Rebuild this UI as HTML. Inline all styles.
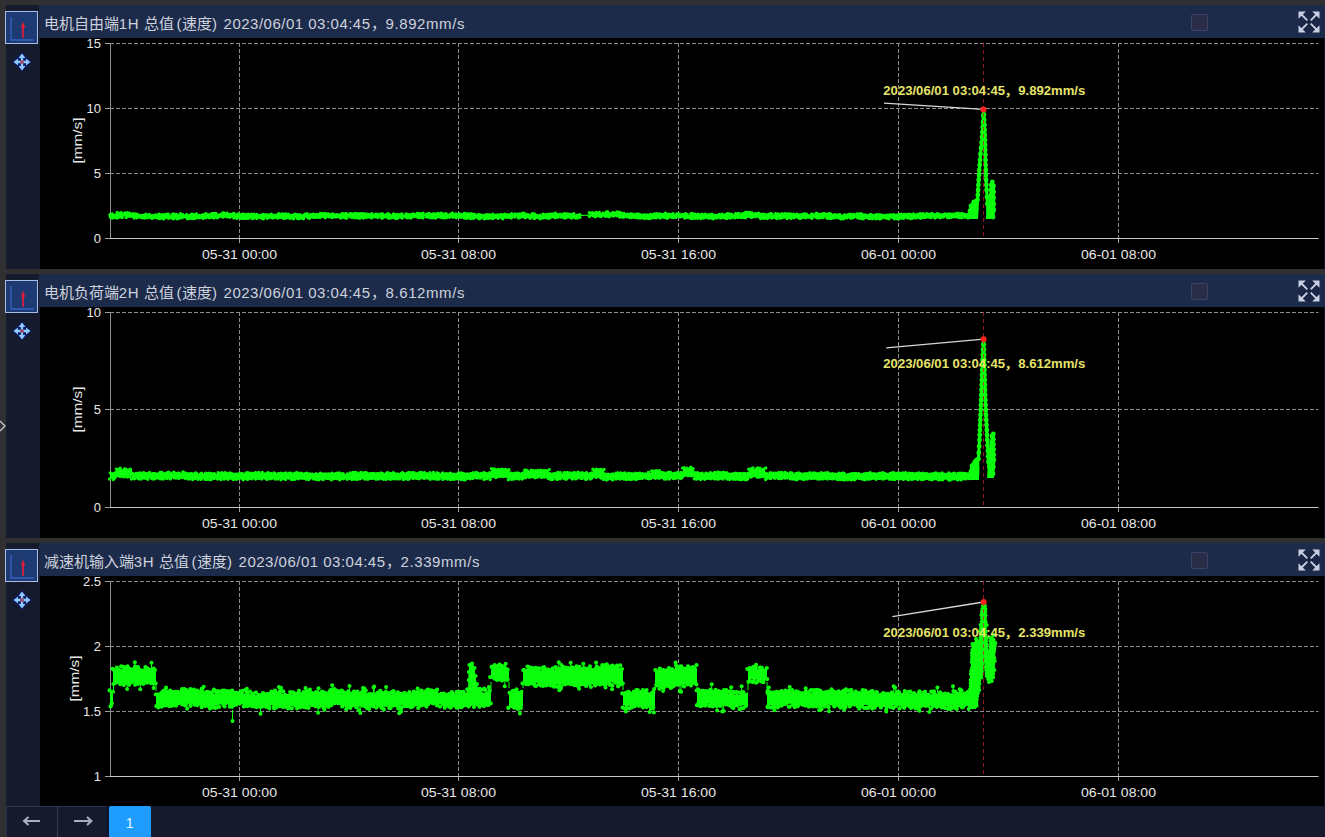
<!DOCTYPE html>
<html lang="zh-CN"><head><meta charset="utf-8">
<style>
*{margin:0;padding:0;box-sizing:border-box}
html,body{width:1325px;height:837px;overflow:hidden;background:#303033;font-family:"Liberation Sans",sans-serif}
.side{position:absolute;left:5.5px;width:34px;height:264px;background:#151a2d}
.ibox{position:absolute;left:5px;width:33px;height:33px;border:1.5px solid #a8bde8;background:#1d3a72}
.ibox svg{position:absolute;left:-1.5px;top:-1.5px}
.move{position:absolute;left:11px;width:22px;height:22px}
.tbar{position:absolute;left:39px;width:1286px;height:33px;background:#1d2b4b}
.l{letter-spacing:0.58px}
.l2{letter-spacing:0.49px}
.ttl{position:absolute;left:4.8px;top:9.5px;font-size:15px;line-height:18px;color:#cdd2dc;white-space:nowrap}
.chk{position:absolute;left:1152px;top:9px;width:17px;height:17px;border:1.5px solid #3a4268;border-radius:2px;background:#2a2c48}
.exp{position:absolute;left:1259px;top:5.5px}
.cbg{position:absolute;left:39.5px;width:1284px;height:231px;background:#000}
.rstrip{position:absolute;left:1323.5px;width:1.5px;height:231px;background:#10152a}
svg.main{position:absolute;left:0;top:0}
.yl{font-size:13px;fill:#e8e8e8}
.xl{font-size:13px;fill:#e8e8e8}
.yn{font-size:13px;fill:#e8e8e8}
.ann{font-size:13px;font-weight:bold;fill:#e6e46a}
.pbar{position:absolute;left:6px;top:806px;width:1319px;height:31px;background:#161a2d}
.pg{position:absolute;top:0;height:30px;color:#c8ccd6;font-size:16px;text-align:center;line-height:28px}
</style></head><body>

<div class="side" style="top:5px"></div>
<div class="ibox" style="top:11px"><svg width="33" height="33" viewBox="0 0 33 33"><path d="M6 6 V29 H29" stroke="#3562c4" stroke-width="1.3" fill="none"/><path d="M18 10.5 L20.2 16.5 L19 17 L18.8 27 H17.2 L17 17 L15.8 16.5 Z" fill="#d8203c"/></svg></div>
<div class="move" style="top:50.5px"><svg width="22" height="22" viewBox="0 0 22 22">
<path d="M11 1 L21 11 L11 21 L1 11 Z" fill="#0a1a5a"/>
<path d="M11 2.5 L14.5 7 H12.2 V9.8 H9.8 V7 H7.5 Z M11 19.5 L14.5 15 H12.2 V12.2 H9.8 V15 H7.5 Z M2.5 11 L7 7.5 V9.8 H9.8 V12.2 H7 V14.5 Z M19.5 11 L15 7.5 V9.8 H12.2 V12.2 H15 V14.5 Z" fill="#8fc8ff"/>
<circle cx="11" cy="11" r="1.6" fill="#c0304a"/></svg></div>
<div class="tbar" style="top:5px"><span class="ttl">电机自由端<span class="l">1H </span>总值<span class="l" style="padding-left:2.5px">(</span>速度<span class="l" style="padding-right:1.3px">) </span><span class="l2">2023/06/01 03:04:45</span>，<span class="l">9.892mm/s</span></span>
<div class="chk"></div>
<svg class="exp" width="22" height="22" viewBox="0 0 22 22"><rect x="0" y="0" width="22" height="22" fill="#1b2647"/><g fill="#c8cfe2"><path d="M0.5 0.5 H7.8 L0.5 7.8 Z M21.5 0.5 H14.2 L21.5 7.8 Z M0.5 21.5 H7.8 L0.5 14.2 Z M21.5 21.5 H14.2 L21.5 14.2 Z"/></g><g stroke="#c8cfe2" stroke-width="1.8"><path d="M3 3 L9.3 9.3 M19 3 L12.7 9.3 M3 19 L9.3 12.7 M19 19 L12.7 12.7"/></g></svg>
</div>
<div class="cbg" style="top:38px"></div>
<div class="rstrip" style="top:38px"></div>

<div class="side" style="top:274px"></div>
<div class="ibox" style="top:280px"><svg width="33" height="33" viewBox="0 0 33 33"><path d="M6 6 V29 H29" stroke="#3562c4" stroke-width="1.3" fill="none"/><path d="M18 10.5 L20.2 16.5 L19 17 L18.8 27 H17.2 L17 17 L15.8 16.5 Z" fill="#d8203c"/></svg></div>
<div class="move" style="top:319.5px"><svg width="22" height="22" viewBox="0 0 22 22">
<path d="M11 1 L21 11 L11 21 L1 11 Z" fill="#0a1a5a"/>
<path d="M11 2.5 L14.5 7 H12.2 V9.8 H9.8 V7 H7.5 Z M11 19.5 L14.5 15 H12.2 V12.2 H9.8 V15 H7.5 Z M2.5 11 L7 7.5 V9.8 H9.8 V12.2 H7 V14.5 Z M19.5 11 L15 7.5 V9.8 H12.2 V12.2 H15 V14.5 Z" fill="#8fc8ff"/>
<circle cx="11" cy="11" r="1.6" fill="#c0304a"/></svg></div>
<div class="tbar" style="top:274px"><span class="ttl">电机负荷端<span class="l">2H </span>总值<span class="l" style="padding-left:2.5px">(</span>速度<span class="l" style="padding-right:1.3px">) </span><span class="l2">2023/06/01 03:04:45</span>，<span class="l">8.612mm/s</span></span>
<div class="chk"></div>
<svg class="exp" width="22" height="22" viewBox="0 0 22 22"><rect x="0" y="0" width="22" height="22" fill="#1b2647"/><g fill="#c8cfe2"><path d="M0.5 0.5 H7.8 L0.5 7.8 Z M21.5 0.5 H14.2 L21.5 7.8 Z M0.5 21.5 H7.8 L0.5 14.2 Z M21.5 21.5 H14.2 L21.5 14.2 Z"/></g><g stroke="#c8cfe2" stroke-width="1.8"><path d="M3 3 L9.3 9.3 M19 3 L12.7 9.3 M3 19 L9.3 12.7 M19 19 L12.7 12.7"/></g></svg>
</div>
<div class="cbg" style="top:307px"></div>
<div class="rstrip" style="top:307px"></div>

<div class="side" style="top:543px"></div>
<div class="ibox" style="top:549px"><svg width="33" height="33" viewBox="0 0 33 33"><path d="M6 6 V29 H29" stroke="#3562c4" stroke-width="1.3" fill="none"/><path d="M18 10.5 L20.2 16.5 L19 17 L18.8 27 H17.2 L17 17 L15.8 16.5 Z" fill="#d8203c"/></svg></div>
<div class="move" style="top:588.5px"><svg width="22" height="22" viewBox="0 0 22 22">
<path d="M11 1 L21 11 L11 21 L1 11 Z" fill="#0a1a5a"/>
<path d="M11 2.5 L14.5 7 H12.2 V9.8 H9.8 V7 H7.5 Z M11 19.5 L14.5 15 H12.2 V12.2 H9.8 V15 H7.5 Z M2.5 11 L7 7.5 V9.8 H9.8 V12.2 H7 V14.5 Z M19.5 11 L15 7.5 V9.8 H12.2 V12.2 H15 V14.5 Z" fill="#8fc8ff"/>
<circle cx="11" cy="11" r="1.6" fill="#c0304a"/></svg></div>
<div class="tbar" style="top:543px"><span class="ttl">减速机输入端<span class="l">3H </span>总值<span class="l" style="padding-left:2.5px">(</span>速度<span class="l" style="padding-right:1.3px">) </span><span class="l2">2023/06/01 03:04:45</span>，<span class="l">2.339mm/s</span></span>
<div class="chk"></div>
<svg class="exp" width="22" height="22" viewBox="0 0 22 22"><rect x="0" y="0" width="22" height="22" fill="#1b2647"/><g fill="#c8cfe2"><path d="M0.5 0.5 H7.8 L0.5 7.8 Z M21.5 0.5 H14.2 L21.5 7.8 Z M0.5 21.5 H7.8 L0.5 14.2 Z M21.5 21.5 H14.2 L21.5 14.2 Z"/></g><g stroke="#c8cfe2" stroke-width="1.8"><path d="M3 3 L9.3 9.3 M19 3 L12.7 9.3 M3 19 L9.3 12.7 M19 19 L12.7 12.7"/></g></svg>
</div>
<div class="cbg" style="top:576px"></div>
<div class="rstrip" style="top:576px"></div>

<svg class="main" width="1325" height="837" viewBox="0 0 1325 837">
<line x1="105" y1="238.5" x2="110" y2="238.5" stroke="#a0a0a0" stroke-width="1"/>
<text x="101" y="243.1" text-anchor="end" class="yl">0</text>
<line x1="110" y1="173.5" x2="1318.5" y2="173.5" stroke="#8c8c8c" stroke-dasharray="4 2" stroke-width="1"/>
<line x1="105" y1="173.5" x2="110" y2="173.5" stroke="#a0a0a0" stroke-width="1"/>
<text x="101" y="178.1" text-anchor="end" class="yl">5</text>
<line x1="110" y1="108.5" x2="1318.5" y2="108.5" stroke="#8c8c8c" stroke-dasharray="4 2" stroke-width="1"/>
<line x1="105" y1="108.5" x2="110" y2="108.5" stroke="#a0a0a0" stroke-width="1"/>
<text x="101" y="113.1" text-anchor="end" class="yl">10</text>
<line x1="110" y1="43.5" x2="1318.5" y2="43.5" stroke="#8c8c8c" stroke-dasharray="4 2" stroke-width="1"/>
<line x1="105" y1="43.5" x2="110" y2="43.5" stroke="#a0a0a0" stroke-width="1"/>
<text x="101" y="48.1" text-anchor="end" class="yl">15</text>
<line x1="239.5" y1="43" x2="239.5" y2="238" stroke="#8c8c8c" stroke-dasharray="4 2" stroke-width="1"/>
<line x1="239.5" y1="238" x2="239.5" y2="243" stroke="#a0a0a0" stroke-width="1"/>
<text x="239.5" y="259" text-anchor="middle" class="xl" textLength="75" lengthAdjust="spacingAndGlyphs">05-31 00:00</text>
<line x1="458.5" y1="43" x2="458.5" y2="238" stroke="#8c8c8c" stroke-dasharray="4 2" stroke-width="1"/>
<line x1="458.5" y1="238" x2="458.5" y2="243" stroke="#a0a0a0" stroke-width="1"/>
<text x="458.5" y="259" text-anchor="middle" class="xl" textLength="75" lengthAdjust="spacingAndGlyphs">05-31 08:00</text>
<line x1="678.5" y1="43" x2="678.5" y2="238" stroke="#8c8c8c" stroke-dasharray="4 2" stroke-width="1"/>
<line x1="678.5" y1="238" x2="678.5" y2="243" stroke="#a0a0a0" stroke-width="1"/>
<text x="678.5" y="259" text-anchor="middle" class="xl" textLength="75" lengthAdjust="spacingAndGlyphs">05-31 16:00</text>
<line x1="898.5" y1="43" x2="898.5" y2="238" stroke="#8c8c8c" stroke-dasharray="4 2" stroke-width="1"/>
<line x1="898.5" y1="238" x2="898.5" y2="243" stroke="#a0a0a0" stroke-width="1"/>
<text x="898.5" y="259" text-anchor="middle" class="xl" textLength="75" lengthAdjust="spacingAndGlyphs">06-01 00:00</text>
<line x1="1118.5" y1="43" x2="1118.5" y2="238" stroke="#8c8c8c" stroke-dasharray="4 2" stroke-width="1"/>
<line x1="1118.5" y1="238" x2="1118.5" y2="243" stroke="#a0a0a0" stroke-width="1"/>
<text x="1118.5" y="259" text-anchor="middle" class="xl" textLength="75" lengthAdjust="spacingAndGlyphs">06-01 08:00</text>
<line x1="110.5" y1="43" x2="110.5" y2="238.5" stroke="#909090" stroke-width="1"/>
<line x1="110" y1="238.5" x2="1318.5" y2="238.5" stroke="#c8c8c8" stroke-width="1"/>
<text x="0" y="0" transform="translate(81.5 140.5) rotate(-90)" text-anchor="middle" class="yn" textLength="46" lengthAdjust="spacingAndGlyphs">[mm/s]</text>
<g fill="#0cff0c"><polygon points="110,214.3 112,214.1 114,214.8 116,214 118,214.6 118,212.5 120,212.5 122,213 124,213.6 126,212.6 128,212.7 130,213.3 132,213.8 134,213.2 135,213 135,214.8 137,214.5 139,214.7 141,214 143,214 145,214.3 147,215 149,214.6 151,214.5 153,214.9 155,214.7 157,214.5 159,215.2 161,215.1 163,214.5 165,214.9 167,214.8 169,215.3 171,215 173,214.4 175,215.3 177,214.1 179,214.5 181,214.9 183,214.1 185,214.6 187,214 189,214.9 191,215.1 193,214.8 195,215.3 197,214.5 199,215.1 201,214.9 203,214.9 205,214.6 207,215 209,215 211,214.2 213,214.3 215,213.3 217,214.1 219,213.9 221,214.4 223,214.2 225,213.5 227,213.7 229,214.2 231,213.4 233,214.1 235,213.7 237,213.7 239,213.6 241,214.6 243,213.8 245,214 247,214.3 249,215 251,214 253,214.6 255,214.8 257,215.3 259,215.3 261,215.3 263,214.5 265,214.7 267,214.5 269,215.2 271,215.3 273,214.1 275,214.1 277,214.1 279,214.1 281,214.5 283,214.6 285,214.2 287,213.9 289,214.5 291,214.5 293,214.8 295,215.4 297,215 299,214.8 301,214.9 303,215 305,214 307,215.1 309,214.8 311,214.8 313,214.5 315,213.8 317,213.8 319,213.3 321,214 323,213.2 325,213.3 327,213.5 329,213.5 331,213.9 333,213.5 335,213.5 337,213.7 339,213.7 341,214.1 343,213.6 345,214.7 347,214.3 349,213.7 351,213.8 353,213.9 355,213.8 357,213.5 359,214.5 361,214.7 363,214 365,214 367,213.5 369,213.6 371,214 373,213.9 375,214.8 377,213.9 379,213.7 381,215 383,214.4 385,213.9 387,214.4 389,213.7 391,214.4 393,215 395,214.9 397,214.7 399,214.1 401,214.2 403,213.9 405,214.7 407,214.2 409,214.5 411,213.8 413,213.5 415,214.3 417,214.4 419,214.2 421,214.1 423,214.2 425,214.1 427,213.4 429,213.8 431,213.7 433,213.2 435,213.3 437,213.6 439,213.6 441,214.2 443,214.6 445,213.9 447,214.6 449,214.7 451,214.6 453,213.8 455,213.6 457,213.6 459,213.6 461,213.6 463,214.3 465,214.7 467,214.7 469,214.3 471,214.7 473,215 475,214.1 477,215 479,215.4 481,215.2 483,215.1 485,214.7 487,214.3 489,215.1 491,214.5 493,215.1 495,215.3 497,214.5 499,214.5 501,215.2 503,214.9 505,214 507,213.9 509,213.8 511,214.8 513,214.5 515,213.5 517,214.4 519,214.6 521,214.1 523,213.7 525,214.1 527,213.6 529,213.5 531,215 533,214.7 535,214.6 537,215.2 539,214.6 541,215.2 543,215.1 545,214.1 547,214.1 549,214 551,213.8 553,214.2 555,213.7 557,213.8 559,213.4 561,214.4 563,213.7 565,213.9 567,214.1 569,214.7 571,214.1 573,214.9 575,214.4 577,214.5 579,214.5 580,213.8 580,218.2 579,218.3 577,217.1 575,217.7 573,217.9 571,217.8 569,217.7 567,217.5 565,217.8 563,216.7 561,217.1 559,216.8 557,216.7 555,217 553,217.8 551,217.9 549,218.3 547,218 545,218.4 543,218.4 541,218.5 539,218.1 537,218 535,217.4 533,218.3 531,218.1 529,217.8 527,218.1 525,217.9 523,216.7 521,217.5 519,217.6 517,216.8 515,218.1 513,217.3 511,217.4 509,218.2 507,218.1 505,218.1 503,218.3 501,218.1 499,218.1 497,217.7 495,217.8 493,217.4 491,217.5 489,218 487,217.6 485,217.8 483,217.5 481,218.2 479,217.8 477,218.2 475,218 473,217.8 471,217.2 469,217.6 467,217.4 465,218.2 463,217.1 461,217.5 459,218.1 457,218.1 455,217.1 453,217.3 451,216.9 449,217.3 447,217.1 445,217 443,217.1 441,217.6 439,217.9 437,217.8 435,216.7 433,216.8 431,216.9 429,217.6 427,216.6 425,216.6 423,216.5 421,216.9 419,217 417,217.3 415,217.5 413,217.8 411,217.2 409,218.2 407,217.9 405,217.7 403,217.6 401,218.3 399,217.8 397,217.7 395,218.2 393,217.2 391,218.4 389,217.7 387,217.3 385,217.8 383,218.1 381,217.1 379,217.4 377,217.1 375,217.5 373,217.2 371,217.6 369,217.3 367,217.9 365,217.2 363,217.2 361,217 359,216.8 357,216.9 355,216.9 353,217.1 351,217.5 349,217 347,217.3 345,218.2 343,217.7 341,217.4 339,217.6 337,218.1 335,217 333,218 331,216.9 329,217.8 327,217.5 325,217.9 323,216.7 321,217.1 319,217.5 317,216.7 315,216.8 313,217.8 311,217.7 309,218.4 307,217.4 305,217.7 303,218.6 301,218.8 299,218.1 297,217.6 295,217.8 293,218.5 291,217.4 289,217.7 287,217.4 285,218.6 283,218.3 281,218.6 279,217.3 277,217.9 275,218.1 273,217.7 271,217.4 269,218 267,218.2 265,217.5 263,218.5 261,218 259,217.8 257,218 255,218.2 253,218 251,217.5 249,218.4 247,218.5 245,217.7 243,217.6 241,218.3 239,217.3 237,218.3 235,218.1 233,217 231,217.7 229,217.7 227,216.8 225,217.8 223,217.6 221,217.4 219,216.5 217,216.8 215,216.7 213,217.4 211,217.1 209,217.2 207,218.4 205,218.7 203,218.2 201,217.9 199,218.8 197,218.7 195,218.5 193,218.8 191,218.1 189,218.1 187,218 185,218.3 183,218 181,218 179,218.1 177,217.9 175,218.6 173,218.4 171,218.2 169,218.1 167,218.5 165,217.9 163,217.9 161,218.3 159,217.7 157,218.6 155,218.3 153,218.2 151,217.9 149,218.2 147,218.4 145,218 143,217.6 141,218.5 139,217.4 137,217.6 135,218 135,217 134,216.4 132,217.3 130,216.6 128,216.3 126,216.3 124,216.5 122,217.3 120,216.2 118,217.5 118,217.7 116,217.1 114,217.8 112,217.1 110,217.5"/><circle cx="110" cy="214.6" r="1.7"/><circle cx="110.3" cy="217" r="1.7"/><circle cx="112.2" cy="213.9" r="1.7"/><circle cx="112.2" cy="218.1" r="1.7"/><circle cx="114.7" cy="215.3" r="1.7"/><circle cx="114.3" cy="217.6" r="1.7"/><circle cx="116.8" cy="215" r="1.7"/><circle cx="116.6" cy="218" r="1.7"/><circle cx="117.4" cy="214.2" r="1.7"/><circle cx="118.3" cy="217.5" r="1.7"/><circle cx="117.2" cy="212.4" r="1.7"/><circle cx="117.6" cy="217.1" r="1.7"/><circle cx="120.8" cy="212.8" r="1.7"/><circle cx="120.6" cy="216.7" r="1.7"/><circle cx="122.1" cy="213.7" r="1.7"/><circle cx="122.2" cy="217.6" r="1.7"/><circle cx="124.9" cy="213" r="1.7"/><circle cx="126.2" cy="217.6" r="1.7"/><circle cx="127.4" cy="212.6" r="1.7"/><circle cx="128.5" cy="216.3" r="1.7"/><circle cx="129.5" cy="213.2" r="1.7"/><circle cx="130.8" cy="216.2" r="1.7"/><circle cx="132.9" cy="213.8" r="1.7"/><circle cx="133.2" cy="216.4" r="1.7"/><circle cx="135" cy="213.9" r="1.7"/><circle cx="134.2" cy="218" r="1.7"/><circle cx="136.8" cy="214.1" r="1.7"/><circle cx="136.9" cy="217.8" r="1.7"/><circle cx="139.1" cy="215.1" r="1.7"/><circle cx="140.5" cy="217.4" r="1.7"/><circle cx="143.2" cy="215.3" r="1.7"/><circle cx="142.5" cy="217.9" r="1.7"/><circle cx="145.7" cy="214.8" r="1.7"/><circle cx="144.7" cy="218" r="1.7"/><circle cx="146" cy="214.1" r="1.7"/><circle cx="147.2" cy="217.8" r="1.7"/><circle cx="149.2" cy="214.4" r="1.7"/><circle cx="149.7" cy="217.6" r="1.7"/><circle cx="152.4" cy="215.4" r="1.7"/><circle cx="152.1" cy="218.4" r="1.7"/><circle cx="155.3" cy="214.9" r="1.7"/><circle cx="154.9" cy="217.5" r="1.7"/><circle cx="157.1" cy="215.2" r="1.7"/><circle cx="157.4" cy="217.9" r="1.7"/><circle cx="159.2" cy="214.2" r="1.7"/><circle cx="158.5" cy="218" r="1.7"/><circle cx="160.8" cy="215.6" r="1.7"/><circle cx="160" cy="218.5" r="1.7"/><circle cx="162.4" cy="214.7" r="1.7"/><circle cx="161.7" cy="217.7" r="1.7"/><circle cx="164.6" cy="214.8" r="1.7"/><circle cx="163.5" cy="218.9" r="1.7"/><circle cx="166.9" cy="214.2" r="1.7"/><circle cx="166.5" cy="217.5" r="1.7"/><circle cx="168.3" cy="214.3" r="1.7"/><circle cx="168.6" cy="218.2" r="1.7"/><circle cx="172.2" cy="214.5" r="1.7"/><circle cx="171.7" cy="218.1" r="1.7"/><circle cx="173.5" cy="213.9" r="1.7"/><circle cx="173.4" cy="218.8" r="1.7"/><circle cx="175.4" cy="214.8" r="1.7"/><circle cx="175.9" cy="217.6" r="1.7"/><circle cx="176.7" cy="214.4" r="1.7"/><circle cx="177.1" cy="218.7" r="1.7"/><circle cx="180.6" cy="213.8" r="1.7"/><circle cx="179.2" cy="218.3" r="1.7"/><circle cx="182.8" cy="214.7" r="1.7"/><circle cx="182.1" cy="217.8" r="1.7"/><circle cx="186.3" cy="215.2" r="1.7"/><circle cx="186.6" cy="217.6" r="1.7"/><circle cx="186.8" cy="214.7" r="1.7"/><circle cx="187.6" cy="218.8" r="1.7"/><circle cx="190.1" cy="215.1" r="1.7"/><circle cx="189.8" cy="218.2" r="1.7"/><circle cx="191.7" cy="214.3" r="1.7"/><circle cx="192" cy="218.4" r="1.7"/><circle cx="192.6" cy="214.4" r="1.7"/><circle cx="193.4" cy="218.5" r="1.7"/><circle cx="194" cy="214.8" r="1.7"/><circle cx="194.8" cy="218" r="1.7"/><circle cx="196.5" cy="214" r="1.7"/><circle cx="196.1" cy="218.1" r="1.7"/><circle cx="199.6" cy="215.4" r="1.7"/><circle cx="199.4" cy="217.8" r="1.7"/><circle cx="201.9" cy="215.1" r="1.7"/><circle cx="200.8" cy="217.4" r="1.7"/><circle cx="203.6" cy="214.6" r="1.7"/><circle cx="203" cy="218.4" r="1.7"/><circle cx="205.9" cy="213.8" r="1.7"/><circle cx="206" cy="217.8" r="1.7"/><circle cx="208.3" cy="214.8" r="1.7"/><circle cx="209.2" cy="217.8" r="1.7"/><circle cx="211.2" cy="213.9" r="1.7"/><circle cx="211" cy="217.2" r="1.7"/><circle cx="212.6" cy="213.8" r="1.7"/><circle cx="212.9" cy="217.5" r="1.7"/><circle cx="213.4" cy="213.8" r="1.7"/><circle cx="214.1" cy="218.1" r="1.7"/><circle cx="215.3" cy="213.4" r="1.7"/><circle cx="216.2" cy="216.7" r="1.7"/><circle cx="216.1" cy="213.6" r="1.7"/><circle cx="217.5" cy="217.8" r="1.7"/><circle cx="220.2" cy="214.4" r="1.7"/><circle cx="219.2" cy="216.6" r="1.7"/><circle cx="222.8" cy="213" r="1.7"/><circle cx="222.7" cy="217" r="1.7"/><circle cx="224.1" cy="213.3" r="1.7"/><circle cx="223.6" cy="216.8" r="1.7"/><circle cx="227.1" cy="213.3" r="1.7"/><circle cx="227.1" cy="216.8" r="1.7"/><circle cx="228.8" cy="214.4" r="1.7"/><circle cx="228.2" cy="216.6" r="1.7"/><circle cx="230.2" cy="214.7" r="1.7"/><circle cx="229.9" cy="217.2" r="1.7"/><circle cx="232.6" cy="214" r="1.7"/><circle cx="233.8" cy="217.9" r="1.7"/><circle cx="234" cy="213.5" r="1.7"/><circle cx="235.4" cy="217.2" r="1.7"/><circle cx="238" cy="214" r="1.7"/><circle cx="237" cy="218.4" r="1.7"/><circle cx="239.4" cy="214.6" r="1.7"/><circle cx="239.5" cy="217.3" r="1.7"/><circle cx="241.5" cy="214.9" r="1.7"/><circle cx="241.3" cy="218.4" r="1.7"/><circle cx="242" cy="214.2" r="1.7"/><circle cx="243.2" cy="218.4" r="1.7"/><circle cx="244.1" cy="214.2" r="1.7"/><circle cx="244.4" cy="218.4" r="1.7"/><circle cx="246.6" cy="214.8" r="1.7"/><circle cx="246.6" cy="218.2" r="1.7"/><circle cx="248.2" cy="214.2" r="1.7"/><circle cx="248.3" cy="218.3" r="1.7"/><circle cx="249.5" cy="214.9" r="1.7"/><circle cx="249.5" cy="217.2" r="1.7"/><circle cx="251.4" cy="214.3" r="1.7"/><circle cx="252.1" cy="218.6" r="1.7"/><circle cx="254" cy="214.1" r="1.7"/><circle cx="253.7" cy="218.1" r="1.7"/><circle cx="256.9" cy="214.4" r="1.7"/><circle cx="256.8" cy="218.4" r="1.7"/><circle cx="259.9" cy="215.4" r="1.7"/><circle cx="259.7" cy="217.6" r="1.7"/><circle cx="261.9" cy="214.9" r="1.7"/><circle cx="262.1" cy="218.6" r="1.7"/><circle cx="263.5" cy="214.4" r="1.7"/><circle cx="263.4" cy="218.8" r="1.7"/><circle cx="266" cy="214.6" r="1.7"/><circle cx="267.1" cy="218.2" r="1.7"/><circle cx="268.5" cy="215" r="1.7"/><circle cx="268.8" cy="217.5" r="1.7"/><circle cx="270.7" cy="215.2" r="1.7"/><circle cx="270.8" cy="217.3" r="1.7"/><circle cx="271.4" cy="214.1" r="1.7"/><circle cx="272.7" cy="218.1" r="1.7"/><circle cx="274.7" cy="215.1" r="1.7"/><circle cx="274.9" cy="217.6" r="1.7"/><circle cx="278.3" cy="213.9" r="1.7"/><circle cx="277.8" cy="218.1" r="1.7"/><circle cx="279.1" cy="213.9" r="1.7"/><circle cx="278.9" cy="217.5" r="1.7"/><circle cx="282" cy="214" r="1.7"/><circle cx="280.9" cy="217.6" r="1.7"/><circle cx="283.7" cy="214.2" r="1.7"/><circle cx="283.8" cy="218.4" r="1.7"/><circle cx="285.8" cy="213.9" r="1.7"/><circle cx="286.3" cy="218" r="1.7"/><circle cx="288.3" cy="214.1" r="1.7"/><circle cx="289.3" cy="217.9" r="1.7"/><circle cx="290.5" cy="215.4" r="1.7"/><circle cx="290.5" cy="218.2" r="1.7"/><circle cx="292.6" cy="215.3" r="1.7"/><circle cx="293.5" cy="217.9" r="1.7"/><circle cx="294.8" cy="214.2" r="1.7"/><circle cx="293.6" cy="218.8" r="1.7"/><circle cx="297" cy="214.6" r="1.7"/><circle cx="297.1" cy="218.1" r="1.7"/><circle cx="297.3" cy="214.9" r="1.7"/><circle cx="298.3" cy="218.8" r="1.7"/><circle cx="299.7" cy="214.6" r="1.7"/><circle cx="299.5" cy="217.6" r="1.7"/><circle cx="301.4" cy="215.4" r="1.7"/><circle cx="300.7" cy="218.2" r="1.7"/><circle cx="304.8" cy="214.2" r="1.7"/><circle cx="303.5" cy="218.8" r="1.7"/><circle cx="307.1" cy="213.8" r="1.7"/><circle cx="307.8" cy="217.7" r="1.7"/><circle cx="310.2" cy="214.8" r="1.7"/><circle cx="309.5" cy="218.2" r="1.7"/><circle cx="311.6" cy="214.7" r="1.7"/><circle cx="312.3" cy="217.1" r="1.7"/><circle cx="313.3" cy="214.1" r="1.7"/><circle cx="313.3" cy="216.9" r="1.7"/><circle cx="315.6" cy="214.6" r="1.7"/><circle cx="314.5" cy="217.5" r="1.7"/><circle cx="317.1" cy="214.4" r="1.7"/><circle cx="317.3" cy="217.4" r="1.7"/><circle cx="320.4" cy="213.5" r="1.7"/><circle cx="320" cy="217.4" r="1.7"/><circle cx="322.5" cy="213.8" r="1.7"/><circle cx="322.1" cy="216.5" r="1.7"/><circle cx="324.6" cy="213.5" r="1.7"/><circle cx="325.1" cy="217.7" r="1.7"/><circle cx="326.2" cy="213.9" r="1.7"/><circle cx="326.1" cy="216.8" r="1.7"/><circle cx="328.2" cy="213.9" r="1.7"/><circle cx="328.9" cy="216.7" r="1.7"/><circle cx="330.6" cy="214.5" r="1.7"/><circle cx="331.7" cy="217.5" r="1.7"/><circle cx="332.7" cy="213.9" r="1.7"/><circle cx="333.4" cy="217" r="1.7"/><circle cx="336.3" cy="214.6" r="1.7"/><circle cx="336" cy="217.1" r="1.7"/><circle cx="338.6" cy="215" r="1.7"/><circle cx="339.2" cy="217.1" r="1.7"/><circle cx="342" cy="213.6" r="1.7"/><circle cx="341" cy="218.1" r="1.7"/><circle cx="343.5" cy="213.9" r="1.7"/><circle cx="343.4" cy="217.1" r="1.7"/><circle cx="345.7" cy="213.8" r="1.7"/><circle cx="344.7" cy="217.6" r="1.7"/><circle cx="346.2" cy="213.7" r="1.7"/><circle cx="346.4" cy="218.3" r="1.7"/><circle cx="350.1" cy="213.6" r="1.7"/><circle cx="349.9" cy="216.9" r="1.7"/><circle cx="351.9" cy="213.9" r="1.7"/><circle cx="352.3" cy="217.6" r="1.7"/><circle cx="354.7" cy="213.4" r="1.7"/><circle cx="354.9" cy="217.7" r="1.7"/><circle cx="356.6" cy="213.6" r="1.7"/><circle cx="356.9" cy="217.5" r="1.7"/><circle cx="358.5" cy="213.9" r="1.7"/><circle cx="357.5" cy="217.8" r="1.7"/><circle cx="360" cy="213.6" r="1.7"/><circle cx="359.7" cy="218.2" r="1.7"/><circle cx="362.1" cy="213.7" r="1.7"/><circle cx="361" cy="216.7" r="1.7"/><circle cx="363.6" cy="213.9" r="1.7"/><circle cx="363.4" cy="218.1" r="1.7"/><circle cx="364.5" cy="214.3" r="1.7"/><circle cx="364.2" cy="216.7" r="1.7"/><circle cx="366.2" cy="213.9" r="1.7"/><circle cx="366.4" cy="217.6" r="1.7"/><circle cx="368.8" cy="214.4" r="1.7"/><circle cx="369.2" cy="217" r="1.7"/><circle cx="371.8" cy="213.7" r="1.7"/><circle cx="371.6" cy="217.9" r="1.7"/><circle cx="375.5" cy="214.1" r="1.7"/><circle cx="374.7" cy="216.9" r="1.7"/><circle cx="377.6" cy="214.1" r="1.7"/><circle cx="377.7" cy="217.6" r="1.7"/><circle cx="380.9" cy="214" r="1.7"/><circle cx="381.1" cy="217" r="1.7"/><circle cx="382.6" cy="213.9" r="1.7"/><circle cx="382" cy="218.2" r="1.7"/><circle cx="384.2" cy="215.1" r="1.7"/><circle cx="383.5" cy="217.3" r="1.7"/><circle cx="386.5" cy="214.6" r="1.7"/><circle cx="387" cy="217.2" r="1.7"/><circle cx="388" cy="213.6" r="1.7"/><circle cx="389" cy="218.2" r="1.7"/><circle cx="390.1" cy="214.9" r="1.7"/><circle cx="391.3" cy="217.7" r="1.7"/><circle cx="393.5" cy="213.9" r="1.7"/><circle cx="392.9" cy="217.4" r="1.7"/><circle cx="394.7" cy="214.8" r="1.7"/><circle cx="395.2" cy="218.3" r="1.7"/><circle cx="397.1" cy="214.5" r="1.7"/><circle cx="397.4" cy="218.2" r="1.7"/><circle cx="399.4" cy="214.6" r="1.7"/><circle cx="400.5" cy="217.3" r="1.7"/><circle cx="401.8" cy="214" r="1.7"/><circle cx="402.2" cy="218.1" r="1.7"/><circle cx="406" cy="214" r="1.7"/><circle cx="406.2" cy="217.4" r="1.7"/><circle cx="408" cy="214.4" r="1.7"/><circle cx="407.6" cy="217.8" r="1.7"/><circle cx="410.3" cy="214.6" r="1.7"/><circle cx="410.7" cy="218" r="1.7"/><circle cx="412.8" cy="214" r="1.7"/><circle cx="412.2" cy="216.9" r="1.7"/><circle cx="414.2" cy="214.5" r="1.7"/><circle cx="414.3" cy="216.5" r="1.7"/><circle cx="417.1" cy="213.5" r="1.7"/><circle cx="415.8" cy="216.4" r="1.7"/><circle cx="418.1" cy="214" r="1.7"/><circle cx="418.1" cy="217.5" r="1.7"/><circle cx="419.4" cy="213.5" r="1.7"/><circle cx="419.7" cy="217.6" r="1.7"/><circle cx="421.4" cy="214.3" r="1.7"/><circle cx="422.8" cy="217.8" r="1.7"/><circle cx="423.1" cy="213.1" r="1.7"/><circle cx="422.9" cy="217.7" r="1.7"/><circle cx="426.6" cy="214.3" r="1.7"/><circle cx="426.6" cy="216.8" r="1.7"/><circle cx="427.2" cy="214.2" r="1.7"/><circle cx="427.4" cy="216.9" r="1.7"/><circle cx="429.2" cy="213.4" r="1.7"/><circle cx="429.6" cy="217.6" r="1.7"/><circle cx="431.6" cy="214.6" r="1.7"/><circle cx="431.9" cy="217.8" r="1.7"/><circle cx="433.5" cy="213.8" r="1.7"/><circle cx="434.2" cy="217.7" r="1.7"/><circle cx="436.6" cy="214" r="1.7"/><circle cx="435.8" cy="217.9" r="1.7"/><circle cx="438.2" cy="213.4" r="1.7"/><circle cx="436.9" cy="216.9" r="1.7"/><circle cx="441.1" cy="213.2" r="1.7"/><circle cx="440.4" cy="217.3" r="1.7"/><circle cx="442.6" cy="214" r="1.7"/><circle cx="442.8" cy="217.9" r="1.7"/><circle cx="445.6" cy="213.6" r="1.7"/><circle cx="444.4" cy="217.7" r="1.7"/><circle cx="446.4" cy="214.2" r="1.7"/><circle cx="446.4" cy="217.8" r="1.7"/><circle cx="450.1" cy="214.2" r="1.7"/><circle cx="449.4" cy="217.2" r="1.7"/><circle cx="452.3" cy="213.3" r="1.7"/><circle cx="452.3" cy="216.6" r="1.7"/><circle cx="452.9" cy="214.7" r="1.7"/><circle cx="453.3" cy="217.2" r="1.7"/><circle cx="455.8" cy="214" r="1.7"/><circle cx="456.2" cy="217.8" r="1.7"/><circle cx="459.1" cy="213.8" r="1.7"/><circle cx="458.6" cy="216.9" r="1.7"/><circle cx="461.9" cy="214.4" r="1.7"/><circle cx="461.1" cy="217.4" r="1.7"/><circle cx="464.4" cy="213.5" r="1.7"/><circle cx="464.3" cy="218.1" r="1.7"/><circle cx="465.6" cy="213.9" r="1.7"/><circle cx="466.4" cy="218.2" r="1.7"/><circle cx="467.1" cy="213.9" r="1.7"/><circle cx="467.4" cy="217.7" r="1.7"/><circle cx="469" cy="213.9" r="1.7"/><circle cx="470" cy="218.1" r="1.7"/><circle cx="471.5" cy="213.8" r="1.7"/><circle cx="470.6" cy="218.6" r="1.7"/><circle cx="473.8" cy="214.5" r="1.7"/><circle cx="473" cy="218.2" r="1.7"/><circle cx="474.5" cy="214.5" r="1.7"/><circle cx="474.2" cy="217.9" r="1.7"/><circle cx="478" cy="214.8" r="1.7"/><circle cx="477.9" cy="218.1" r="1.7"/><circle cx="479.4" cy="214.6" r="1.7"/><circle cx="479.6" cy="218.8" r="1.7"/><circle cx="481.5" cy="215.2" r="1.7"/><circle cx="481.2" cy="217.8" r="1.7"/><circle cx="484.5" cy="215.2" r="1.7"/><circle cx="484.2" cy="218.7" r="1.7"/><circle cx="486.7" cy="214.7" r="1.7"/><circle cx="486.1" cy="218.4" r="1.7"/><circle cx="487.8" cy="215.2" r="1.7"/><circle cx="488.3" cy="218.3" r="1.7"/><circle cx="489.6" cy="214.6" r="1.7"/><circle cx="489.9" cy="218" r="1.7"/><circle cx="492.9" cy="214.2" r="1.7"/><circle cx="492.5" cy="218.5" r="1.7"/><circle cx="494.2" cy="215.4" r="1.7"/><circle cx="493.5" cy="218.1" r="1.7"/><circle cx="496.3" cy="215.3" r="1.7"/><circle cx="495.8" cy="217.4" r="1.7"/><circle cx="498.2" cy="215" r="1.7"/><circle cx="498.2" cy="218.2" r="1.7"/><circle cx="501" cy="214.5" r="1.7"/><circle cx="501.6" cy="217.6" r="1.7"/><circle cx="503.3" cy="215" r="1.7"/><circle cx="502.8" cy="218.7" r="1.7"/><circle cx="504.7" cy="214.1" r="1.7"/><circle cx="505.2" cy="217.1" r="1.7"/><circle cx="507.3" cy="214.7" r="1.7"/><circle cx="507.2" cy="217.4" r="1.7"/><circle cx="509.6" cy="215" r="1.7"/><circle cx="509.2" cy="217.3" r="1.7"/><circle cx="511.7" cy="213.7" r="1.7"/><circle cx="511.3" cy="218" r="1.7"/><circle cx="514.9" cy="214" r="1.7"/><circle cx="514.7" cy="217" r="1.7"/><circle cx="517.4" cy="214.1" r="1.7"/><circle cx="518.2" cy="217.8" r="1.7"/><circle cx="519.5" cy="214" r="1.7"/><circle cx="519.2" cy="217.8" r="1.7"/><circle cx="522.3" cy="213.5" r="1.7"/><circle cx="521.5" cy="216.9" r="1.7"/><circle cx="523.3" cy="213.2" r="1.7"/><circle cx="524.2" cy="217" r="1.7"/><circle cx="525.2" cy="214" r="1.7"/><circle cx="525.5" cy="217.7" r="1.7"/><circle cx="527.8" cy="214.8" r="1.7"/><circle cx="528.6" cy="216.9" r="1.7"/><circle cx="531.5" cy="214.8" r="1.7"/><circle cx="530.2" cy="218.3" r="1.7"/><circle cx="532.5" cy="213.7" r="1.7"/><circle cx="534" cy="218.1" r="1.7"/><circle cx="534.4" cy="214" r="1.7"/><circle cx="534.6" cy="218.4" r="1.7"/><circle cx="536.4" cy="215.3" r="1.7"/><circle cx="537.4" cy="217.5" r="1.7"/><circle cx="540" cy="215.1" r="1.7"/><circle cx="540.1" cy="218.7" r="1.7"/><circle cx="543.1" cy="214.1" r="1.7"/><circle cx="542.9" cy="218.1" r="1.7"/><circle cx="545.1" cy="215.1" r="1.7"/><circle cx="545.3" cy="217.5" r="1.7"/><circle cx="546.3" cy="214.4" r="1.7"/><circle cx="546.2" cy="217.8" r="1.7"/><circle cx="548.5" cy="214.3" r="1.7"/><circle cx="548.5" cy="218.3" r="1.7"/><circle cx="550.4" cy="214.2" r="1.7"/><circle cx="549.9" cy="217.9" r="1.7"/><circle cx="552.4" cy="214" r="1.7"/><circle cx="553.3" cy="216.8" r="1.7"/><circle cx="555.3" cy="213.2" r="1.7"/><circle cx="555.2" cy="217.7" r="1.7"/><circle cx="557.7" cy="214.7" r="1.7"/><circle cx="558" cy="217.3" r="1.7"/><circle cx="560.2" cy="214.2" r="1.7"/><circle cx="561.1" cy="217" r="1.7"/><circle cx="563.5" cy="213.9" r="1.7"/><circle cx="563.8" cy="217.8" r="1.7"/><circle cx="565.3" cy="213.8" r="1.7"/><circle cx="565.5" cy="217.9" r="1.7"/><circle cx="567.8" cy="213.9" r="1.7"/><circle cx="567.3" cy="217.1" r="1.7"/><circle cx="570.2" cy="214.4" r="1.7"/><circle cx="569.9" cy="217.3" r="1.7"/><circle cx="571" cy="214.4" r="1.7"/><circle cx="571.6" cy="218.1" r="1.7"/><circle cx="573.1" cy="214.9" r="1.7"/><circle cx="572.8" cy="216.9" r="1.7"/><circle cx="573.8" cy="213.8" r="1.7"/><circle cx="575.3" cy="217.9" r="1.7"/><circle cx="577.5" cy="215.1" r="1.7"/><circle cx="577.3" cy="218" r="1.7"/><circle cx="579.8" cy="214.6" r="1.7"/><circle cx="579.8" cy="217.4" r="1.7"/>
<polyline points="580,215.5 590,215.2" stroke="#0cff0c" stroke-width="1.2" fill="none"/>
<polygon points="590,212.8 592,213.1 594,212.1 596,212.2 598,211.9 600,212.9 602,213.1 604,212.8 606,212.3 608,213 610,212.9 612,212.5 614,212.1 616,212.1 618,212.3 620,212.1 620,213.7 622,213.6 624,213.3 626,214.1 628,213.7 630,213.7 632,213.7 634,213.8 636,214.9 638,214.2 640,215.4 642,214.1 644,215.2 646,214.1 648,213.8 650,214.7 652,213.9 654,214.4 656,213.6 658,213.3 660,214.3 662,214.3 664,214.4 666,214.3 668,213.4 670,214.1 672,214.2 674,213.9 676,214.6 678,213.6 680,214.6 682,214.3 684,213.4 686,213.5 688,214.5 690,214.9 692,214 694,214.4 696,215.1 698,214.4 700,215.4 702,214.9 704,214.2 706,214.7 708,214.9 710,214.7 712,215 714,214.3 716,215.2 718,214.6 720,214.9 722,214.9 724,214.6 726,214.4 728,214.9 730,215 732,214.7 734,214.3 736,213.8 738,213.5 740,214.7 742,214.4 744,214.6 746,214 746,212.3 748,213.7 750,213 752,212.7 754,213.6 756,213.9 758,213 760,213.7 760,214.5 762,215.2 764,214.7 766,215.4 768,215 770,215 772,215.2 774,214.1 776,213.8 778,213.9 780,213.9 782,213.8 784,213.7 786,214.5 788,214.9 790,214.4 792,215.1 794,215.1 796,213.9 798,214.6 800,214.4 802,214 804,215.1 806,214.1 808,214.4 810,214.4 812,214.8 814,214.3 816,213.9 818,213.9 820,213.5 822,214.6 824,214.7 826,213.7 828,213.6 830,214 832,214.3 834,215.2 836,215.3 838,215.3 840,214.2 842,215.2 844,215.1 846,215 848,215.4 850,214.1 852,214.1 854,215 856,215.2 858,214.8 860,214.2 862,214.7 864,214.9 866,214 868,214.4 870,214.4 872,214.2 874,214.8 876,214.4 878,214.5 880,214.4 882,215.1 884,214.2 886,215.1 888,214.4 890,214.2 892,215.4 894,214.4 896,215.4 898,215.3 900,215.3 902,214.2 904,214.6 906,214.1 908,215.1 910,214.9 912,214.5 914,214.1 916,213.9 918,214.5 920,214 922,214.2 924,213.6 926,213.7 928,213.5 930,214.4 932,214.2 934,213.6 936,214.6 938,213.8 940,214 942,213.6 944,213.8 946,214.6 948,213.8 950,213.6 952,214 954,213.7 956,214.5 958,213.4 960,214.6 962,213.3 964,214.4 966,214.1 968,213.5 970,213.9 970,217 968,217.3 966,217.3 964,216.8 962,216.7 960,217.6 958,217.8 956,216.8 954,217.6 952,217.4 950,217.5 948,217.6 946,216.8 944,217.1 942,217.8 940,217 938,216.9 936,218 934,217.2 932,217 930,217.1 928,217.1 926,218.1 924,216.8 922,217.5 920,217.5 918,217.5 916,217.5 914,218.2 912,218.2 910,217.2 908,218.3 906,217.9 904,218.4 902,217.9 900,218.7 898,218.6 896,218.5 894,217.7 892,218.2 890,218.1 888,218.3 886,217.5 884,218.4 882,218.1 880,217.8 878,218.1 876,218.7 874,217.7 872,217.8 870,218.6 868,218 866,218.6 864,217.3 862,217.9 860,218.4 858,218.4 856,217.7 854,218.4 852,217.4 850,218.4 848,218 846,218.5 844,217.6 842,217.8 840,218.3 838,218.6 836,218.4 834,218.2 832,217.5 830,217.5 828,217.7 826,217.7 824,216.9 822,216.8 820,216.9 818,217.7 816,217.8 814,217 812,217 810,217.7 808,217.3 806,218.4 804,217.8 802,217.5 800,218 798,218.4 796,217.2 794,217.4 792,217.6 790,218.3 788,217.1 786,218.5 784,217.5 782,218.1 780,217.1 778,218.3 776,217.5 774,217.3 772,218.5 770,218.7 768,218.8 766,218 764,217.8 762,217.9 760,218 760,217.1 758,217 756,217.5 754,217.6 752,216.1 750,216 748,216.6 746,216.2 746,217.1 744,217.6 742,217.3 740,217.5 738,217.3 736,217.8 734,217.2 732,217.3 730,217.4 728,218 726,218 724,218.1 722,218.7 720,218.7 718,218.3 716,217.8 714,218.6 712,218.6 710,217.6 708,218.2 706,218.7 704,218.6 702,217.9 700,217.9 698,218.2 696,218.4 694,218.2 692,217.6 690,218.4 688,218 686,217.1 684,217.9 682,217.5 680,216.8 678,217.1 676,217.9 674,217.6 672,217.8 670,217.8 668,217 666,217.5 664,217.9 662,217.8 660,217.8 658,216.7 656,218 654,218 652,217.8 650,217.6 648,217.5 646,217.3 644,217.8 642,218.6 640,218.7 638,218.3 636,218.3 634,217.7 632,218.3 630,217.5 628,217.2 626,217.5 624,217.7 622,217.8 620,217.3 620,216.6 618,216.5 616,216 614,215.8 612,215.3 610,215.9 608,216.6 606,216.1 604,216.5 602,215.5 600,215.4 598,216.2 596,215.5 594,216.8 592,216.5 590,216.2"/><circle cx="589.4" cy="212.7" r="1.7"/><circle cx="589.4" cy="216.5" r="1.7"/><circle cx="592.3" cy="212.8" r="1.7"/><circle cx="593.2" cy="215.7" r="1.7"/><circle cx="596.3" cy="212.4" r="1.7"/><circle cx="595.5" cy="216.7" r="1.7"/><circle cx="597.7" cy="213.3" r="1.7"/><circle cx="598.3" cy="215.8" r="1.7"/><circle cx="599.3" cy="212.4" r="1.7"/><circle cx="600.4" cy="216.5" r="1.7"/><circle cx="603" cy="213.1" r="1.7"/><circle cx="601.8" cy="216.1" r="1.7"/><circle cx="606.2" cy="212.1" r="1.7"/><circle cx="605.4" cy="216.2" r="1.7"/><circle cx="607.5" cy="211.8" r="1.7"/><circle cx="607.4" cy="216" r="1.7"/><circle cx="608.3" cy="213.2" r="1.7"/><circle cx="609.3" cy="216.7" r="1.7"/><circle cx="611.8" cy="213.1" r="1.7"/><circle cx="611.9" cy="215.2" r="1.7"/><circle cx="613.4" cy="212.7" r="1.7"/><circle cx="613.4" cy="216" r="1.7"/><circle cx="616.9" cy="212" r="1.7"/><circle cx="616.7" cy="215.8" r="1.7"/><circle cx="619.3" cy="212.1" r="1.7"/><circle cx="619.9" cy="215.3" r="1.7"/><circle cx="620.7" cy="213.7" r="1.7"/><circle cx="619.6" cy="217" r="1.7"/><circle cx="621.7" cy="213.1" r="1.7"/><circle cx="621.7" cy="216.8" r="1.7"/><circle cx="624" cy="213.4" r="1.7"/><circle cx="623.6" cy="217.3" r="1.7"/><circle cx="627.3" cy="214.1" r="1.7"/><circle cx="627.3" cy="216.9" r="1.7"/><circle cx="629.6" cy="214.3" r="1.7"/><circle cx="629.8" cy="217.5" r="1.7"/><circle cx="631.1" cy="213.9" r="1.7"/><circle cx="631.5" cy="217.6" r="1.7"/><circle cx="633.1" cy="214.3" r="1.7"/><circle cx="634.5" cy="217.5" r="1.7"/><circle cx="636.2" cy="214.3" r="1.7"/><circle cx="637" cy="217.7" r="1.7"/><circle cx="638.3" cy="214" r="1.7"/><circle cx="639.5" cy="218" r="1.7"/><circle cx="640.1" cy="214.6" r="1.7"/><circle cx="640.7" cy="217.5" r="1.7"/><circle cx="642.7" cy="215.1" r="1.7"/><circle cx="641.5" cy="217.9" r="1.7"/><circle cx="644.2" cy="214.9" r="1.7"/><circle cx="644.5" cy="218.6" r="1.7"/><circle cx="646.6" cy="215" r="1.7"/><circle cx="646.6" cy="217.9" r="1.7"/><circle cx="649.2" cy="215.1" r="1.7"/><circle cx="648.3" cy="218.4" r="1.7"/><circle cx="650.6" cy="214.5" r="1.7"/><circle cx="650.2" cy="218.5" r="1.7"/><circle cx="652.4" cy="214.7" r="1.7"/><circle cx="653.1" cy="217.8" r="1.7"/><circle cx="654.4" cy="214" r="1.7"/><circle cx="654.9" cy="217.2" r="1.7"/><circle cx="656.6" cy="213.8" r="1.7"/><circle cx="656.2" cy="217.9" r="1.7"/><circle cx="659.3" cy="213.9" r="1.7"/><circle cx="658.8" cy="217" r="1.7"/><circle cx="661" cy="214.1" r="1.7"/><circle cx="660.3" cy="218" r="1.7"/><circle cx="663.4" cy="214.5" r="1.7"/><circle cx="663.5" cy="216.9" r="1.7"/><circle cx="665.5" cy="213.2" r="1.7"/><circle cx="664.2" cy="217.5" r="1.7"/><circle cx="667.7" cy="214.4" r="1.7"/><circle cx="667.1" cy="218.2" r="1.7"/><circle cx="669.3" cy="214.3" r="1.7"/><circle cx="669.1" cy="217.1" r="1.7"/><circle cx="671.4" cy="214.7" r="1.7"/><circle cx="672" cy="217.4" r="1.7"/><circle cx="673" cy="213.8" r="1.7"/><circle cx="673.3" cy="217.5" r="1.7"/><circle cx="676.8" cy="213.9" r="1.7"/><circle cx="675.9" cy="217.6" r="1.7"/><circle cx="678.9" cy="214" r="1.7"/><circle cx="679.6" cy="216.8" r="1.7"/><circle cx="681.8" cy="214.5" r="1.7"/><circle cx="681" cy="216.7" r="1.7"/><circle cx="684.2" cy="214.6" r="1.7"/><circle cx="684.7" cy="218.1" r="1.7"/><circle cx="685.4" cy="213.8" r="1.7"/><circle cx="686" cy="217.6" r="1.7"/><circle cx="687.1" cy="214.5" r="1.7"/><circle cx="687.8" cy="217.4" r="1.7"/><circle cx="690.9" cy="213.7" r="1.7"/><circle cx="690.5" cy="218.3" r="1.7"/><circle cx="692.8" cy="213.8" r="1.7"/><circle cx="692.2" cy="218.5" r="1.7"/><circle cx="695.1" cy="214.2" r="1.7"/><circle cx="694.9" cy="218.2" r="1.7"/><circle cx="696.9" cy="214.9" r="1.7"/><circle cx="697.5" cy="218.3" r="1.7"/><circle cx="698.1" cy="214.3" r="1.7"/><circle cx="699.1" cy="217.6" r="1.7"/><circle cx="699.7" cy="214.9" r="1.7"/><circle cx="700.7" cy="218.5" r="1.7"/><circle cx="702.2" cy="214.1" r="1.7"/><circle cx="703.4" cy="218" r="1.7"/><circle cx="705.3" cy="214.3" r="1.7"/><circle cx="705.1" cy="217.6" r="1.7"/><circle cx="708.6" cy="214.6" r="1.7"/><circle cx="708.4" cy="218" r="1.7"/><circle cx="710.5" cy="214.9" r="1.7"/><circle cx="710.6" cy="218.1" r="1.7"/><circle cx="711.9" cy="214.1" r="1.7"/><circle cx="712.9" cy="218.8" r="1.7"/><circle cx="714.8" cy="215.3" r="1.7"/><circle cx="713.8" cy="218.3" r="1.7"/><circle cx="717.1" cy="215.5" r="1.7"/><circle cx="716.7" cy="218" r="1.7"/><circle cx="719.3" cy="214.4" r="1.7"/><circle cx="720.3" cy="218.1" r="1.7"/><circle cx="722" cy="214.2" r="1.7"/><circle cx="722.2" cy="217.6" r="1.7"/><circle cx="725.1" cy="214.7" r="1.7"/><circle cx="724.9" cy="218.1" r="1.7"/><circle cx="727.3" cy="213.8" r="1.7"/><circle cx="726.9" cy="218.4" r="1.7"/><circle cx="729" cy="213.9" r="1.7"/><circle cx="729.1" cy="217.4" r="1.7"/><circle cx="731.1" cy="214.1" r="1.7"/><circle cx="730.2" cy="218.1" r="1.7"/><circle cx="731.9" cy="214.8" r="1.7"/><circle cx="731.7" cy="217.6" r="1.7"/><circle cx="735.6" cy="213.6" r="1.7"/><circle cx="734.8" cy="217.9" r="1.7"/><circle cx="737.8" cy="213.6" r="1.7"/><circle cx="737.8" cy="217.5" r="1.7"/><circle cx="738.7" cy="213.5" r="1.7"/><circle cx="739.1" cy="217.1" r="1.7"/><circle cx="741.8" cy="213.9" r="1.7"/><circle cx="741.3" cy="217.6" r="1.7"/><circle cx="744" cy="213.5" r="1.7"/><circle cx="743.4" cy="217.6" r="1.7"/><circle cx="745.6" cy="214" r="1.7"/><circle cx="745.4" cy="217.7" r="1.7"/><circle cx="745.8" cy="212.3" r="1.7"/><circle cx="745.5" cy="217" r="1.7"/><circle cx="748.1" cy="212.4" r="1.7"/><circle cx="748" cy="216.3" r="1.7"/><circle cx="749.8" cy="212.5" r="1.7"/><circle cx="749.8" cy="216.2" r="1.7"/><circle cx="752" cy="212.9" r="1.7"/><circle cx="751.5" cy="217.4" r="1.7"/><circle cx="754.9" cy="214" r="1.7"/><circle cx="753.7" cy="216.5" r="1.7"/><circle cx="756" cy="213.7" r="1.7"/><circle cx="755.4" cy="216.8" r="1.7"/><circle cx="758.5" cy="213.1" r="1.7"/><circle cx="758.7" cy="216.8" r="1.7"/><circle cx="759.5" cy="214.2" r="1.7"/><circle cx="760.7" cy="218.6" r="1.7"/><circle cx="761.8" cy="214.1" r="1.7"/><circle cx="762" cy="217.7" r="1.7"/><circle cx="764.2" cy="214.1" r="1.7"/><circle cx="764.1" cy="218.4" r="1.7"/><circle cx="766.6" cy="214.9" r="1.7"/><circle cx="766.4" cy="217.7" r="1.7"/><circle cx="768.4" cy="214.4" r="1.7"/><circle cx="767.4" cy="218.6" r="1.7"/><circle cx="770.5" cy="213.8" r="1.7"/><circle cx="771.4" cy="218.1" r="1.7"/><circle cx="771.8" cy="213.9" r="1.7"/><circle cx="772.7" cy="217.5" r="1.7"/><circle cx="775.6" cy="213.8" r="1.7"/><circle cx="775.5" cy="217.7" r="1.7"/><circle cx="778.3" cy="214" r="1.7"/><circle cx="777.1" cy="218.5" r="1.7"/><circle cx="780.6" cy="214.7" r="1.7"/><circle cx="780.3" cy="218.3" r="1.7"/><circle cx="782.2" cy="213.6" r="1.7"/><circle cx="782.6" cy="217.6" r="1.7"/><circle cx="785.2" cy="213.8" r="1.7"/><circle cx="784.9" cy="217" r="1.7"/><circle cx="787.6" cy="214" r="1.7"/><circle cx="787.1" cy="218.5" r="1.7"/><circle cx="789.6" cy="214" r="1.7"/><circle cx="788.8" cy="217.6" r="1.7"/><circle cx="791.1" cy="214.1" r="1.7"/><circle cx="791" cy="218.2" r="1.7"/><circle cx="793.6" cy="214.1" r="1.7"/><circle cx="794.1" cy="217.8" r="1.7"/><circle cx="796.8" cy="214.2" r="1.7"/><circle cx="797.6" cy="217.3" r="1.7"/><circle cx="799.1" cy="215" r="1.7"/><circle cx="799.4" cy="218.3" r="1.7"/><circle cx="801.2" cy="214.7" r="1.7"/><circle cx="800.9" cy="218.3" r="1.7"/><circle cx="803.1" cy="214.1" r="1.7"/><circle cx="803.5" cy="217.4" r="1.7"/><circle cx="804.8" cy="213.9" r="1.7"/><circle cx="805.5" cy="217.7" r="1.7"/><circle cx="806.4" cy="214.3" r="1.7"/><circle cx="806.5" cy="217.2" r="1.7"/><circle cx="807.3" cy="215.1" r="1.7"/><circle cx="808.5" cy="217" r="1.7"/><circle cx="811.5" cy="214.3" r="1.7"/><circle cx="810.1" cy="217.6" r="1.7"/><circle cx="812.3" cy="214.2" r="1.7"/><circle cx="812" cy="218.2" r="1.7"/><circle cx="815.5" cy="214.7" r="1.7"/><circle cx="815.5" cy="217" r="1.7"/><circle cx="816.4" cy="213.2" r="1.7"/><circle cx="817.4" cy="217.9" r="1.7"/><circle cx="818.3" cy="214.2" r="1.7"/><circle cx="819.4" cy="218" r="1.7"/><circle cx="820.9" cy="214.5" r="1.7"/><circle cx="820.9" cy="217.1" r="1.7"/><circle cx="822.6" cy="213.7" r="1.7"/><circle cx="821.9" cy="217.5" r="1.7"/><circle cx="824.6" cy="213.6" r="1.7"/><circle cx="823.3" cy="217.5" r="1.7"/><circle cx="827" cy="214.5" r="1.7"/><circle cx="827.2" cy="218.3" r="1.7"/><circle cx="828.7" cy="213.8" r="1.7"/><circle cx="828.4" cy="217.8" r="1.7"/><circle cx="830.5" cy="213.9" r="1.7"/><circle cx="830.1" cy="218.5" r="1.7"/><circle cx="830.9" cy="214.4" r="1.7"/><circle cx="831.1" cy="218.3" r="1.7"/><circle cx="833.5" cy="215.1" r="1.7"/><circle cx="833.4" cy="217.9" r="1.7"/><circle cx="835" cy="214.7" r="1.7"/><circle cx="834.6" cy="217.8" r="1.7"/><circle cx="837.1" cy="215.3" r="1.7"/><circle cx="837.5" cy="217.6" r="1.7"/><circle cx="838.6" cy="214.9" r="1.7"/><circle cx="838.5" cy="217.7" r="1.7"/><circle cx="839.9" cy="214.8" r="1.7"/><circle cx="840.9" cy="218.9" r="1.7"/><circle cx="843.8" cy="215.5" r="1.7"/><circle cx="843.2" cy="218.7" r="1.7"/><circle cx="844.7" cy="215" r="1.7"/><circle cx="844.1" cy="218.3" r="1.7"/><circle cx="847.4" cy="215" r="1.7"/><circle cx="847.1" cy="217.9" r="1.7"/><circle cx="849.6" cy="214.2" r="1.7"/><circle cx="850.6" cy="218" r="1.7"/><circle cx="852" cy="214.4" r="1.7"/><circle cx="851.9" cy="217.9" r="1.7"/><circle cx="854.1" cy="214.4" r="1.7"/><circle cx="853.4" cy="217.5" r="1.7"/><circle cx="857" cy="213.9" r="1.7"/><circle cx="857.5" cy="217.6" r="1.7"/><circle cx="858.5" cy="214.1" r="1.7"/><circle cx="858.4" cy="218" r="1.7"/><circle cx="860.3" cy="213.9" r="1.7"/><circle cx="860.2" cy="218.1" r="1.7"/><circle cx="861.5" cy="213.9" r="1.7"/><circle cx="861.5" cy="218.5" r="1.7"/><circle cx="864.2" cy="215" r="1.7"/><circle cx="863.3" cy="218.7" r="1.7"/><circle cx="865.8" cy="215.1" r="1.7"/><circle cx="866.3" cy="217.5" r="1.7"/><circle cx="869.6" cy="215.1" r="1.7"/><circle cx="868.9" cy="218.5" r="1.7"/><circle cx="870.5" cy="214.5" r="1.7"/><circle cx="870.1" cy="218.3" r="1.7"/><circle cx="872.3" cy="215.1" r="1.7"/><circle cx="872.5" cy="218.8" r="1.7"/><circle cx="875.6" cy="214.9" r="1.7"/><circle cx="875.7" cy="218.8" r="1.7"/><circle cx="877" cy="214.6" r="1.7"/><circle cx="877.1" cy="218.5" r="1.7"/><circle cx="878.8" cy="214.7" r="1.7"/><circle cx="879.8" cy="219" r="1.7"/><circle cx="881.3" cy="215" r="1.7"/><circle cx="881.4" cy="218.3" r="1.7"/><circle cx="884.1" cy="215.5" r="1.7"/><circle cx="885" cy="217.9" r="1.7"/><circle cx="886.3" cy="215.4" r="1.7"/><circle cx="886.5" cy="217.6" r="1.7"/><circle cx="887.1" cy="215.3" r="1.7"/><circle cx="887.2" cy="218.3" r="1.7"/><circle cx="889.9" cy="214.6" r="1.7"/><circle cx="889" cy="218.8" r="1.7"/><circle cx="892.1" cy="215.3" r="1.7"/><circle cx="892.6" cy="217.4" r="1.7"/><circle cx="893.2" cy="214.8" r="1.7"/><circle cx="894.4" cy="218.7" r="1.7"/><circle cx="894.6" cy="215.3" r="1.7"/><circle cx="895.4" cy="218" r="1.7"/><circle cx="896.8" cy="215.3" r="1.7"/><circle cx="897.1" cy="218.8" r="1.7"/><circle cx="899" cy="214.5" r="1.7"/><circle cx="899.2" cy="218.8" r="1.7"/><circle cx="901.3" cy="214.2" r="1.7"/><circle cx="901.8" cy="218.1" r="1.7"/><circle cx="904.2" cy="214.5" r="1.7"/><circle cx="903.6" cy="218.2" r="1.7"/><circle cx="905.5" cy="214.5" r="1.7"/><circle cx="907.1" cy="217.3" r="1.7"/><circle cx="908.2" cy="214.2" r="1.7"/><circle cx="907.5" cy="217.9" r="1.7"/><circle cx="909.8" cy="214.5" r="1.7"/><circle cx="910.4" cy="218.6" r="1.7"/><circle cx="911.1" cy="214.8" r="1.7"/><circle cx="911.6" cy="218.2" r="1.7"/><circle cx="913.7" cy="214" r="1.7"/><circle cx="913.1" cy="218.1" r="1.7"/><circle cx="917" cy="214.4" r="1.7"/><circle cx="916" cy="217.9" r="1.7"/><circle cx="919" cy="214.3" r="1.7"/><circle cx="918.7" cy="217.5" r="1.7"/><circle cx="920.3" cy="213.8" r="1.7"/><circle cx="920.7" cy="218.2" r="1.7"/><circle cx="922.9" cy="213.7" r="1.7"/><circle cx="922.7" cy="217.2" r="1.7"/><circle cx="923.9" cy="214.7" r="1.7"/><circle cx="924.6" cy="217.4" r="1.7"/><circle cx="926.7" cy="213.6" r="1.7"/><circle cx="926.3" cy="217.2" r="1.7"/><circle cx="929.3" cy="214.2" r="1.7"/><circle cx="929.6" cy="217.2" r="1.7"/><circle cx="932" cy="213.4" r="1.7"/><circle cx="931.3" cy="217.6" r="1.7"/><circle cx="934.7" cy="214.6" r="1.7"/><circle cx="934.8" cy="218.1" r="1.7"/><circle cx="936.3" cy="214.8" r="1.7"/><circle cx="936" cy="217.1" r="1.7"/><circle cx="937.2" cy="213.8" r="1.7"/><circle cx="938" cy="217.1" r="1.7"/><circle cx="939.2" cy="214.3" r="1.7"/><circle cx="940.3" cy="217.8" r="1.7"/><circle cx="941.8" cy="214.9" r="1.7"/><circle cx="941.5" cy="216.9" r="1.7"/><circle cx="944.7" cy="213.9" r="1.7"/><circle cx="943.5" cy="217" r="1.7"/><circle cx="947" cy="214.3" r="1.7"/><circle cx="947.1" cy="217" r="1.7"/><circle cx="948.7" cy="214.3" r="1.7"/><circle cx="948.1" cy="217.7" r="1.7"/><circle cx="949.5" cy="213.9" r="1.7"/><circle cx="949.5" cy="217.6" r="1.7"/><circle cx="952.1" cy="214.1" r="1.7"/><circle cx="951.7" cy="217.3" r="1.7"/><circle cx="954.1" cy="214.1" r="1.7"/><circle cx="954.2" cy="216.6" r="1.7"/><circle cx="956.2" cy="213.7" r="1.7"/><circle cx="955.2" cy="216.8" r="1.7"/><circle cx="957.9" cy="213.3" r="1.7"/><circle cx="957.9" cy="217.2" r="1.7"/><circle cx="959.8" cy="214" r="1.7"/><circle cx="959.9" cy="217.5" r="1.7"/><circle cx="962" cy="213.5" r="1.7"/><circle cx="961.9" cy="217.7" r="1.7"/><circle cx="964" cy="214.3" r="1.7"/><circle cx="965" cy="217.2" r="1.7"/><circle cx="966.1" cy="214.6" r="1.7"/><circle cx="965.5" cy="216.5" r="1.7"/><circle cx="968.5" cy="214.3" r="1.7"/><circle cx="968" cy="218.1" r="1.7"/><circle cx="970.4" cy="213.2" r="1.7"/><circle cx="969.2" cy="216.7" r="1.7"/>
<polyline points="969,216 971,206 974,202 977.5,200 979,175 980,160 981,148 982.1,137 983,122 983.6,109.4 984.5,125 985.1,145 985.9,175 986.6,190 987.4,204 989.6,215 990.5,205 991.3,185 992.3,182 993.5,186 993.8,210 993,217 990,217" stroke="#0cff0c" stroke-width="3" fill="none" stroke-linejoin="round"/>
<circle cx="969" cy="216" r="2.4"/>
<circle cx="970" cy="211" r="2.4"/>
<circle cx="971" cy="206" r="2.4"/>
<circle cx="974" cy="202" r="2.4"/>
<circle cx="977.5" cy="200" r="2.4"/>
<circle cx="977.8" cy="195" r="2.4"/>
<circle cx="978.1" cy="190" r="2.4"/>
<circle cx="978.4" cy="185" r="2.4"/>
<circle cx="978.7" cy="180" r="2.4"/>
<circle cx="979" cy="175" r="2.4"/>
<circle cx="979.3" cy="170" r="2.4"/>
<circle cx="979.7" cy="165" r="2.4"/>
<circle cx="980" cy="160" r="2.4"/>
<circle cx="980.5" cy="154" r="2.4"/>
<circle cx="981" cy="148" r="2.4"/>
<circle cx="981.5" cy="142.5" r="2.4"/>
<circle cx="982.1" cy="137" r="2.4"/>
<circle cx="982.4" cy="132" r="2.4"/>
<circle cx="982.7" cy="127" r="2.4"/>
<circle cx="983" cy="122" r="2.4"/>
<circle cx="983.3" cy="115.7" r="2.4"/>
<circle cx="983.6" cy="109.4" r="2.4"/>
<circle cx="983.9" cy="114.6" r="2.4"/>
<circle cx="984.2" cy="119.8" r="2.4"/>
<circle cx="984.5" cy="125" r="2.4"/>
<circle cx="984.6" cy="130" r="2.4"/>
<circle cx="984.8" cy="135" r="2.4"/>
<circle cx="985" cy="140" r="2.4"/>
<circle cx="985.1" cy="145" r="2.4"/>
<circle cx="985.2" cy="150" r="2.4"/>
<circle cx="985.4" cy="155" r="2.4"/>
<circle cx="985.5" cy="160" r="2.4"/>
<circle cx="985.6" cy="165" r="2.4"/>
<circle cx="985.8" cy="170" r="2.4"/>
<circle cx="985.9" cy="175" r="2.4"/>
<circle cx="986.1" cy="180" r="2.4"/>
<circle cx="986.4" cy="185" r="2.4"/>
<circle cx="986.6" cy="190" r="2.4"/>
<circle cx="987" cy="197" r="2.4"/>
<circle cx="987.4" cy="204" r="2.4"/>
<circle cx="988.5" cy="209.5" r="2.4"/>
<circle cx="989.6" cy="215" r="2.4"/>
<circle cx="990" cy="210" r="2.4"/>
<circle cx="990.5" cy="205" r="2.4"/>
<circle cx="990.7" cy="200" r="2.4"/>
<circle cx="990.9" cy="195" r="2.4"/>
<circle cx="991.1" cy="190" r="2.4"/>
<circle cx="991.3" cy="185" r="2.4"/>
<circle cx="992.3" cy="182" r="2.4"/>
<circle cx="993.5" cy="186" r="2.4"/>
<circle cx="993.6" cy="192" r="2.4"/>
<circle cx="993.6" cy="198" r="2.4"/>
<circle cx="993.7" cy="204" r="2.4"/>
<circle cx="993.8" cy="210" r="2.4"/>
<circle cx="993" cy="217" r="2.4"/>
<polygon points="968,219 970,206 972,201 977,198 979,203 978,219"/>
<polygon points="986,219 986.5,205 990,205 994,208 994,219"/></g>
<line x1="983.5" y1="43" x2="983.5" y2="238" stroke="#c02030" stroke-opacity="0.75" stroke-dasharray="4 3" stroke-width="1"/>
<line x1="884" y1="103.2" x2="983.5" y2="109.4" stroke="#d8d8d8" stroke-width="1.3"/>
<circle cx="983.5" cy="109.4" r="3" fill="#ff2020"/>
<line x1="105" y1="507.5" x2="110" y2="507.5" stroke="#a0a0a0" stroke-width="1"/>
<text x="101" y="512.1" text-anchor="end" class="yl">0</text>
<line x1="110" y1="409.5" x2="1318.5" y2="409.5" stroke="#8c8c8c" stroke-dasharray="4 2" stroke-width="1"/>
<line x1="105" y1="409.5" x2="110" y2="409.5" stroke="#a0a0a0" stroke-width="1"/>
<text x="101" y="414.1" text-anchor="end" class="yl">5</text>
<line x1="110" y1="312.5" x2="1318.5" y2="312.5" stroke="#8c8c8c" stroke-dasharray="4 2" stroke-width="1"/>
<line x1="105" y1="312.5" x2="110" y2="312.5" stroke="#a0a0a0" stroke-width="1"/>
<text x="101" y="317.1" text-anchor="end" class="yl">10</text>
<line x1="239.5" y1="312" x2="239.5" y2="507" stroke="#8c8c8c" stroke-dasharray="4 2" stroke-width="1"/>
<line x1="239.5" y1="507" x2="239.5" y2="512" stroke="#a0a0a0" stroke-width="1"/>
<text x="239.5" y="528" text-anchor="middle" class="xl" textLength="75" lengthAdjust="spacingAndGlyphs">05-31 00:00</text>
<line x1="458.5" y1="312" x2="458.5" y2="507" stroke="#8c8c8c" stroke-dasharray="4 2" stroke-width="1"/>
<line x1="458.5" y1="507" x2="458.5" y2="512" stroke="#a0a0a0" stroke-width="1"/>
<text x="458.5" y="528" text-anchor="middle" class="xl" textLength="75" lengthAdjust="spacingAndGlyphs">05-31 08:00</text>
<line x1="678.5" y1="312" x2="678.5" y2="507" stroke="#8c8c8c" stroke-dasharray="4 2" stroke-width="1"/>
<line x1="678.5" y1="507" x2="678.5" y2="512" stroke="#a0a0a0" stroke-width="1"/>
<text x="678.5" y="528" text-anchor="middle" class="xl" textLength="75" lengthAdjust="spacingAndGlyphs">05-31 16:00</text>
<line x1="898.5" y1="312" x2="898.5" y2="507" stroke="#8c8c8c" stroke-dasharray="4 2" stroke-width="1"/>
<line x1="898.5" y1="507" x2="898.5" y2="512" stroke="#a0a0a0" stroke-width="1"/>
<text x="898.5" y="528" text-anchor="middle" class="xl" textLength="75" lengthAdjust="spacingAndGlyphs">06-01 00:00</text>
<line x1="1118.5" y1="312" x2="1118.5" y2="507" stroke="#8c8c8c" stroke-dasharray="4 2" stroke-width="1"/>
<line x1="1118.5" y1="507" x2="1118.5" y2="512" stroke="#a0a0a0" stroke-width="1"/>
<text x="1118.5" y="528" text-anchor="middle" class="xl" textLength="75" lengthAdjust="spacingAndGlyphs">06-01 08:00</text>
<line x1="110.5" y1="312" x2="110.5" y2="507.5" stroke="#909090" stroke-width="1"/>
<line x1="110" y1="507.5" x2="1318.5" y2="507.5" stroke="#c8c8c8" stroke-width="1"/>
<text x="0" y="0" transform="translate(81.5 409.5) rotate(-90)" text-anchor="middle" class="yn" textLength="46" lengthAdjust="spacingAndGlyphs">[mm/s]</text>
<g fill="#0cff0c"><polygon points="110,473.4 112,473.5 114,472.9 116,474 116,469.5 118,468.4 120,468.2 122,469.3 124,468.5 126,469.5 128,468.7 130,468.9 132,468.4 132,473.9 134,472.8 136,473.4 138,473.2 140,473.9 142,473.9 144,473.4 146,472.8 148,472.8 150,472.8 152,473 154,472.7 156,472.6 158,473.4 160,473.2 162,472.7 164,473.7 166,472.5 168,473 170,472.4 172,473.3 174,473.3 176,472.4 178,473.1 180,473.2 182,472.4 184,472.5 186,472.9 188,473.5 190,472.6 192,473.5 194,473.5 196,473.3 198,473.6 200,474 202,473.1 204,474 206,473.2 208,473.8 210,473.9 212,472.9 214,473.8 216,474 218,473 220,472.6 222,472.7 224,474 226,472.7 228,474 230,472.9 232,473.8 234,473 236,473.1 238,473.9 240,473 242,473.4 244,474.1 246,473.8 248,474 250,474.1 252,472.7 254,472.9 256,473.6 258,473.4 260,472.5 262,473.2 264,472.8 266,473.2 268,472.8 270,472.7 272,474.1 274,473.3 276,474.1 278,473.1 280,473.6 282,473.1 284,473.5 286,473 288,473.7 290,472.8 292,473.6 294,473.2 296,472.5 298,472.8 300,473 302,473.6 304,472.9 306,472.8 308,473.9 310,473.9 312,473.8 314,473.2 316,473.1 318,473.3 320,473.1 322,473 324,473.7 326,473.5 328,473.7 330,473.4 332,472.9 334,473.9 336,473.8 338,473.6 340,473.6 342,473.8 344,474.2 346,474 348,473.7 350,473.2 352,473.1 354,473.2 356,473.9 358,473 360,473 362,473.1 364,472.7 366,473.9 368,472.6 370,473.4 372,473.9 374,473 376,473.5 378,473.2 380,473 382,472.9 384,472.8 386,473.9 388,473.8 390,474 392,472.8 394,473.8 396,473.3 398,473.7 400,473.6 402,473.2 404,474.1 406,472.7 408,473.7 410,473.7 412,473.2 414,473.2 416,473.7 418,472.6 420,473.1 422,473.3 424,472.8 426,473.3 428,472.9 430,473.2 432,473.4 434,473.5 436,473.1 438,473.5 440,473.4 442,473 444,473.6 446,473.1 448,474 450,473.5 452,473.9 454,473.6 456,473.6 458,473.3 460,473.2 462,474.2 464,473.6 466,473.6 468,473.5 470,473.8 472,472.9 474,472.7 476,473.5 478,473 480,473.2 482,473.5 484,473.6 486,473.7 488,472.6 490,473.2 491,473.9 491,469.7 493,469.4 495,468.8 497,468.7 499,469.6 501,468.7 503,469.8 505,469.1 507,468.9 509,469.4 509,473 511,473.4 513,473.8 515,473.2 517,473.6 519,473 521,473.5 523,473.9 524,473.4 524,470 526,470.6 528,470.3 530,470.9 532,469.8 534,470.4 536,470.9 538,470.5 540,470.5 542,469.8 544,469.8 546,470 548,470.7 549,470.6 549,473.9 551,473.1 553,472.7 555,473.3 557,472.6 559,473.2 561,473.5 563,473.2 565,473 567,472.4 569,473 571,472.4 573,473.1 575,472.3 577,472.9 579,472.6 581,472.6 583,473.1 585,472.5 587,472.6 589,473.8 591,473.1 593,473.9 593,470.2 595,469.7 597,470.2 599,470 601,470.1 603,469.5 604,470.2 604,473.1 606,473.8 608,473.3 610,473.8 612,474.1 614,474 616,473.1 618,473.3 620,473.8 622,474.3 624,473 626,473.7 628,473.8 630,473.9 632,473.2 634,473.8 636,473.2 638,473.8 640,472.5 642,473.8 644,473.1 646,473 648,472.5 650,472.7 651,473.3 651,470.9 653,471 655,470.1 657,471 659,471.1 659,472.7 661,473.3 663,473.2 665,473.4 667,472.6 669,473.5 671,472.9 673,473.5 675,472.4 677,473.6 679,473.3 681,472.6 683,473.4 683,468.1 685,467.6 687,467.2 689,468.1 691,468.4 693,467.8 694,468.2 694,473.2 696,473.6 698,473.4 700,473.2 702,473 704,473.2 706,473.9 708,473.5 710,473 712,472.6 714,472.8 716,473.4 718,473 720,473.3 722,473.5 724,472.6 726,473.5 728,472.7 730,473.9 732,473.1 734,473.4 736,474.4 738,473.6 740,473.5 742,474.4 744,474 746,474.3 748,473.5 749,473.7 749,468.7 751,468.8 753,469 755,469.2 757,468.6 759,468.4 761,469.3 763,468 765,469 765,472.8 767,473.9 769,473.8 771,472.6 773,473.2 775,473.1 777,472.3 779,472.8 781,473.3 783,473.2 785,472.7 787,473.5 789,472.9 791,473.3 793,473.2 795,474.1 797,473.7 799,473.9 801,473.7 803,473.3 805,474.1 807,473.7 809,473.6 811,473 813,472.8 815,473.3 817,473.6 819,473.5 821,472.9 823,472.7 825,473.3 827,473.9 829,473 831,473.9 833,473.2 835,473.4 837,473.2 839,473.5 841,473.7 843,474.5 845,474.5 847,473.4 849,473.5 851,474.4 853,473.4 855,473.5 857,473.7 859,473.2 861,473.5 863,473.6 865,473.6 867,474.3 869,473.3 871,473.1 873,474 875,473.3 877,473.8 879,473.5 881,473.7 883,473.1 885,472.9 887,473.7 889,473.3 891,473.5 893,473.7 895,473.8 897,473.1 899,473.3 901,474.1 903,473.5 905,473.2 907,473.7 909,473.2 911,473.9 913,472.9 915,474 917,473.6 919,473.3 921,474.2 923,473.2 925,473.2 927,473 929,473.7 931,474 933,473.9 935,473.5 937,474.1 939,473.1 941,473.4 943,473.9 945,474.4 947,473.9 949,474 951,474.2 953,473.7 955,474.5 957,474.2 959,473.6 961,473.7 963,474.2 965,473.5 967,473.1 969,473.9 971,473.3 971,478.3 969,478.8 967,479.1 965,479.5 963,478.9 961,479.1 959,479.2 957,478.9 955,479.1 953,479.3 951,479.6 949,479.5 947,479.2 945,478.7 943,479.1 941,478.6 939,479.8 937,478.9 935,479.8 933,479.6 931,479.8 929,479.6 927,478.7 925,479.2 923,479.1 921,478.9 919,479.2 917,479.3 915,479.2 913,478.4 911,478.9 909,479 907,478.3 905,479.4 903,478.3 901,479 899,479.4 897,479.4 895,478.5 893,479.3 891,478.5 889,479 887,478.6 885,478.6 883,479 881,478.4 879,478.3 877,479.3 875,478.2 873,479.4 871,479.1 869,479 867,478.5 865,478.9 863,478.8 861,479.5 859,478.6 857,479 855,479.8 853,478.7 851,479.6 849,479.1 847,479.7 845,480 843,479.6 841,478.8 839,478.9 837,478.9 835,478.9 833,479.6 831,479.2 829,478.3 827,478.5 825,478.9 823,479 821,478.9 819,478.1 817,479.2 815,478.9 813,479.2 811,479.1 809,479.4 807,479.4 805,478.9 803,479.3 801,479.2 799,478.5 797,479.4 795,479.3 793,479.3 791,478.4 789,478.8 787,478.5 785,478.6 783,478.7 781,478.9 779,478.4 777,478.3 775,477.9 773,478.3 771,478.1 769,479.3 767,479 765,478.9 765,476.3 763,475.9 761,477 759,476.9 757,477.2 755,477 753,476.7 751,476.9 749,477.1 749,479.3 748,479.4 746,479.1 744,479.9 742,479.3 740,479.5 738,478.7 736,479.5 734,479.7 732,479.7 730,478.8 728,478.8 726,479.2 724,478.7 722,478 720,478.3 718,478.2 716,479 714,478.6 712,479.3 710,478.3 708,478.1 706,478.9 704,478.4 702,479.4 700,478.5 698,479.6 696,478.9 694,479.5 694,476.5 693,475.5 691,475.3 689,475.8 687,475.1 685,476.1 683,476.1 683,479.1 681,478.7 679,478.8 677,478.8 675,478.3 673,478.7 671,478.6 669,478.9 667,478.3 665,478 663,478.3 661,477.9 659,477.9 659,477.6 657,478 655,478 653,478 651,478.3 651,479.1 650,478.1 648,478.4 646,478.9 644,478.1 642,479.1 640,479.2 638,478.9 636,478.4 634,479 632,479.2 630,479.5 628,479.4 626,479.1 624,479.1 622,479.6 620,479.9 618,479.8 616,478.9 614,478.8 612,478.7 610,478.7 608,478.9 606,478.7 604,479.4 604,477.9 603,477.1 601,477.4 599,477.2 597,476.7 595,476.9 593,476.6 593,478.2 591,479.3 589,478.7 587,479.1 585,478.1 583,477.8 581,477.9 579,478.2 577,477.9 575,478.2 573,478.4 571,478.5 569,478 567,478.5 565,478 563,478.6 561,478.6 559,478.1 557,479.2 555,478.1 553,478.3 551,478.8 549,479.5 549,476.7 548,477.5 546,476.9 544,477.3 542,477.2 540,476.8 538,477.6 536,478 534,477.2 532,478 530,477.5 528,476.6 526,477.9 524,476.9 524,478.7 523,479.1 521,479.6 519,479.7 517,479.6 515,478.5 513,479.5 511,478.5 509,479.4 509,476.7 507,477.5 505,477.3 503,476.4 501,477.3 499,476.6 497,477.4 495,476.3 493,476.8 491,476.3 491,478.6 490,479.1 488,478.6 486,479.3 484,479 482,478 480,478 478,478.1 476,479.2 474,478.2 472,479.2 470,478.4 468,478.7 466,479.3 464,479.3 462,479.1 460,479.6 458,479.2 456,479.7 454,478.7 452,479.2 450,478.4 448,479.5 446,478.3 444,479.1 442,478.8 440,478.2 438,479.4 436,478.7 434,479.4 432,478.6 430,478.8 428,479 426,478.8 424,478.2 422,478.9 420,478.1 418,478.2 416,478.6 414,478.4 412,478.7 410,478.5 408,478.2 406,479 404,479.5 402,478.6 400,479.4 398,478.8 396,479.1 394,479 392,478.9 390,478.8 388,479 386,478.3 384,478.4 382,478.5 380,479.3 378,479.3 376,479.3 374,478.5 372,478.2 370,478.7 368,478.8 366,478.8 364,479.2 362,478.4 360,478.4 358,478.4 356,478.4 354,479.5 352,478.1 350,478.9 348,478.7 346,478.5 344,479.6 342,479.5 340,479.8 338,479.2 336,479 334,479.4 332,478.5 330,479.1 328,479.4 326,479.4 324,478.5 322,479.3 320,479.5 318,478.6 316,478.5 314,479.5 312,478.3 310,478.5 308,478.2 306,479 304,479 302,478.6 300,478.8 298,477.9 296,478.5 294,479 292,479 290,479.3 288,478.9 286,479 284,479 282,479.7 280,479.1 278,479 276,479.6 274,479 272,478.9 270,479 268,478.2 266,479.1 264,479.3 262,478.7 260,478.7 258,478.5 256,479.1 254,478.1 252,478.6 250,479.1 248,478.8 246,479.3 244,479.7 242,478.7 240,479.7 238,479.2 236,478.9 234,478.8 232,479.4 230,479.1 228,478.8 226,478.6 224,479.1 222,478.6 220,478.7 218,478.1 216,478.6 214,479 212,479.3 210,478.8 208,478.5 206,479.4 204,479.2 202,478.4 200,479.5 198,478.6 196,478.7 194,478.5 192,479 190,478.1 188,477.9 186,478.5 184,477.9 182,477.5 180,478 178,478 176,478.1 174,477.9 172,478.3 170,478.2 168,478.7 166,478 164,478.8 162,478.9 160,478.5 158,478.5 156,478.8 154,479.3 152,478.5 150,478.1 148,478.6 146,478.8 144,479.2 142,478.6 140,478.2 138,478.4 136,478.3 134,478.3 132,479.4 132,476 130,476.4 128,475.6 126,476.6 124,475.8 122,476.9 120,476.1 118,476.3 116,476.8 116,479.2 114,478.4 112,478.4 110,478.7"/><circle cx="110.3" cy="472.9" r="1.7"/><circle cx="109.6" cy="479" r="1.7"/><circle cx="113.3" cy="473.8" r="1.7"/><circle cx="113.3" cy="479.5" r="1.7"/><circle cx="115.5" cy="472.7" r="1.7"/><circle cx="114.7" cy="478.1" r="1.7"/><circle cx="116.4" cy="469.1" r="1.7"/><circle cx="115.6" cy="476.2" r="1.7"/><circle cx="117.8" cy="469.7" r="1.7"/><circle cx="117.3" cy="475.7" r="1.7"/><circle cx="119" cy="469.5" r="1.7"/><circle cx="119.7" cy="476.3" r="1.7"/><circle cx="120.1" cy="468.3" r="1.7"/><circle cx="121.2" cy="476.3" r="1.7"/><circle cx="124.5" cy="469.3" r="1.7"/><circle cx="123.8" cy="476.9" r="1.7"/><circle cx="124.7" cy="468.9" r="1.7"/><circle cx="125.4" cy="475.9" r="1.7"/><circle cx="126.3" cy="469.4" r="1.7"/><circle cx="127.4" cy="477" r="1.7"/><circle cx="130.1" cy="469.1" r="1.7"/><circle cx="130" cy="476.7" r="1.7"/><circle cx="131.4" cy="472.6" r="1.7"/><circle cx="131.5" cy="479.1" r="1.7"/><circle cx="133.2" cy="473.9" r="1.7"/><circle cx="134.4" cy="478.8" r="1.7"/><circle cx="136" cy="473.4" r="1.7"/><circle cx="134.7" cy="478.6" r="1.7"/><circle cx="138.4" cy="473.3" r="1.7"/><circle cx="138" cy="478.3" r="1.7"/><circle cx="140.2" cy="473.1" r="1.7"/><circle cx="138.9" cy="478.9" r="1.7"/><circle cx="140.6" cy="473.2" r="1.7"/><circle cx="141.2" cy="479" r="1.7"/><circle cx="143.6" cy="472.6" r="1.7"/><circle cx="144" cy="478" r="1.7"/><circle cx="145.6" cy="473.5" r="1.7"/><circle cx="146.1" cy="478.3" r="1.7"/><circle cx="148.6" cy="473.1" r="1.7"/><circle cx="147.7" cy="479.3" r="1.7"/><circle cx="149.9" cy="472.7" r="1.7"/><circle cx="151.4" cy="478.2" r="1.7"/><circle cx="153.1" cy="473.6" r="1.7"/><circle cx="152.9" cy="479" r="1.7"/><circle cx="153.4" cy="473.8" r="1.7"/><circle cx="154.5" cy="477.8" r="1.7"/><circle cx="155" cy="473.7" r="1.7"/><circle cx="155" cy="478.8" r="1.7"/><circle cx="158.6" cy="473.7" r="1.7"/><circle cx="158" cy="478" r="1.7"/><circle cx="160.2" cy="472.4" r="1.7"/><circle cx="160.5" cy="478.9" r="1.7"/><circle cx="161.9" cy="472.5" r="1.7"/><circle cx="161.4" cy="477.9" r="1.7"/><circle cx="164.7" cy="473.6" r="1.7"/><circle cx="163.3" cy="479" r="1.7"/><circle cx="166.9" cy="472.9" r="1.7"/><circle cx="166.6" cy="478.6" r="1.7"/><circle cx="168.5" cy="472.2" r="1.7"/><circle cx="169.2" cy="478" r="1.7"/><circle cx="170.4" cy="473.2" r="1.7"/><circle cx="170.4" cy="478.9" r="1.7"/><circle cx="173.8" cy="472.2" r="1.7"/><circle cx="174.1" cy="477.8" r="1.7"/><circle cx="175.4" cy="473.5" r="1.7"/><circle cx="176.1" cy="478" r="1.7"/><circle cx="177.8" cy="473.3" r="1.7"/><circle cx="178" cy="477.6" r="1.7"/><circle cx="179.1" cy="473.1" r="1.7"/><circle cx="178.9" cy="478.4" r="1.7"/><circle cx="182.9" cy="471.9" r="1.7"/><circle cx="181.8" cy="477.6" r="1.7"/><circle cx="185.2" cy="472.9" r="1.7"/><circle cx="184.9" cy="478.2" r="1.7"/><circle cx="187.6" cy="473.6" r="1.7"/><circle cx="187.8" cy="478.9" r="1.7"/><circle cx="190.9" cy="473.5" r="1.7"/><circle cx="189.6" cy="478.9" r="1.7"/><circle cx="193" cy="473.9" r="1.7"/><circle cx="192.6" cy="479.5" r="1.7"/><circle cx="195.6" cy="473" r="1.7"/><circle cx="194.9" cy="478.6" r="1.7"/><circle cx="196.5" cy="473.4" r="1.7"/><circle cx="197.9" cy="479.2" r="1.7"/><circle cx="200.5" cy="474" r="1.7"/><circle cx="200.9" cy="479.4" r="1.7"/><circle cx="201.5" cy="473.3" r="1.7"/><circle cx="201.1" cy="478.6" r="1.7"/><circle cx="205.5" cy="473.2" r="1.7"/><circle cx="205.2" cy="479.4" r="1.7"/><circle cx="208.1" cy="473.5" r="1.7"/><circle cx="207" cy="479.4" r="1.7"/><circle cx="209.7" cy="473.2" r="1.7"/><circle cx="209.6" cy="479.6" r="1.7"/><circle cx="211.2" cy="473.6" r="1.7"/><circle cx="211.2" cy="479.6" r="1.7"/><circle cx="213.8" cy="473.6" r="1.7"/><circle cx="213.9" cy="478.2" r="1.7"/><circle cx="214.5" cy="474" r="1.7"/><circle cx="214.1" cy="478.4" r="1.7"/><circle cx="218.2" cy="472.8" r="1.7"/><circle cx="217.4" cy="479.1" r="1.7"/><circle cx="220.4" cy="473.7" r="1.7"/><circle cx="219.6" cy="478.4" r="1.7"/><circle cx="221.7" cy="472.8" r="1.7"/><circle cx="221" cy="479.5" r="1.7"/><circle cx="224" cy="473.5" r="1.7"/><circle cx="224" cy="479.1" r="1.7"/><circle cx="225" cy="472.6" r="1.7"/><circle cx="224.9" cy="478.6" r="1.7"/><circle cx="226.6" cy="473.4" r="1.7"/><circle cx="228" cy="479.2" r="1.7"/><circle cx="229.5" cy="472.9" r="1.7"/><circle cx="228.4" cy="478.6" r="1.7"/><circle cx="231.4" cy="473.4" r="1.7"/><circle cx="231.4" cy="478.3" r="1.7"/><circle cx="233.8" cy="474.1" r="1.7"/><circle cx="233.3" cy="479.6" r="1.7"/><circle cx="236.3" cy="474.1" r="1.7"/><circle cx="236" cy="478.7" r="1.7"/><circle cx="236.6" cy="474.2" r="1.7"/><circle cx="236.5" cy="479.3" r="1.7"/><circle cx="239.7" cy="473.1" r="1.7"/><circle cx="238.9" cy="478.5" r="1.7"/><circle cx="242.3" cy="473.8" r="1.7"/><circle cx="242.6" cy="478.6" r="1.7"/><circle cx="243.2" cy="474.1" r="1.7"/><circle cx="243.3" cy="479.8" r="1.7"/><circle cx="246.2" cy="472.9" r="1.7"/><circle cx="246.3" cy="478.6" r="1.7"/><circle cx="247.9" cy="472.8" r="1.7"/><circle cx="247.5" cy="479.4" r="1.7"/><circle cx="249.5" cy="473.8" r="1.7"/><circle cx="249.2" cy="478.4" r="1.7"/><circle cx="251.2" cy="473.1" r="1.7"/><circle cx="251.6" cy="478.8" r="1.7"/><circle cx="253.5" cy="473.5" r="1.7"/><circle cx="254.8" cy="478.3" r="1.7"/><circle cx="255.5" cy="472.6" r="1.7"/><circle cx="255.5" cy="479" r="1.7"/><circle cx="256.5" cy="473.1" r="1.7"/><circle cx="256.6" cy="478.2" r="1.7"/><circle cx="258.6" cy="472.5" r="1.7"/><circle cx="259" cy="478.6" r="1.7"/><circle cx="262.2" cy="472.5" r="1.7"/><circle cx="261.7" cy="479.1" r="1.7"/><circle cx="265.1" cy="473.9" r="1.7"/><circle cx="265" cy="478.1" r="1.7"/><circle cx="267.5" cy="472.9" r="1.7"/><circle cx="266.9" cy="479.4" r="1.7"/><circle cx="268.5" cy="473" r="1.7"/><circle cx="269.8" cy="478.8" r="1.7"/><circle cx="271.1" cy="473.4" r="1.7"/><circle cx="271.5" cy="478.5" r="1.7"/><circle cx="274" cy="472.9" r="1.7"/><circle cx="275" cy="479" r="1.7"/><circle cx="275.1" cy="473.8" r="1.7"/><circle cx="275.9" cy="478.3" r="1.7"/><circle cx="278.4" cy="473.7" r="1.7"/><circle cx="277.6" cy="479.1" r="1.7"/><circle cx="280.6" cy="473.1" r="1.7"/><circle cx="280.9" cy="479.8" r="1.7"/><circle cx="283.6" cy="473.4" r="1.7"/><circle cx="283.7" cy="478.6" r="1.7"/><circle cx="284.9" cy="474.2" r="1.7"/><circle cx="284.1" cy="478.6" r="1.7"/><circle cx="286" cy="472.9" r="1.7"/><circle cx="285.6" cy="479.4" r="1.7"/><circle cx="289.2" cy="473.2" r="1.7"/><circle cx="288.8" cy="478.1" r="1.7"/><circle cx="291" cy="473.2" r="1.7"/><circle cx="291.5" cy="479.5" r="1.7"/><circle cx="294.4" cy="473.4" r="1.7"/><circle cx="293.2" cy="479.2" r="1.7"/><circle cx="296.1" cy="473" r="1.7"/><circle cx="294.9" cy="479.3" r="1.7"/><circle cx="297.1" cy="472.8" r="1.7"/><circle cx="297.5" cy="477.8" r="1.7"/><circle cx="298.6" cy="473.6" r="1.7"/><circle cx="298.4" cy="478.7" r="1.7"/><circle cx="300.9" cy="473.1" r="1.7"/><circle cx="301.3" cy="478" r="1.7"/><circle cx="302.1" cy="473.8" r="1.7"/><circle cx="302.1" cy="478" r="1.7"/><circle cx="305.1" cy="473.7" r="1.7"/><circle cx="304.2" cy="478.2" r="1.7"/><circle cx="306.7" cy="473.1" r="1.7"/><circle cx="306.4" cy="479.3" r="1.7"/><circle cx="309.6" cy="474" r="1.7"/><circle cx="308.7" cy="479.5" r="1.7"/><circle cx="310.4" cy="474.1" r="1.7"/><circle cx="310.4" cy="478.1" r="1.7"/><circle cx="312.6" cy="474.2" r="1.7"/><circle cx="313.5" cy="478.9" r="1.7"/><circle cx="315.7" cy="474.1" r="1.7"/><circle cx="315.4" cy="479.1" r="1.7"/><circle cx="316.3" cy="473.9" r="1.7"/><circle cx="316.8" cy="479.6" r="1.7"/><circle cx="320.3" cy="473.2" r="1.7"/><circle cx="318.9" cy="479.8" r="1.7"/><circle cx="321.4" cy="474" r="1.7"/><circle cx="321.5" cy="478.7" r="1.7"/><circle cx="323.9" cy="473.9" r="1.7"/><circle cx="323.2" cy="479.5" r="1.7"/><circle cx="326.3" cy="473.9" r="1.7"/><circle cx="326.8" cy="478.4" r="1.7"/><circle cx="328.7" cy="474" r="1.7"/><circle cx="328.7" cy="478.6" r="1.7"/><circle cx="331.9" cy="473.2" r="1.7"/><circle cx="331.3" cy="479.8" r="1.7"/><circle cx="333" cy="474.3" r="1.7"/><circle cx="333.8" cy="478.7" r="1.7"/><circle cx="335.5" cy="473.8" r="1.7"/><circle cx="336.2" cy="478.5" r="1.7"/><circle cx="337" cy="473.2" r="1.7"/><circle cx="336.7" cy="478.5" r="1.7"/><circle cx="339.4" cy="472.9" r="1.7"/><circle cx="339.6" cy="479.8" r="1.7"/><circle cx="341.6" cy="473.9" r="1.7"/><circle cx="341.7" cy="478.5" r="1.7"/><circle cx="343.2" cy="473.8" r="1.7"/><circle cx="343.5" cy="478.8" r="1.7"/><circle cx="347.4" cy="474" r="1.7"/><circle cx="347.2" cy="479.2" r="1.7"/><circle cx="350.3" cy="472.9" r="1.7"/><circle cx="350" cy="478.6" r="1.7"/><circle cx="351.9" cy="473.5" r="1.7"/><circle cx="351.9" cy="479.4" r="1.7"/><circle cx="353.2" cy="472.5" r="1.7"/><circle cx="353.8" cy="479.1" r="1.7"/><circle cx="354.8" cy="472.5" r="1.7"/><circle cx="355" cy="479.1" r="1.7"/><circle cx="356.4" cy="472.8" r="1.7"/><circle cx="357.2" cy="479.5" r="1.7"/><circle cx="357.6" cy="473.9" r="1.7"/><circle cx="358.9" cy="478.1" r="1.7"/><circle cx="360.1" cy="472.9" r="1.7"/><circle cx="360" cy="478.7" r="1.7"/><circle cx="361.2" cy="472.5" r="1.7"/><circle cx="361.3" cy="478" r="1.7"/><circle cx="364.6" cy="472.8" r="1.7"/><circle cx="364.8" cy="479.1" r="1.7"/><circle cx="366.2" cy="472.7" r="1.7"/><circle cx="366.9" cy="478.8" r="1.7"/><circle cx="367.1" cy="473.6" r="1.7"/><circle cx="367.4" cy="479.1" r="1.7"/><circle cx="369.8" cy="473.7" r="1.7"/><circle cx="368.7" cy="478.9" r="1.7"/><circle cx="371.3" cy="473.8" r="1.7"/><circle cx="371.5" cy="478.4" r="1.7"/><circle cx="372.8" cy="473.4" r="1.7"/><circle cx="371.9" cy="478.3" r="1.7"/><circle cx="374.2" cy="473.5" r="1.7"/><circle cx="374.4" cy="478.4" r="1.7"/><circle cx="377" cy="473.7" r="1.7"/><circle cx="376.1" cy="479.2" r="1.7"/><circle cx="378.3" cy="473.6" r="1.7"/><circle cx="378.9" cy="479" r="1.7"/><circle cx="381" cy="473" r="1.7"/><circle cx="381.8" cy="478.5" r="1.7"/><circle cx="382.7" cy="473.8" r="1.7"/><circle cx="383.6" cy="479.2" r="1.7"/><circle cx="386.6" cy="473.1" r="1.7"/><circle cx="385.8" cy="479.2" r="1.7"/><circle cx="387.7" cy="472.7" r="1.7"/><circle cx="386.8" cy="478.9" r="1.7"/><circle cx="389.8" cy="474" r="1.7"/><circle cx="389.1" cy="478.4" r="1.7"/><circle cx="390.7" cy="473.5" r="1.7"/><circle cx="390.4" cy="479.3" r="1.7"/><circle cx="393.3" cy="472.8" r="1.7"/><circle cx="392.2" cy="478.8" r="1.7"/><circle cx="394.7" cy="473.8" r="1.7"/><circle cx="394.6" cy="478.7" r="1.7"/><circle cx="397.6" cy="473.9" r="1.7"/><circle cx="397" cy="478.9" r="1.7"/><circle cx="400.9" cy="473.7" r="1.7"/><circle cx="399.6" cy="478.9" r="1.7"/><circle cx="402.3" cy="472.8" r="1.7"/><circle cx="403.4" cy="479.6" r="1.7"/><circle cx="404.1" cy="473.6" r="1.7"/><circle cx="403.9" cy="478.3" r="1.7"/><circle cx="407.3" cy="473.3" r="1.7"/><circle cx="406.2" cy="478.7" r="1.7"/><circle cx="409" cy="472.6" r="1.7"/><circle cx="408" cy="479.2" r="1.7"/><circle cx="409.2" cy="472.5" r="1.7"/><circle cx="409.3" cy="478.8" r="1.7"/><circle cx="412.1" cy="472.6" r="1.7"/><circle cx="413.1" cy="478.5" r="1.7"/><circle cx="414" cy="472.6" r="1.7"/><circle cx="415.3" cy="477.9" r="1.7"/><circle cx="416.7" cy="473.6" r="1.7"/><circle cx="417" cy="478.4" r="1.7"/><circle cx="419.5" cy="472.6" r="1.7"/><circle cx="419.3" cy="478.8" r="1.7"/><circle cx="421.4" cy="472.5" r="1.7"/><circle cx="422.7" cy="477.8" r="1.7"/><circle cx="424.4" cy="472.6" r="1.7"/><circle cx="424.3" cy="478.4" r="1.7"/><circle cx="427.2" cy="473.6" r="1.7"/><circle cx="427.5" cy="478.1" r="1.7"/><circle cx="430.1" cy="472.7" r="1.7"/><circle cx="430.3" cy="479.2" r="1.7"/><circle cx="433.4" cy="472.5" r="1.7"/><circle cx="433.7" cy="478.9" r="1.7"/><circle cx="436.9" cy="473" r="1.7"/><circle cx="436.7" cy="479.3" r="1.7"/><circle cx="437.7" cy="473.2" r="1.7"/><circle cx="437.7" cy="478.7" r="1.7"/><circle cx="439" cy="474" r="1.7"/><circle cx="439.3" cy="479.1" r="1.7"/><circle cx="442.7" cy="473" r="1.7"/><circle cx="443" cy="479.4" r="1.7"/><circle cx="445.8" cy="473.8" r="1.7"/><circle cx="445.9" cy="478.5" r="1.7"/><circle cx="447.7" cy="474" r="1.7"/><circle cx="447.3" cy="479" r="1.7"/><circle cx="450.3" cy="473.3" r="1.7"/><circle cx="450.3" cy="479.6" r="1.7"/><circle cx="452.1" cy="474.3" r="1.7"/><circle cx="453" cy="479.4" r="1.7"/><circle cx="454.4" cy="474.2" r="1.7"/><circle cx="455.2" cy="479" r="1.7"/><circle cx="457.5" cy="474.1" r="1.7"/><circle cx="457.6" cy="478.7" r="1.7"/><circle cx="458.5" cy="473" r="1.7"/><circle cx="458.7" cy="478.4" r="1.7"/><circle cx="461.2" cy="473" r="1.7"/><circle cx="461" cy="479.5" r="1.7"/><circle cx="463.3" cy="473.5" r="1.7"/><circle cx="463.8" cy="479.8" r="1.7"/><circle cx="465.4" cy="474.2" r="1.7"/><circle cx="465.2" cy="479.7" r="1.7"/><circle cx="467.5" cy="474" r="1.7"/><circle cx="467.9" cy="478.3" r="1.7"/><circle cx="470.7" cy="473.4" r="1.7"/><circle cx="470.1" cy="478.7" r="1.7"/><circle cx="473.3" cy="472.7" r="1.7"/><circle cx="472.8" cy="478.5" r="1.7"/><circle cx="476.4" cy="472.5" r="1.7"/><circle cx="476.7" cy="477.8" r="1.7"/><circle cx="478.3" cy="473.4" r="1.7"/><circle cx="478.3" cy="477.9" r="1.7"/><circle cx="481.2" cy="473.5" r="1.7"/><circle cx="480.4" cy="478.1" r="1.7"/><circle cx="483.8" cy="472.6" r="1.7"/><circle cx="483.9" cy="479.4" r="1.7"/><circle cx="485.2" cy="473.5" r="1.7"/><circle cx="486" cy="478.2" r="1.7"/><circle cx="486.9" cy="473.6" r="1.7"/><circle cx="486.7" cy="478.8" r="1.7"/><circle cx="489.7" cy="472.7" r="1.7"/><circle cx="490.1" cy="479.6" r="1.7"/><circle cx="491.5" cy="468.6" r="1.7"/><circle cx="491.7" cy="476.7" r="1.7"/><circle cx="494.2" cy="469" r="1.7"/><circle cx="494.3" cy="476.2" r="1.7"/><circle cx="495" cy="469.9" r="1.7"/><circle cx="495.7" cy="477.5" r="1.7"/><circle cx="497.9" cy="469.4" r="1.7"/><circle cx="496.7" cy="477" r="1.7"/><circle cx="499.8" cy="469.5" r="1.7"/><circle cx="499.6" cy="476.5" r="1.7"/><circle cx="502.1" cy="469.3" r="1.7"/><circle cx="501.4" cy="476.1" r="1.7"/><circle cx="504.3" cy="469.7" r="1.7"/><circle cx="503.5" cy="476.5" r="1.7"/><circle cx="505.7" cy="469.5" r="1.7"/><circle cx="506.8" cy="476.4" r="1.7"/><circle cx="508.9" cy="469.7" r="1.7"/><circle cx="508.9" cy="477.1" r="1.7"/><circle cx="509.5" cy="474.3" r="1.7"/><circle cx="508.3" cy="479.8" r="1.7"/><circle cx="510.4" cy="472.9" r="1.7"/><circle cx="511.6" cy="479.4" r="1.7"/><circle cx="512.6" cy="473.8" r="1.7"/><circle cx="513.5" cy="478.8" r="1.7"/><circle cx="514.9" cy="473.1" r="1.7"/><circle cx="514.8" cy="478.9" r="1.7"/><circle cx="517.4" cy="473" r="1.7"/><circle cx="517.3" cy="478.4" r="1.7"/><circle cx="519.1" cy="473.5" r="1.7"/><circle cx="518.9" cy="479" r="1.7"/><circle cx="522.3" cy="473.5" r="1.7"/><circle cx="522.2" cy="479" r="1.7"/><circle cx="523.3" cy="473" r="1.7"/><circle cx="522.6" cy="478.4" r="1.7"/><circle cx="524.7" cy="470.1" r="1.7"/><circle cx="523.8" cy="477.1" r="1.7"/><circle cx="526.2" cy="470.1" r="1.7"/><circle cx="525.4" cy="477.8" r="1.7"/><circle cx="527.5" cy="470.9" r="1.7"/><circle cx="528.6" cy="477.1" r="1.7"/><circle cx="531.4" cy="470.2" r="1.7"/><circle cx="530.6" cy="477" r="1.7"/><circle cx="533.3" cy="470.7" r="1.7"/><circle cx="533.7" cy="476.8" r="1.7"/><circle cx="535.5" cy="470.8" r="1.7"/><circle cx="535.1" cy="477.7" r="1.7"/><circle cx="537.6" cy="470.5" r="1.7"/><circle cx="536.7" cy="476.9" r="1.7"/><circle cx="539" cy="470.9" r="1.7"/><circle cx="537.6" cy="477.1" r="1.7"/><circle cx="540.6" cy="470.2" r="1.7"/><circle cx="541.2" cy="477.2" r="1.7"/><circle cx="543.5" cy="470.6" r="1.7"/><circle cx="542.8" cy="477.1" r="1.7"/><circle cx="545" cy="470.8" r="1.7"/><circle cx="544.4" cy="477.1" r="1.7"/><circle cx="546.6" cy="470.9" r="1.7"/><circle cx="546.9" cy="476.9" r="1.7"/><circle cx="549.2" cy="469.6" r="1.7"/><circle cx="549" cy="476.4" r="1.7"/><circle cx="548.3" cy="473.9" r="1.7"/><circle cx="548.4" cy="478.5" r="1.7"/><circle cx="550" cy="473.8" r="1.7"/><circle cx="550.8" cy="479.5" r="1.7"/><circle cx="553.5" cy="473.9" r="1.7"/><circle cx="552.8" cy="479.4" r="1.7"/><circle cx="555" cy="473.6" r="1.7"/><circle cx="556.1" cy="478.5" r="1.7"/><circle cx="557.6" cy="473.5" r="1.7"/><circle cx="557.1" cy="479.4" r="1.7"/><circle cx="557.7" cy="472.5" r="1.7"/><circle cx="557.6" cy="478.9" r="1.7"/><circle cx="560.2" cy="472.6" r="1.7"/><circle cx="560.3" cy="478.8" r="1.7"/><circle cx="564" cy="472.9" r="1.7"/><circle cx="564.1" cy="478.5" r="1.7"/><circle cx="564.9" cy="472.6" r="1.7"/><circle cx="566.1" cy="479.3" r="1.7"/><circle cx="567.3" cy="472.5" r="1.7"/><circle cx="567.3" cy="478.3" r="1.7"/><circle cx="569.8" cy="473" r="1.7"/><circle cx="570.8" cy="477.7" r="1.7"/><circle cx="573" cy="473" r="1.7"/><circle cx="572.5" cy="479" r="1.7"/><circle cx="574.7" cy="472.7" r="1.7"/><circle cx="575.7" cy="478.9" r="1.7"/><circle cx="578" cy="472.2" r="1.7"/><circle cx="577.4" cy="478.1" r="1.7"/><circle cx="579.6" cy="473.3" r="1.7"/><circle cx="580.9" cy="478.3" r="1.7"/><circle cx="582.2" cy="472.7" r="1.7"/><circle cx="582" cy="478.4" r="1.7"/><circle cx="584.2" cy="473.7" r="1.7"/><circle cx="585.1" cy="479.1" r="1.7"/><circle cx="586.5" cy="472.8" r="1.7"/><circle cx="586.4" cy="479.2" r="1.7"/><circle cx="589.9" cy="473.7" r="1.7"/><circle cx="590.3" cy="479" r="1.7"/><circle cx="591.8" cy="472.9" r="1.7"/><circle cx="591.5" cy="478.3" r="1.7"/><circle cx="593" cy="469.3" r="1.7"/><circle cx="593.7" cy="476.5" r="1.7"/><circle cx="596.4" cy="469.2" r="1.7"/><circle cx="596.4" cy="477.4" r="1.7"/><circle cx="599" cy="469.7" r="1.7"/><circle cx="599.6" cy="476.7" r="1.7"/><circle cx="600.9" cy="469.5" r="1.7"/><circle cx="600.9" cy="478" r="1.7"/><circle cx="604" cy="469.5" r="1.7"/><circle cx="604" cy="477.6" r="1.7"/><circle cx="604" cy="474" r="1.7"/><circle cx="603.5" cy="479.4" r="1.7"/><circle cx="605.6" cy="474.3" r="1.7"/><circle cx="606.5" cy="480" r="1.7"/><circle cx="608" cy="474.2" r="1.7"/><circle cx="608.3" cy="479.1" r="1.7"/><circle cx="610.6" cy="474.4" r="1.7"/><circle cx="610.7" cy="478.6" r="1.7"/><circle cx="612.8" cy="474" r="1.7"/><circle cx="612.6" cy="479.9" r="1.7"/><circle cx="616" cy="473.1" r="1.7"/><circle cx="615.8" cy="479" r="1.7"/><circle cx="617.9" cy="472.9" r="1.7"/><circle cx="617.4" cy="478.5" r="1.7"/><circle cx="620.8" cy="472.9" r="1.7"/><circle cx="620.2" cy="479.1" r="1.7"/><circle cx="623.2" cy="473.4" r="1.7"/><circle cx="623.5" cy="478.6" r="1.7"/><circle cx="624.9" cy="473" r="1.7"/><circle cx="623.9" cy="479.1" r="1.7"/><circle cx="625.7" cy="474.3" r="1.7"/><circle cx="626.2" cy="479.5" r="1.7"/><circle cx="628.7" cy="473.1" r="1.7"/><circle cx="628.7" cy="479.2" r="1.7"/><circle cx="631.5" cy="473.6" r="1.7"/><circle cx="631.1" cy="479.5" r="1.7"/><circle cx="632.5" cy="474" r="1.7"/><circle cx="633.6" cy="479.1" r="1.7"/><circle cx="635.4" cy="473.2" r="1.7"/><circle cx="636.3" cy="479.5" r="1.7"/><circle cx="638.2" cy="473.5" r="1.7"/><circle cx="638.8" cy="478.6" r="1.7"/><circle cx="639.8" cy="473.2" r="1.7"/><circle cx="640.3" cy="478.4" r="1.7"/><circle cx="642.4" cy="473.6" r="1.7"/><circle cx="642.5" cy="478.2" r="1.7"/><circle cx="645" cy="473.9" r="1.7"/><circle cx="646" cy="478.1" r="1.7"/><circle cx="648.3" cy="472.9" r="1.7"/><circle cx="647.6" cy="478.3" r="1.7"/><circle cx="648.4" cy="472.5" r="1.7"/><circle cx="648.6" cy="478.8" r="1.7"/><circle cx="651.7" cy="471" r="1.7"/><circle cx="650.8" cy="478.4" r="1.7"/><circle cx="653.5" cy="471.2" r="1.7"/><circle cx="653.7" cy="477.4" r="1.7"/><circle cx="655.5" cy="471.3" r="1.7"/><circle cx="655.4" cy="478.3" r="1.7"/><circle cx="656.5" cy="470.6" r="1.7"/><circle cx="656.8" cy="477.5" r="1.7"/><circle cx="659.3" cy="470.8" r="1.7"/><circle cx="659.1" cy="478.2" r="1.7"/><circle cx="659.3" cy="473.2" r="1.7"/><circle cx="658.2" cy="477.6" r="1.7"/><circle cx="661.8" cy="472.5" r="1.7"/><circle cx="661.2" cy="477.5" r="1.7"/><circle cx="663.8" cy="473" r="1.7"/><circle cx="663.6" cy="477.5" r="1.7"/><circle cx="664.3" cy="473.4" r="1.7"/><circle cx="664.2" cy="479" r="1.7"/><circle cx="667.2" cy="472.9" r="1.7"/><circle cx="666.3" cy="479.1" r="1.7"/><circle cx="668.9" cy="472.2" r="1.7"/><circle cx="669.2" cy="479.1" r="1.7"/><circle cx="670.5" cy="472.5" r="1.7"/><circle cx="669.6" cy="478.2" r="1.7"/><circle cx="673.3" cy="473.7" r="1.7"/><circle cx="673.4" cy="478.6" r="1.7"/><circle cx="674.6" cy="473.3" r="1.7"/><circle cx="675.2" cy="478.2" r="1.7"/><circle cx="677.6" cy="472.4" r="1.7"/><circle cx="677.4" cy="477.9" r="1.7"/><circle cx="680.8" cy="472.4" r="1.7"/><circle cx="680.4" cy="478.6" r="1.7"/><circle cx="682.5" cy="473" r="1.7"/><circle cx="681.9" cy="477.8" r="1.7"/><circle cx="682.6" cy="468.1" r="1.7"/><circle cx="682.6" cy="476.2" r="1.7"/><circle cx="684.1" cy="467.7" r="1.7"/><circle cx="684.6" cy="475.4" r="1.7"/><circle cx="687" cy="468.1" r="1.7"/><circle cx="687.9" cy="475.7" r="1.7"/><circle cx="690.3" cy="468.1" r="1.7"/><circle cx="689.1" cy="475.2" r="1.7"/><circle cx="690.8" cy="467.3" r="1.7"/><circle cx="691.3" cy="475.8" r="1.7"/><circle cx="693" cy="468.7" r="1.7"/><circle cx="692.5" cy="475.5" r="1.7"/><circle cx="693.7" cy="474" r="1.7"/><circle cx="694.3" cy="478.7" r="1.7"/><circle cx="694.9" cy="472.8" r="1.7"/><circle cx="696.2" cy="479.1" r="1.7"/><circle cx="697.4" cy="472.7" r="1.7"/><circle cx="697.2" cy="478.7" r="1.7"/><circle cx="699.1" cy="473.8" r="1.7"/><circle cx="698.7" cy="478.4" r="1.7"/><circle cx="701.1" cy="473.7" r="1.7"/><circle cx="700.6" cy="479.6" r="1.7"/><circle cx="702.1" cy="473.3" r="1.7"/><circle cx="702.1" cy="478.3" r="1.7"/><circle cx="705.9" cy="473.1" r="1.7"/><circle cx="704.7" cy="479.2" r="1.7"/><circle cx="706.6" cy="473.7" r="1.7"/><circle cx="706.7" cy="478.3" r="1.7"/><circle cx="708.3" cy="474.1" r="1.7"/><circle cx="708.9" cy="478.2" r="1.7"/><circle cx="710.4" cy="472.8" r="1.7"/><circle cx="710.7" cy="478.7" r="1.7"/><circle cx="712.8" cy="473.9" r="1.7"/><circle cx="713.7" cy="478.6" r="1.7"/><circle cx="714.7" cy="472.5" r="1.7"/><circle cx="715" cy="478.9" r="1.7"/><circle cx="717.8" cy="472.3" r="1.7"/><circle cx="717.4" cy="479.1" r="1.7"/><circle cx="718.3" cy="472.3" r="1.7"/><circle cx="718.7" cy="478.9" r="1.7"/><circle cx="720.8" cy="472.8" r="1.7"/><circle cx="720.9" cy="478.2" r="1.7"/><circle cx="723.5" cy="472.3" r="1.7"/><circle cx="722.9" cy="479" r="1.7"/><circle cx="726.6" cy="472.7" r="1.7"/><circle cx="727" cy="479.1" r="1.7"/><circle cx="727.7" cy="473.6" r="1.7"/><circle cx="727.1" cy="478.1" r="1.7"/><circle cx="730.5" cy="474.2" r="1.7"/><circle cx="729.6" cy="479.6" r="1.7"/><circle cx="733.2" cy="473.7" r="1.7"/><circle cx="733.3" cy="479.3" r="1.7"/><circle cx="735.7" cy="473.3" r="1.7"/><circle cx="735.6" cy="479.2" r="1.7"/><circle cx="737.3" cy="473.8" r="1.7"/><circle cx="737.6" cy="478.9" r="1.7"/><circle cx="739.3" cy="473.8" r="1.7"/><circle cx="739.2" cy="479.6" r="1.7"/><circle cx="741" cy="473.5" r="1.7"/><circle cx="741.4" cy="479.7" r="1.7"/><circle cx="743.7" cy="473.4" r="1.7"/><circle cx="744.3" cy="479.3" r="1.7"/><circle cx="745.3" cy="473.6" r="1.7"/><circle cx="745.9" cy="479.8" r="1.7"/><circle cx="748.1" cy="473.2" r="1.7"/><circle cx="747.7" cy="479" r="1.7"/><circle cx="748.8" cy="469.3" r="1.7"/><circle cx="749.4" cy="476.4" r="1.7"/><circle cx="751.2" cy="469" r="1.7"/><circle cx="751" cy="477" r="1.7"/><circle cx="752.9" cy="468" r="1.7"/><circle cx="753" cy="476" r="1.7"/><circle cx="756.3" cy="468.9" r="1.7"/><circle cx="757" cy="477.1" r="1.7"/><circle cx="757.7" cy="468" r="1.7"/><circle cx="758.5" cy="477" r="1.7"/><circle cx="760" cy="468.2" r="1.7"/><circle cx="760.2" cy="476.9" r="1.7"/><circle cx="763.6" cy="469.2" r="1.7"/><circle cx="763" cy="476.5" r="1.7"/><circle cx="765.7" cy="468" r="1.7"/><circle cx="764.4" cy="476.2" r="1.7"/><circle cx="765.6" cy="473.1" r="1.7"/><circle cx="765.6" cy="479.5" r="1.7"/><circle cx="766.6" cy="473.7" r="1.7"/><circle cx="766.9" cy="478.2" r="1.7"/><circle cx="769.9" cy="473" r="1.7"/><circle cx="770.1" cy="478.3" r="1.7"/><circle cx="771.2" cy="472.9" r="1.7"/><circle cx="770.6" cy="478.4" r="1.7"/><circle cx="773.7" cy="473.3" r="1.7"/><circle cx="774.2" cy="478" r="1.7"/><circle cx="775.6" cy="473.2" r="1.7"/><circle cx="775" cy="478" r="1.7"/><circle cx="778.8" cy="472.5" r="1.7"/><circle cx="778.3" cy="478.6" r="1.7"/><circle cx="779.3" cy="472.7" r="1.7"/><circle cx="780.3" cy="478.6" r="1.7"/><circle cx="781.7" cy="472.5" r="1.7"/><circle cx="782" cy="478.3" r="1.7"/><circle cx="784.9" cy="472.4" r="1.7"/><circle cx="785" cy="478.1" r="1.7"/><circle cx="786.7" cy="473.2" r="1.7"/><circle cx="786.9" cy="477.9" r="1.7"/><circle cx="790.3" cy="472.8" r="1.7"/><circle cx="790.2" cy="478.7" r="1.7"/><circle cx="792.1" cy="473.1" r="1.7"/><circle cx="792.4" cy="479" r="1.7"/><circle cx="796.1" cy="473.5" r="1.7"/><circle cx="795.4" cy="479.4" r="1.7"/><circle cx="796.7" cy="473.9" r="1.7"/><circle cx="796.9" cy="479.7" r="1.7"/><circle cx="798.5" cy="473" r="1.7"/><circle cx="797.7" cy="478.3" r="1.7"/><circle cx="799.8" cy="473.4" r="1.7"/><circle cx="800" cy="478.6" r="1.7"/><circle cx="802.6" cy="474.2" r="1.7"/><circle cx="802" cy="479" r="1.7"/><circle cx="804.5" cy="474" r="1.7"/><circle cx="804.3" cy="479.5" r="1.7"/><circle cx="806.4" cy="473.6" r="1.7"/><circle cx="806.8" cy="478.5" r="1.7"/><circle cx="808.9" cy="473.1" r="1.7"/><circle cx="807.5" cy="479.1" r="1.7"/><circle cx="810.1" cy="473" r="1.7"/><circle cx="811" cy="478.5" r="1.7"/><circle cx="813.2" cy="473" r="1.7"/><circle cx="812.3" cy="478.2" r="1.7"/><circle cx="815.2" cy="473.1" r="1.7"/><circle cx="814.8" cy="478.3" r="1.7"/><circle cx="817.6" cy="473.7" r="1.7"/><circle cx="817.5" cy="479" r="1.7"/><circle cx="818.6" cy="473.9" r="1.7"/><circle cx="819.3" cy="478.9" r="1.7"/><circle cx="821.2" cy="472.7" r="1.7"/><circle cx="820.7" cy="478.9" r="1.7"/><circle cx="823.4" cy="473.4" r="1.7"/><circle cx="823.2" cy="478.9" r="1.7"/><circle cx="825.4" cy="473" r="1.7"/><circle cx="825.5" cy="478.2" r="1.7"/><circle cx="827.8" cy="472.8" r="1.7"/><circle cx="827.3" cy="479.1" r="1.7"/><circle cx="830" cy="473.9" r="1.7"/><circle cx="830" cy="478.5" r="1.7"/><circle cx="832.5" cy="473.7" r="1.7"/><circle cx="832.4" cy="478.9" r="1.7"/><circle cx="834.8" cy="474.2" r="1.7"/><circle cx="834.3" cy="478.5" r="1.7"/><circle cx="835.7" cy="474.5" r="1.7"/><circle cx="837.2" cy="479.6" r="1.7"/><circle cx="838.8" cy="473.3" r="1.7"/><circle cx="838.8" cy="479.3" r="1.7"/><circle cx="840.2" cy="473.7" r="1.7"/><circle cx="840.1" cy="479.6" r="1.7"/><circle cx="842.4" cy="473.3" r="1.7"/><circle cx="842.5" cy="479.1" r="1.7"/><circle cx="843" cy="473.1" r="1.7"/><circle cx="842.5" cy="479.5" r="1.7"/><circle cx="844.2" cy="473.5" r="1.7"/><circle cx="844.4" cy="480" r="1.7"/><circle cx="848.3" cy="474.6" r="1.7"/><circle cx="847.6" cy="479.8" r="1.7"/><circle cx="850.2" cy="474.3" r="1.7"/><circle cx="849.9" cy="478.9" r="1.7"/><circle cx="851.6" cy="473.9" r="1.7"/><circle cx="851.1" cy="479.9" r="1.7"/><circle cx="852.9" cy="473.7" r="1.7"/><circle cx="853" cy="479.2" r="1.7"/><circle cx="854.9" cy="473.4" r="1.7"/><circle cx="854.6" cy="479.8" r="1.7"/><circle cx="856.3" cy="473.6" r="1.7"/><circle cx="855.5" cy="478.8" r="1.7"/><circle cx="858.7" cy="473.8" r="1.7"/><circle cx="859" cy="478.5" r="1.7"/><circle cx="862" cy="474.4" r="1.7"/><circle cx="861.4" cy="478.8" r="1.7"/><circle cx="863.9" cy="474" r="1.7"/><circle cx="863.4" cy="479.3" r="1.7"/><circle cx="865.8" cy="473.7" r="1.7"/><circle cx="865.1" cy="479.7" r="1.7"/><circle cx="867.1" cy="473.4" r="1.7"/><circle cx="867.3" cy="478.5" r="1.7"/><circle cx="868.8" cy="473.6" r="1.7"/><circle cx="868.4" cy="479.2" r="1.7"/><circle cx="870.2" cy="472.7" r="1.7"/><circle cx="870.8" cy="478.7" r="1.7"/><circle cx="873.2" cy="473.6" r="1.7"/><circle cx="873.3" cy="478.3" r="1.7"/><circle cx="875.4" cy="474" r="1.7"/><circle cx="876.2" cy="479.2" r="1.7"/><circle cx="878.4" cy="473.6" r="1.7"/><circle cx="879.2" cy="478.3" r="1.7"/><circle cx="879.9" cy="473.3" r="1.7"/><circle cx="879.5" cy="478.4" r="1.7"/><circle cx="882.7" cy="472.8" r="1.7"/><circle cx="882.4" cy="479" r="1.7"/><circle cx="884.5" cy="473.4" r="1.7"/><circle cx="884.4" cy="478.8" r="1.7"/><circle cx="886.5" cy="474.1" r="1.7"/><circle cx="886.8" cy="478.1" r="1.7"/><circle cx="890.1" cy="473.5" r="1.7"/><circle cx="889.5" cy="479.3" r="1.7"/><circle cx="892.2" cy="473" r="1.7"/><circle cx="892" cy="479.2" r="1.7"/><circle cx="893.8" cy="472.7" r="1.7"/><circle cx="894" cy="479.2" r="1.7"/><circle cx="895.5" cy="473.8" r="1.7"/><circle cx="894.8" cy="479.5" r="1.7"/><circle cx="897.5" cy="473.1" r="1.7"/><circle cx="897.6" cy="478.6" r="1.7"/><circle cx="899.7" cy="473.1" r="1.7"/><circle cx="899.4" cy="478.9" r="1.7"/><circle cx="902.2" cy="473.8" r="1.7"/><circle cx="901.1" cy="478.5" r="1.7"/><circle cx="902.8" cy="472.9" r="1.7"/><circle cx="903.4" cy="479.4" r="1.7"/><circle cx="905.6" cy="472.7" r="1.7"/><circle cx="906.5" cy="478.8" r="1.7"/><circle cx="908.9" cy="473.2" r="1.7"/><circle cx="908.4" cy="479.7" r="1.7"/><circle cx="911.2" cy="473.4" r="1.7"/><circle cx="911.7" cy="479.5" r="1.7"/><circle cx="912.9" cy="473.4" r="1.7"/><circle cx="914.1" cy="478.9" r="1.7"/><circle cx="916" cy="473.5" r="1.7"/><circle cx="916.1" cy="478.6" r="1.7"/><circle cx="918.8" cy="472.9" r="1.7"/><circle cx="918" cy="479.6" r="1.7"/><circle cx="920.5" cy="473.7" r="1.7"/><circle cx="921.5" cy="479.6" r="1.7"/><circle cx="922.8" cy="473.2" r="1.7"/><circle cx="923.8" cy="479.4" r="1.7"/><circle cx="925.3" cy="473.8" r="1.7"/><circle cx="925.4" cy="478.3" r="1.7"/><circle cx="926.9" cy="473.7" r="1.7"/><circle cx="926.9" cy="478.5" r="1.7"/><circle cx="929.4" cy="474.1" r="1.7"/><circle cx="929.4" cy="479.2" r="1.7"/><circle cx="931.8" cy="474" r="1.7"/><circle cx="931.8" cy="479.8" r="1.7"/><circle cx="934.2" cy="473.4" r="1.7"/><circle cx="933.3" cy="479" r="1.7"/><circle cx="935.9" cy="473" r="1.7"/><circle cx="936" cy="478.8" r="1.7"/><circle cx="938.8" cy="473.6" r="1.7"/><circle cx="938.6" cy="479.9" r="1.7"/><circle cx="941.2" cy="474.2" r="1.7"/><circle cx="940.7" cy="479.6" r="1.7"/><circle cx="942.1" cy="472.9" r="1.7"/><circle cx="942.6" cy="479.8" r="1.7"/><circle cx="944.3" cy="474.1" r="1.7"/><circle cx="944" cy="478.6" r="1.7"/><circle cx="946.5" cy="474.4" r="1.7"/><circle cx="947.3" cy="478.8" r="1.7"/><circle cx="948.8" cy="473" r="1.7"/><circle cx="948.9" cy="479.9" r="1.7"/><circle cx="950.9" cy="474.1" r="1.7"/><circle cx="950.1" cy="480" r="1.7"/><circle cx="952" cy="474.1" r="1.7"/><circle cx="951.5" cy="479.1" r="1.7"/><circle cx="953.8" cy="473.1" r="1.7"/><circle cx="953.3" cy="478.9" r="1.7"/><circle cx="954.7" cy="473.4" r="1.7"/><circle cx="955.3" cy="478.8" r="1.7"/><circle cx="958" cy="473.5" r="1.7"/><circle cx="957.7" cy="479.9" r="1.7"/><circle cx="959.9" cy="473.2" r="1.7"/><circle cx="960.2" cy="479.2" r="1.7"/><circle cx="962.4" cy="473.2" r="1.7"/><circle cx="961.2" cy="479.7" r="1.7"/><circle cx="964.6" cy="473.4" r="1.7"/><circle cx="964.2" cy="478.7" r="1.7"/><circle cx="966" cy="473.7" r="1.7"/><circle cx="966" cy="478.7" r="1.7"/><circle cx="968.1" cy="473.9" r="1.7"/><circle cx="968.7" cy="478.5" r="1.7"/><circle cx="970.3" cy="473.3" r="1.7"/><circle cx="970.6" cy="478.6" r="1.7"/>
<polyline points="970,477 972,466 975,462 978.5,459 979.5,440 980.5,415 981.5,390 982.5,360 983.6,339.2 984.3,360 985,390 986,415 987.3,440 988.5,462 990,472 991,455 992,436 993.3,434 993.8,460 993,474 990,475" stroke="#0cff0c" stroke-width="3" fill="none" stroke-linejoin="round"/>
<circle cx="970" cy="477" r="2.4"/>
<circle cx="971" cy="471.5" r="2.4"/>
<circle cx="972" cy="466" r="2.4"/>
<circle cx="975" cy="462" r="2.4"/>
<circle cx="978.5" cy="459" r="2.4"/>
<circle cx="978.8" cy="452.7" r="2.4"/>
<circle cx="979.2" cy="446.3" r="2.4"/>
<circle cx="979.5" cy="440" r="2.4"/>
<circle cx="979.7" cy="435" r="2.4"/>
<circle cx="979.9" cy="430" r="2.4"/>
<circle cx="980.1" cy="425" r="2.4"/>
<circle cx="980.3" cy="420" r="2.4"/>
<circle cx="980.5" cy="415" r="2.4"/>
<circle cx="980.7" cy="410" r="2.4"/>
<circle cx="980.9" cy="405" r="2.4"/>
<circle cx="981.1" cy="400" r="2.4"/>
<circle cx="981.3" cy="395" r="2.4"/>
<circle cx="981.5" cy="390" r="2.4"/>
<circle cx="981.7" cy="385" r="2.4"/>
<circle cx="981.8" cy="380" r="2.4"/>
<circle cx="982" cy="375" r="2.4"/>
<circle cx="982.2" cy="370" r="2.4"/>
<circle cx="982.3" cy="365" r="2.4"/>
<circle cx="982.5" cy="360" r="2.4"/>
<circle cx="982.8" cy="354.8" r="2.4"/>
<circle cx="983" cy="349.6" r="2.4"/>
<circle cx="983.3" cy="344.4" r="2.4"/>
<circle cx="983.6" cy="339.2" r="2.4"/>
<circle cx="983.8" cy="344.4" r="2.4"/>
<circle cx="984" cy="349.6" r="2.4"/>
<circle cx="984.1" cy="354.8" r="2.4"/>
<circle cx="984.3" cy="360" r="2.4"/>
<circle cx="984.4" cy="365" r="2.4"/>
<circle cx="984.5" cy="370" r="2.4"/>
<circle cx="984.6" cy="375" r="2.4"/>
<circle cx="984.8" cy="380" r="2.4"/>
<circle cx="984.9" cy="385" r="2.4"/>
<circle cx="985" cy="390" r="2.4"/>
<circle cx="985.2" cy="395" r="2.4"/>
<circle cx="985.4" cy="400" r="2.4"/>
<circle cx="985.6" cy="405" r="2.4"/>
<circle cx="985.8" cy="410" r="2.4"/>
<circle cx="986" cy="415" r="2.4"/>
<circle cx="986.3" cy="420" r="2.4"/>
<circle cx="986.5" cy="425" r="2.4"/>
<circle cx="986.8" cy="430" r="2.4"/>
<circle cx="987" cy="435" r="2.4"/>
<circle cx="987.3" cy="440" r="2.4"/>
<circle cx="987.6" cy="445.5" r="2.4"/>
<circle cx="987.9" cy="451" r="2.4"/>
<circle cx="988.2" cy="456.5" r="2.4"/>
<circle cx="988.5" cy="462" r="2.4"/>
<circle cx="989.2" cy="467" r="2.4"/>
<circle cx="990" cy="472" r="2.4"/>
<circle cx="990.3" cy="466.3" r="2.4"/>
<circle cx="990.7" cy="460.7" r="2.4"/>
<circle cx="991" cy="455" r="2.4"/>
<circle cx="991.3" cy="448.7" r="2.4"/>
<circle cx="991.7" cy="442.3" r="2.4"/>
<circle cx="992" cy="436" r="2.4"/>
<circle cx="993.3" cy="434" r="2.4"/>
<circle cx="993.4" cy="439.2" r="2.4"/>
<circle cx="993.5" cy="444.4" r="2.4"/>
<circle cx="993.6" cy="449.6" r="2.4"/>
<circle cx="993.7" cy="454.8" r="2.4"/>
<circle cx="993.8" cy="460" r="2.4"/>
<circle cx="993.4" cy="467" r="2.4"/>
<circle cx="993" cy="474" r="2.4"/>
<polygon points="969,480 971,464 975,458 979,457 979.5,470 979,480"/>
<polygon points="987,478 988,465 990,462 993,464 994,478"/></g>
<line x1="983.5" y1="312" x2="983.5" y2="507" stroke="#c02030" stroke-opacity="0.75" stroke-dasharray="4 3" stroke-width="1"/>
<line x1="886.3" y1="347.9" x2="983.6" y2="339.2" stroke="#d8d8d8" stroke-width="1.3"/>
<circle cx="983.6" cy="339.2" r="3" fill="#ff2020"/>
<line x1="105" y1="776.5" x2="110" y2="776.5" stroke="#a0a0a0" stroke-width="1"/>
<text x="101" y="781.1" text-anchor="end" class="yl">1</text>
<line x1="110" y1="711.5" x2="1318.5" y2="711.5" stroke="#8c8c8c" stroke-dasharray="4 2" stroke-width="1"/>
<line x1="105" y1="711.5" x2="110" y2="711.5" stroke="#a0a0a0" stroke-width="1"/>
<text x="101" y="716.1" text-anchor="end" class="yl">1.5</text>
<line x1="110" y1="646.5" x2="1318.5" y2="646.5" stroke="#8c8c8c" stroke-dasharray="4 2" stroke-width="1"/>
<line x1="105" y1="646.5" x2="110" y2="646.5" stroke="#a0a0a0" stroke-width="1"/>
<text x="101" y="651.1" text-anchor="end" class="yl">2</text>
<line x1="110" y1="581.5" x2="1318.5" y2="581.5" stroke="#8c8c8c" stroke-dasharray="4 2" stroke-width="1"/>
<line x1="105" y1="581.5" x2="110" y2="581.5" stroke="#a0a0a0" stroke-width="1"/>
<text x="101" y="586.1" text-anchor="end" class="yl">2.5</text>
<line x1="239.5" y1="581" x2="239.5" y2="776" stroke="#8c8c8c" stroke-dasharray="4 2" stroke-width="1"/>
<line x1="239.5" y1="776" x2="239.5" y2="781" stroke="#a0a0a0" stroke-width="1"/>
<text x="239.5" y="797" text-anchor="middle" class="xl" textLength="75" lengthAdjust="spacingAndGlyphs">05-31 00:00</text>
<line x1="458.5" y1="581" x2="458.5" y2="776" stroke="#8c8c8c" stroke-dasharray="4 2" stroke-width="1"/>
<line x1="458.5" y1="776" x2="458.5" y2="781" stroke="#a0a0a0" stroke-width="1"/>
<text x="458.5" y="797" text-anchor="middle" class="xl" textLength="75" lengthAdjust="spacingAndGlyphs">05-31 08:00</text>
<line x1="678.5" y1="581" x2="678.5" y2="776" stroke="#8c8c8c" stroke-dasharray="4 2" stroke-width="1"/>
<line x1="678.5" y1="776" x2="678.5" y2="781" stroke="#a0a0a0" stroke-width="1"/>
<text x="678.5" y="797" text-anchor="middle" class="xl" textLength="75" lengthAdjust="spacingAndGlyphs">05-31 16:00</text>
<line x1="898.5" y1="581" x2="898.5" y2="776" stroke="#8c8c8c" stroke-dasharray="4 2" stroke-width="1"/>
<line x1="898.5" y1="776" x2="898.5" y2="781" stroke="#a0a0a0" stroke-width="1"/>
<text x="898.5" y="797" text-anchor="middle" class="xl" textLength="75" lengthAdjust="spacingAndGlyphs">06-01 00:00</text>
<line x1="1118.5" y1="581" x2="1118.5" y2="776" stroke="#8c8c8c" stroke-dasharray="4 2" stroke-width="1"/>
<line x1="1118.5" y1="776" x2="1118.5" y2="781" stroke="#a0a0a0" stroke-width="1"/>
<text x="1118.5" y="797" text-anchor="middle" class="xl" textLength="75" lengthAdjust="spacingAndGlyphs">06-01 08:00</text>
<line x1="110.5" y1="581" x2="110.5" y2="776.5" stroke="#909090" stroke-width="1"/>
<line x1="110" y1="776.5" x2="1318.5" y2="776.5" stroke="#c8c8c8" stroke-width="1"/>
<text x="0" y="0" transform="translate(79 678.5) rotate(-90)" text-anchor="middle" class="yn" textLength="46" lengthAdjust="spacingAndGlyphs">[mm/s]</text>
<g fill="#0cff0c"><polygon points="110,692.4 112,690.4 113,692.7 113,667.9 115,669.6 117,668.9 119,667.5 121,669.9 123,668.6 125,669.1 127,668.2 129,666.7 131,669.3 133,667.2 135,667.6 137,668.9 139,667.7 141,668.7 143,669.5 145,667.6 147,669.4 149,667.6 151,668.8 153,669.4 155,669.5 156,667.5 156,694.2 158,692.2 160,693.9 162,692.8 164,692 166,691.9 168,692.9 170,692.7 172,692.4 174,691.6 176,689.9 178,689.8 180,691.1 182,690 184,690.3 186,689.5 188,689.7 190,691.5 192,689.9 194,692 196,690.7 198,692.8 200,691.6 202,692 204,692.9 206,692 208,693.5 210,693.2 212,691.8 214,694.2 216,692.3 218,690.7 220,693.4 222,690.9 224,690.8 226,690.1 228,690.3 230,692.3 232,691.9 234,691.6 236,690.7 238,690.9 240,693 242,691.3 244,693.5 246,693.6 248,691.7 250,694.5 252,692.3 254,694.8 256,695.3 258,694.8 260,694.1 262,694.7 264,692.2 266,693.1 268,691.9 270,692.2 272,691.4 274,693.1 276,692.8 278,693.7 280,693.5 282,693.6 284,694.9 286,694.7 288,693.9 290,693.1 292,694.9 294,692.9 296,691.8 298,692.3 300,693.3 302,693.9 304,692.9 306,693 308,693.9 310,693.5 312,692.5 314,692.7 316,693.7 318,692.4 320,691.8 322,693.3 324,693.7 326,691.6 328,692.7 330,693.1 332,690.3 334,690.2 336,691.2 338,690.8 340,693 342,693.4 344,691.9 346,693.4 348,693.1 350,691.9 352,694.5 354,692 356,691.8 358,693.1 360,691.9 362,693.5 364,693.4 366,695.2 368,693.5 370,694.9 372,694.5 374,693.7 376,692.4 378,692.4 380,692.8 382,692.3 384,693 386,692.6 388,692.1 390,693.2 392,694.6 394,692.2 396,692.7 398,691.8 400,692.1 402,691.9 404,693.1 406,694.4 408,693.9 410,694.7 412,694.2 414,693.4 416,693.4 418,691.5 420,692.4 422,691.7 424,692.4 426,690.2 428,691.4 430,690.6 432,690.9 434,690.7 436,690 438,692.5 440,693.1 442,693 444,691.8 446,693.6 448,694.6 450,695 452,694.2 454,691.8 456,694.3 458,693.5 460,692.2 462,694.2 464,693.9 466,694 468,691.9 470,692.7 472,691.9 474,691.5 476,692.8 478,692.2 480,691.2 482,691.9 484,693 486,691.7 488,692.6 490,691.3 491,692.6 491,667.4 493,666.4 495,667 497,665.6 499,667.7 501,665 503,668.1 505,668.6 507,667.7 509,669.6 509,691.1 511,691.5 513,692 515,692.9 517,692.9 519,691.7 521,690.5 523,689.5 523,667.7 525,669.9 527,668.6 529,668.4 531,668.1 533,667.6 535,667.9 537,668.6 539,668.6 541,670.4 543,669.1 545,667.9 547,667.4 549,667.8 551,668.5 553,669.9 555,670.3 557,668.3 559,670 561,668.9 563,669.1 565,669 567,667.3 569,667.2 571,669 573,668.9 575,667.9 577,669.5 579,669.2 581,667.6 583,667 585,668.6 587,669.1 589,667.7 591,667.2 593,668.6 595,666.9 597,668.9 599,668.1 601,666.6 603,666.8 605,665.8 607,665.5 609,665.4 611,667.5 613,666.5 615,667.6 617,666.6 619,668.3 621,667.8 623,668.1 623,693.6 625,692.1 627,693.1 629,693.1 631,693.3 633,691.4 635,691.5 637,691.4 639,690.5 641,691.3 643,692.7 645,692.5 647,691.5 649,693.6 651,691.9 653,694.2 655,692.4 655,669.8 657,671.3 659,668.5 661,671.1 663,669.4 665,668.4 667,671.2 669,669.2 671,668.9 673,668.6 675,669.2 677,668 679,667.7 681,667.4 683,668 685,667.1 687,666.5 689,667.1 691,667.9 693,667.8 695,666.6 697,668.5 697,689.6 699,691.3 701,689.2 703,690 705,689.5 707,689.6 709,690.8 711,689.8 713,691.8 715,689.6 717,691.3 719,692.1 721,689.8 723,690.3 725,692.5 727,692 729,694 731,692.5 733,693.1 735,695.1 737,693.2 739,695 741,694.5 743,691.9 745,692.7 747,693.6 748,690.8 748,670.1 750,669.8 752,669.7 754,667 756,669 758,669.2 760,669 762,667.2 764,670.2 766,668.7 767,669.3 767,693.7 769,693 771,692.6 773,691 775,691.7 777,693.2 779,690 781,691.1 783,689.9 785,692.9 787,690.1 789,692.9 791,692.7 793,692.5 795,690.4 797,692.6 799,692 801,692 803,690.9 805,692 807,692.8 809,690.6 811,692.9 813,691.4 815,690.8 817,690.8 819,691.4 821,692 823,691.8 825,692.8 827,691.5 829,691.5 831,693 833,690.6 835,690 837,691.1 839,691.2 841,690.8 843,691.8 845,690.7 847,693.6 849,692.3 851,693.5 853,692.9 855,693 857,693.1 859,691.7 861,693 863,691.4 865,692.5 867,692.7 869,693.5 871,691.7 873,692.5 875,694.2 877,694.3 879,695 881,692.2 883,692.5 885,692 887,693.8 889,693.8 891,693.3 893,693.6 895,692.7 897,692.9 899,694.1 901,693.3 903,693.5 905,693.5 907,693.3 909,694.3 911,693.8 913,692.4 915,693.3 917,693.2 919,693.2 921,693.6 923,692.9 925,693 927,693.1 929,692.9 931,694.8 933,692.1 935,691.9 937,694.3 939,693.3 941,693.6 943,694.1 945,693.3 947,692.8 949,691.9 951,694.5 953,694.5 955,692.2 957,692.6 959,692.1 961,691.2 963,693.7 965,693.3 967,691 969,690.7 971,691.8 973,691.9 973,703.8 971,703.9 969,704.5 967,705.5 965,706.7 963,705 961,705.3 959,704.8 957,706 955,707.1 953,705 951,706.9 949,707.6 947,706.6 945,706.2 943,706.3 941,707.3 939,707 937,707.7 935,706.5 933,708.1 931,705.7 929,706.1 927,706.4 925,707.4 923,706.9 921,708.4 919,706.1 917,708.3 915,706.8 913,708.3 911,707.9 909,706.6 907,706.8 905,706.4 903,707.3 901,706 899,705.7 897,705.2 895,705 893,705.2 891,705.3 889,707.8 887,706.4 885,706 883,705.8 881,707.8 879,706.2 877,707.1 875,705.9 873,706.5 871,707.6 869,706.4 867,705.3 865,704.8 863,706 861,704.6 859,704.3 857,705.3 855,706.2 853,706.2 851,705.5 849,704.6 847,706.1 845,705.2 843,707.1 841,706.9 839,704.8 837,705.9 835,704 833,706 831,704.8 829,704.4 827,705.2 825,704.5 823,704.2 821,703.8 819,705.8 817,706.5 815,704.3 813,704.9 811,705.5 809,704 807,705.7 805,706.8 803,706.7 801,705.4 799,706 797,706.4 795,704 793,706 791,703.7 789,703.8 787,704.7 785,705.5 783,706.3 781,705.2 779,703.8 777,706.4 775,706.6 773,706.6 771,705 769,705.6 767,705.9 767,679.8 766,680 764,681.6 762,682.3 760,679.5 758,679 756,679.6 754,681.7 752,678.8 750,679.6 748,681.6 748,705.3 747,706.3 745,707.2 743,705.1 741,706.7 739,705.5 737,707.3 735,706.5 733,707.9 731,706.5 729,707 727,705.2 725,706.5 723,703.3 721,705.3 719,704.2 717,705 715,703.8 713,705.1 711,705.2 709,703 707,705.7 705,702.9 703,704.5 701,705 699,705 697,705.2 697,685.7 695,683.9 693,684.5 691,683.1 689,684.6 687,684.1 685,683.8 683,685.8 681,685.3 679,684.9 677,686.9 675,685.1 673,688.1 671,688.2 669,685.6 667,687.3 665,688.2 663,685.8 661,686.5 659,687 657,687.3 655,688 655,706.1 653,706.3 651,706.1 649,704.8 647,707.5 645,707.1 643,704.7 641,705.5 639,705.9 637,706.2 635,704.9 633,707.2 631,707.3 629,705.5 627,706.5 625,705.8 623,705.3 623,685.3 621,684.3 619,684.7 617,684.8 615,684.2 613,682.7 611,681.7 609,683 607,682.2 605,684.2 603,682.1 601,683.9 599,685.1 597,684.7 595,685.8 593,684.1 591,684.4 589,685.8 587,684.5 585,684.9 583,683.1 581,685.7 579,682.8 577,685.8 575,683.9 573,685.9 571,685.4 569,684.7 567,685.5 565,684.2 563,685.5 561,684.2 559,685.5 557,684 555,684.1 553,685.3 551,685.4 549,685.6 547,684.2 545,682.7 543,685.4 541,683.3 539,683.6 537,682.6 535,684.2 533,683.7 531,684 529,684.9 527,682.4 525,683.7 523,683.4 523,706 521,706 519,706.5 517,708.5 515,707 513,707.6 511,707.3 509,705.7 509,680.6 507,682.6 505,679.3 503,680.8 501,680.5 499,678.1 497,678.6 495,678.7 493,679.7 491,678.1 491,702.9 490,705.6 488,704.2 486,705.8 484,705.9 482,706.1 480,704.7 478,704.7 476,704.3 474,705.2 472,704.7 470,706 468,707 466,706.6 464,706.3 462,704.6 460,705.5 458,707.3 456,707.2 454,705.9 452,706.3 450,708 448,706.2 446,705.2 444,706.9 442,705.6 440,703.9 438,703.9 436,703.5 434,705.2 432,704.1 430,703.9 428,705.7 426,706 424,704.6 422,705.4 420,706.2 418,707.2 416,705.4 414,705.6 412,705.2 410,707 408,705.5 406,705.6 404,706 402,705.2 400,707 398,706.4 396,707.2 394,706.8 392,706.9 390,705 388,705.2 386,704.1 384,705.4 382,705.3 380,707 378,706.5 376,705.4 374,705.1 372,707.2 370,705.5 368,707.6 366,705.4 364,705.6 362,707.8 360,705.9 358,705 356,705 354,707 352,705.9 350,706.8 348,705 346,704.1 344,704.5 342,705.6 340,705.4 338,703.1 336,704.8 334,704.9 332,703.7 330,706 328,706.3 326,704.3 324,705.9 322,705.1 320,705.3 318,706.2 316,707 314,706.4 312,706.3 310,705 308,706.9 306,706.5 304,704.9 302,707 300,706.7 298,706.3 296,706.9 294,707.2 292,705.2 290,707.7 288,707.9 286,705.1 284,705.6 282,707.3 280,707.5 278,704.9 276,706.6 274,706.5 272,704.3 270,705.5 268,706.7 266,704.8 264,706.6 262,707.3 260,706.4 258,706 256,706.2 254,706.6 252,705.5 250,707.8 248,706.1 246,705.1 244,706.1 242,703.6 240,705.9 238,704.5 236,703.8 234,703 232,706 230,705.5 228,704.8 226,703.6 224,705.6 222,704.2 220,704.6 218,705.3 216,704.9 214,707.5 212,707.3 210,708.1 208,707 206,706 204,706.6 202,705.9 200,705.9 198,703.8 196,703.8 194,703 192,704.7 190,704.2 188,702.3 186,704.7 184,702.4 182,705.1 180,703.3 178,702.4 176,705.4 174,704.7 172,704.4 170,705 168,704.9 166,705.7 164,707.1 162,706.6 160,706.1 158,705.8 156,704.4 156,685 155,685.3 153,684.6 151,684.7 149,683.1 147,685 145,683.8 143,685.4 141,684.7 139,685.2 137,685 135,682.4 133,683.3 131,683.3 129,682.7 127,683.5 125,683.9 123,683.8 121,682.9 119,683.2 117,683.2 115,685.1 113,682.7 113,706.6 112,706.7 110,706.4"/><circle cx="109.6" cy="690.4" r="2.1"/><circle cx="110.5" cy="706.4" r="2.1"/><circle cx="112.9" cy="691.8" r="2.1"/><circle cx="111.7" cy="703.2" r="2.1"/><circle cx="112.6" cy="668.8" r="2.1"/><circle cx="113.5" cy="684" r="2.1"/><circle cx="114.5" cy="670.7" r="2.1"/><circle cx="115.3" cy="682.9" r="2.1"/><circle cx="116.9" cy="667.5" r="2.1"/><circle cx="116.7" cy="681.9" r="2.1"/><circle cx="118.2" cy="670.1" r="2.1"/><circle cx="118.1" cy="681.7" r="2.1"/><circle cx="120.4" cy="670.5" r="2.1"/><circle cx="120.2" cy="684.1" r="2.1"/><circle cx="121.2" cy="666.4" r="2.1"/><circle cx="122.4" cy="681.2" r="2.1"/><circle cx="123.5" cy="666.8" r="2.1"/><circle cx="123.7" cy="685" r="2.1"/><circle cx="124.8" cy="668.6" r="2.1"/><circle cx="125.6" cy="683.1" r="2.1"/><circle cx="127.4" cy="666.3" r="2.1"/><circle cx="126.3" cy="681.9" r="2.1"/><circle cx="128.8" cy="668.3" r="2.1"/><circle cx="129.2" cy="684.8" r="2.1"/><circle cx="130.1" cy="669.6" r="2.1"/><circle cx="130" cy="682.3" r="2.1"/><circle cx="132.4" cy="669.4" r="2.1"/><circle cx="131.6" cy="682.3" r="2.1"/><circle cx="135.1" cy="666.6" r="2.1"/><circle cx="135.1" cy="684.7" r="2.1"/><circle cx="136.1" cy="669.2" r="2.1"/><circle cx="136.4" cy="681.9" r="2.1"/><circle cx="138" cy="667" r="2.1"/><circle cx="137.9" cy="683.8" r="2.1"/><circle cx="140" cy="670.1" r="2.1"/><circle cx="139.5" cy="683" r="2.1"/><circle cx="143.5" cy="670.7" r="2.1"/><circle cx="143.3" cy="684" r="2.1"/><circle cx="145.5" cy="667.2" r="2.1"/><circle cx="145" cy="682.1" r="2.1"/><circle cx="147.7" cy="668.5" r="2.1"/><circle cx="148" cy="682.1" r="2.1"/><circle cx="150.8" cy="670.2" r="2.1"/><circle cx="150.9" cy="683.1" r="2.1"/><circle cx="152.1" cy="669.8" r="2.1"/><circle cx="151.5" cy="683.2" r="2.1"/><circle cx="153.7" cy="668.7" r="2.1"/><circle cx="153.7" cy="683.2" r="2.1"/><circle cx="154.9" cy="670" r="2.1"/><circle cx="155.5" cy="683.3" r="2.1"/><circle cx="155.8" cy="694.5" r="2.1"/><circle cx="156.4" cy="706.2" r="2.1"/><circle cx="157.4" cy="694.6" r="2.1"/><circle cx="158.3" cy="705.1" r="2.1"/><circle cx="158.6" cy="695" r="2.1"/><circle cx="158.4" cy="707.3" r="2.1"/><circle cx="161.2" cy="693.1" r="2.1"/><circle cx="161" cy="706.2" r="2.1"/><circle cx="163.2" cy="691.1" r="2.1"/><circle cx="161.9" cy="706.6" r="2.1"/><circle cx="165.2" cy="693.4" r="2.1"/><circle cx="165.4" cy="703.6" r="2.1"/><circle cx="165.5" cy="693.6" r="2.1"/><circle cx="165.4" cy="705.5" r="2.1"/><circle cx="167.8" cy="692" r="2.1"/><circle cx="169" cy="706" r="2.1"/><circle cx="170.2" cy="690.6" r="2.1"/><circle cx="171" cy="705.8" r="2.1"/><circle cx="172.2" cy="692.2" r="2.1"/><circle cx="172.5" cy="705.5" r="2.1"/><circle cx="174.9" cy="691.8" r="2.1"/><circle cx="174.2" cy="704.3" r="2.1"/><circle cx="176.8" cy="693" r="2.1"/><circle cx="176" cy="705.7" r="2.1"/><circle cx="179.1" cy="692.5" r="2.1"/><circle cx="178.6" cy="703.2" r="2.1"/><circle cx="182" cy="690.3" r="2.1"/><circle cx="182.3" cy="704.5" r="2.1"/><circle cx="182.1" cy="689" r="2.1"/><circle cx="182.8" cy="703.1" r="2.1"/><circle cx="184.3" cy="689" r="2.1"/><circle cx="185" cy="705.3" r="2.1"/><circle cx="186.4" cy="690" r="2.1"/><circle cx="186.6" cy="703.1" r="2.1"/><circle cx="189.9" cy="691.8" r="2.1"/><circle cx="189.7" cy="701.9" r="2.1"/><circle cx="190.4" cy="689.1" r="2.1"/><circle cx="190.5" cy="705.9" r="2.1"/><circle cx="193.9" cy="689.6" r="2.1"/><circle cx="192.7" cy="701.7" r="2.1"/><circle cx="194.1" cy="691.1" r="2.1"/><circle cx="194.5" cy="704.7" r="2.1"/><circle cx="197" cy="690.5" r="2.1"/><circle cx="197.3" cy="705.2" r="2.1"/><circle cx="199.2" cy="691.9" r="2.1"/><circle cx="198.9" cy="703" r="2.1"/><circle cx="201.3" cy="691.2" r="2.1"/><circle cx="201.7" cy="707.2" r="2.1"/><circle cx="204.2" cy="693.1" r="2.1"/><circle cx="203.2" cy="705.2" r="2.1"/><circle cx="206.9" cy="691.9" r="2.1"/><circle cx="205.3" cy="706" r="2.1"/><circle cx="208" cy="692" r="2.1"/><circle cx="208.4" cy="706" r="2.1"/><circle cx="210.2" cy="692.7" r="2.1"/><circle cx="210" cy="708.6" r="2.1"/><circle cx="213.2" cy="691.4" r="2.1"/><circle cx="212.7" cy="707.3" r="2.1"/><circle cx="216.1" cy="691" r="2.1"/><circle cx="215.2" cy="708" r="2.1"/><circle cx="218.2" cy="691.3" r="2.1"/><circle cx="216.7" cy="707.3" r="2.1"/><circle cx="219.2" cy="691.5" r="2.1"/><circle cx="219.2" cy="707" r="2.1"/><circle cx="222.4" cy="690.7" r="2.1"/><circle cx="222.3" cy="702.6" r="2.1"/><circle cx="224.4" cy="690.6" r="2.1"/><circle cx="223.5" cy="705" r="2.1"/><circle cx="225.6" cy="692.3" r="2.1"/><circle cx="224.6" cy="706.5" r="2.1"/><circle cx="226.9" cy="691" r="2.1"/><circle cx="226" cy="702.8" r="2.1"/><circle cx="229.9" cy="691.4" r="2.1"/><circle cx="229.9" cy="706.7" r="2.1"/><circle cx="232.1" cy="690.6" r="2.1"/><circle cx="232.1" cy="706.7" r="2.1"/><circle cx="234.7" cy="693.1" r="2.1"/><circle cx="234.3" cy="704.8" r="2.1"/><circle cx="236.5" cy="693.1" r="2.1"/><circle cx="236.2" cy="704.7" r="2.1"/><circle cx="238.5" cy="693.4" r="2.1"/><circle cx="239" cy="703.2" r="2.1"/><circle cx="241.1" cy="691.3" r="2.1"/><circle cx="240.2" cy="702.8" r="2.1"/><circle cx="242.7" cy="690.8" r="2.1"/><circle cx="243.8" cy="706.4" r="2.1"/><circle cx="245.4" cy="690.2" r="2.1"/><circle cx="246.3" cy="705.8" r="2.1"/><circle cx="246.9" cy="692.5" r="2.1"/><circle cx="247.3" cy="706.2" r="2.1"/><circle cx="250" cy="691.7" r="2.1"/><circle cx="250.8" cy="704.8" r="2.1"/><circle cx="251.9" cy="696" r="2.1"/><circle cx="251.8" cy="706.1" r="2.1"/><circle cx="253.5" cy="693.7" r="2.1"/><circle cx="254.3" cy="706.4" r="2.1"/><circle cx="256" cy="692.5" r="2.1"/><circle cx="256.7" cy="707.1" r="2.1"/><circle cx="258.5" cy="695.2" r="2.1"/><circle cx="259.4" cy="706.5" r="2.1"/><circle cx="260.7" cy="695" r="2.1"/><circle cx="260.5" cy="706.8" r="2.1"/><circle cx="263" cy="693.2" r="2.1"/><circle cx="262.3" cy="706.4" r="2.1"/><circle cx="265.6" cy="695.4" r="2.1"/><circle cx="265" cy="705.4" r="2.1"/><circle cx="266.7" cy="694" r="2.1"/><circle cx="266.1" cy="706.8" r="2.1"/><circle cx="269.1" cy="694.5" r="2.1"/><circle cx="269.2" cy="706.2" r="2.1"/><circle cx="271.4" cy="691.7" r="2.1"/><circle cx="272.6" cy="703.5" r="2.1"/><circle cx="273.5" cy="693.5" r="2.1"/><circle cx="273.8" cy="707.3" r="2.1"/><circle cx="275" cy="690.7" r="2.1"/><circle cx="275.1" cy="705.3" r="2.1"/><circle cx="277.1" cy="693.3" r="2.1"/><circle cx="276.6" cy="707.3" r="2.1"/><circle cx="279.7" cy="692.3" r="2.1"/><circle cx="279.1" cy="706.1" r="2.1"/><circle cx="281" cy="690.9" r="2.1"/><circle cx="280.1" cy="705.3" r="2.1"/><circle cx="283.2" cy="691.4" r="2.1"/><circle cx="282.8" cy="706.9" r="2.1"/><circle cx="285" cy="694.9" r="2.1"/><circle cx="285.5" cy="706.7" r="2.1"/><circle cx="287.4" cy="695.9" r="2.1"/><circle cx="288.2" cy="708.5" r="2.1"/><circle cx="290.2" cy="692.1" r="2.1"/><circle cx="289.2" cy="708.1" r="2.1"/><circle cx="292.4" cy="692.7" r="2.1"/><circle cx="291.8" cy="708.3" r="2.1"/><circle cx="293.5" cy="692.6" r="2.1"/><circle cx="294" cy="704.4" r="2.1"/><circle cx="297.6" cy="694.3" r="2.1"/><circle cx="296.2" cy="705.6" r="2.1"/><circle cx="298.7" cy="694.1" r="2.1"/><circle cx="298.8" cy="707.1" r="2.1"/><circle cx="299" cy="690.8" r="2.1"/><circle cx="300.3" cy="707.1" r="2.1"/><circle cx="301.4" cy="694.1" r="2.1"/><circle cx="301.2" cy="704.7" r="2.1"/><circle cx="303.8" cy="692.1" r="2.1"/><circle cx="303.4" cy="706.8" r="2.1"/><circle cx="305.9" cy="693.6" r="2.1"/><circle cx="305.8" cy="707.5" r="2.1"/><circle cx="306.9" cy="691.2" r="2.1"/><circle cx="306.2" cy="704.8" r="2.1"/><circle cx="308.5" cy="692.3" r="2.1"/><circle cx="308.6" cy="707.8" r="2.1"/><circle cx="311.6" cy="692.8" r="2.1"/><circle cx="311.7" cy="704.9" r="2.1"/><circle cx="313.5" cy="693.7" r="2.1"/><circle cx="313.7" cy="704.9" r="2.1"/><circle cx="316" cy="693.2" r="2.1"/><circle cx="315.5" cy="706.2" r="2.1"/><circle cx="316.3" cy="692.1" r="2.1"/><circle cx="316.4" cy="704" r="2.1"/><circle cx="319.7" cy="693.5" r="2.1"/><circle cx="318.9" cy="707" r="2.1"/><circle cx="322" cy="691.7" r="2.1"/><circle cx="321.9" cy="705.5" r="2.1"/><circle cx="322.9" cy="694.4" r="2.1"/><circle cx="323.7" cy="707.7" r="2.1"/><circle cx="324.6" cy="692.6" r="2.1"/><circle cx="324.2" cy="704.7" r="2.1"/><circle cx="327" cy="694.1" r="2.1"/><circle cx="327.1" cy="705.9" r="2.1"/><circle cx="329.6" cy="691.3" r="2.1"/><circle cx="328.4" cy="707" r="2.1"/><circle cx="331" cy="689.9" r="2.1"/><circle cx="331.2" cy="705.3" r="2.1"/><circle cx="332.3" cy="691.4" r="2.1"/><circle cx="332.2" cy="703.3" r="2.1"/><circle cx="334.4" cy="689.1" r="2.1"/><circle cx="334.5" cy="703.1" r="2.1"/><circle cx="336.4" cy="690.6" r="2.1"/><circle cx="336.3" cy="702.1" r="2.1"/><circle cx="339.5" cy="691.4" r="2.1"/><circle cx="338.3" cy="703.2" r="2.1"/><circle cx="341.7" cy="690.5" r="2.1"/><circle cx="342.3" cy="706.5" r="2.1"/><circle cx="343.1" cy="692.2" r="2.1"/><circle cx="342.5" cy="704.2" r="2.1"/><circle cx="345.6" cy="692.9" r="2.1"/><circle cx="345.5" cy="704.8" r="2.1"/><circle cx="345.9" cy="694" r="2.1"/><circle cx="347.2" cy="707.3" r="2.1"/><circle cx="348.4" cy="691.3" r="2.1"/><circle cx="347.7" cy="704.4" r="2.1"/><circle cx="351" cy="694.4" r="2.1"/><circle cx="350.3" cy="707.9" r="2.1"/><circle cx="352.3" cy="693.7" r="2.1"/><circle cx="351.7" cy="705.5" r="2.1"/><circle cx="354" cy="691.6" r="2.1"/><circle cx="352.9" cy="705" r="2.1"/><circle cx="356" cy="693.2" r="2.1"/><circle cx="356.3" cy="707.2" r="2.1"/><circle cx="357.3" cy="691.7" r="2.1"/><circle cx="356.9" cy="704.6" r="2.1"/><circle cx="358.4" cy="695" r="2.1"/><circle cx="358.8" cy="704.5" r="2.1"/><circle cx="360.3" cy="693.5" r="2.1"/><circle cx="359.4" cy="704.6" r="2.1"/><circle cx="362.4" cy="691.7" r="2.1"/><circle cx="362.7" cy="705.4" r="2.1"/><circle cx="364.4" cy="693" r="2.1"/><circle cx="365.1" cy="706.3" r="2.1"/><circle cx="366.3" cy="695.3" r="2.1"/><circle cx="367" cy="708" r="2.1"/><circle cx="368.7" cy="694.4" r="2.1"/><circle cx="369.1" cy="708.9" r="2.1"/><circle cx="370.3" cy="694" r="2.1"/><circle cx="370.6" cy="705.5" r="2.1"/><circle cx="372.8" cy="694.4" r="2.1"/><circle cx="373.2" cy="706.2" r="2.1"/><circle cx="375.9" cy="695.4" r="2.1"/><circle cx="376.3" cy="707.6" r="2.1"/><circle cx="377.4" cy="693.1" r="2.1"/><circle cx="377.9" cy="705.8" r="2.1"/><circle cx="378.2" cy="692.7" r="2.1"/><circle cx="379" cy="705" r="2.1"/><circle cx="380.3" cy="690.9" r="2.1"/><circle cx="379.8" cy="705.5" r="2.1"/><circle cx="382" cy="692.8" r="2.1"/><circle cx="381.9" cy="704" r="2.1"/><circle cx="383.4" cy="694.7" r="2.1"/><circle cx="382.9" cy="704.9" r="2.1"/><circle cx="385.4" cy="692.6" r="2.1"/><circle cx="385.5" cy="703.4" r="2.1"/><circle cx="385.9" cy="692.1" r="2.1"/><circle cx="386.2" cy="705.1" r="2.1"/><circle cx="389" cy="693.1" r="2.1"/><circle cx="389.9" cy="706.4" r="2.1"/><circle cx="391.8" cy="692.2" r="2.1"/><circle cx="390.6" cy="707.9" r="2.1"/><circle cx="393.5" cy="691.2" r="2.1"/><circle cx="393.7" cy="705.5" r="2.1"/><circle cx="395.2" cy="695.1" r="2.1"/><circle cx="395.4" cy="705.2" r="2.1"/><circle cx="397.8" cy="692.3" r="2.1"/><circle cx="398.2" cy="708.5" r="2.1"/><circle cx="399.1" cy="694.7" r="2.1"/><circle cx="398.9" cy="706" r="2.1"/><circle cx="402.4" cy="694.6" r="2.1"/><circle cx="401.4" cy="708.1" r="2.1"/><circle cx="404.3" cy="693.2" r="2.1"/><circle cx="404.4" cy="706.2" r="2.1"/><circle cx="404.9" cy="693.3" r="2.1"/><circle cx="404.7" cy="704.8" r="2.1"/><circle cx="408.1" cy="694.8" r="2.1"/><circle cx="407.5" cy="706.2" r="2.1"/><circle cx="409.4" cy="692.2" r="2.1"/><circle cx="410.7" cy="707.2" r="2.1"/><circle cx="412.2" cy="694.7" r="2.1"/><circle cx="412.7" cy="706.6" r="2.1"/><circle cx="413.9" cy="691.7" r="2.1"/><circle cx="412.9" cy="704.5" r="2.1"/><circle cx="415.4" cy="692.9" r="2.1"/><circle cx="415.2" cy="704.5" r="2.1"/><circle cx="417.7" cy="692.2" r="2.1"/><circle cx="418.2" cy="708" r="2.1"/><circle cx="421.1" cy="690.8" r="2.1"/><circle cx="420.1" cy="705.5" r="2.1"/><circle cx="422.3" cy="694.2" r="2.1"/><circle cx="421.4" cy="705.5" r="2.1"/><circle cx="425.3" cy="691.7" r="2.1"/><circle cx="424" cy="704.7" r="2.1"/><circle cx="427.2" cy="690.1" r="2.1"/><circle cx="426.4" cy="706.6" r="2.1"/><circle cx="428.1" cy="689.5" r="2.1"/><circle cx="428.3" cy="703.9" r="2.1"/><circle cx="430.2" cy="692.6" r="2.1"/><circle cx="430.2" cy="702" r="2.1"/><circle cx="431.3" cy="690.4" r="2.1"/><circle cx="432.7" cy="703.3" r="2.1"/><circle cx="433.5" cy="691.1" r="2.1"/><circle cx="434.4" cy="702.3" r="2.1"/><circle cx="436.3" cy="690.6" r="2.1"/><circle cx="436.9" cy="705.2" r="2.1"/><circle cx="437.2" cy="689.7" r="2.1"/><circle cx="437.4" cy="705.3" r="2.1"/><circle cx="441.3" cy="693.9" r="2.1"/><circle cx="440" cy="706.6" r="2.1"/><circle cx="442.9" cy="695" r="2.1"/><circle cx="443.1" cy="704.2" r="2.1"/><circle cx="443.9" cy="693.6" r="2.1"/><circle cx="444.7" cy="707.7" r="2.1"/><circle cx="445" cy="695.4" r="2.1"/><circle cx="445.4" cy="705.3" r="2.1"/><circle cx="447.7" cy="694.7" r="2.1"/><circle cx="449" cy="706.7" r="2.1"/><circle cx="449.7" cy="693.9" r="2.1"/><circle cx="450.7" cy="707.6" r="2.1"/><circle cx="451.9" cy="692.1" r="2.1"/><circle cx="452.8" cy="704.5" r="2.1"/><circle cx="453.5" cy="694.5" r="2.1"/><circle cx="454" cy="705.6" r="2.1"/><circle cx="456.8" cy="691.9" r="2.1"/><circle cx="456.7" cy="707.7" r="2.1"/><circle cx="458.3" cy="693.3" r="2.1"/><circle cx="459.2" cy="706.6" r="2.1"/><circle cx="460.1" cy="692.1" r="2.1"/><circle cx="459.9" cy="706.9" r="2.1"/><circle cx="461.2" cy="692.1" r="2.1"/><circle cx="461.3" cy="707.3" r="2.1"/><circle cx="463.3" cy="691.9" r="2.1"/><circle cx="462.7" cy="705.9" r="2.1"/><circle cx="464.7" cy="694" r="2.1"/><circle cx="465.2" cy="705.2" r="2.1"/><circle cx="467.3" cy="694.5" r="2.1"/><circle cx="467.5" cy="704.6" r="2.1"/><circle cx="468.3" cy="690.6" r="2.1"/><circle cx="468.6" cy="706.4" r="2.1"/><circle cx="469.7" cy="693.3" r="2.1"/><circle cx="469.3" cy="704.9" r="2.1"/><circle cx="472.6" cy="692.7" r="2.1"/><circle cx="471.6" cy="704" r="2.1"/><circle cx="473.1" cy="692.7" r="2.1"/><circle cx="474" cy="707" r="2.1"/><circle cx="476.6" cy="691.8" r="2.1"/><circle cx="476" cy="704" r="2.1"/><circle cx="478.6" cy="691.8" r="2.1"/><circle cx="477.1" cy="704.2" r="2.1"/><circle cx="479.6" cy="691.8" r="2.1"/><circle cx="479.4" cy="706.7" r="2.1"/><circle cx="481.2" cy="689.7" r="2.1"/><circle cx="482.2" cy="705.2" r="2.1"/><circle cx="484.1" cy="689.6" r="2.1"/><circle cx="484" cy="706.1" r="2.1"/><circle cx="485.5" cy="689.8" r="2.1"/><circle cx="486.9" cy="704.7" r="2.1"/><circle cx="488" cy="693.2" r="2.1"/><circle cx="488.3" cy="705" r="2.1"/><circle cx="489.6" cy="690.9" r="2.1"/><circle cx="490.7" cy="703.4" r="2.1"/><circle cx="491.6" cy="666.9" r="2.1"/><circle cx="490.2" cy="677.1" r="2.1"/><circle cx="493.8" cy="666.4" r="2.1"/><circle cx="493.7" cy="677.2" r="2.1"/><circle cx="494.7" cy="665.1" r="2.1"/><circle cx="494.7" cy="678.7" r="2.1"/><circle cx="496.7" cy="666.5" r="2.1"/><circle cx="497.1" cy="680" r="2.1"/><circle cx="498.4" cy="666.1" r="2.1"/><circle cx="498.5" cy="678.9" r="2.1"/><circle cx="499.5" cy="664.7" r="2.1"/><circle cx="499.9" cy="679.3" r="2.1"/><circle cx="501.8" cy="665.9" r="2.1"/><circle cx="502" cy="680.6" r="2.1"/><circle cx="503.4" cy="666.9" r="2.1"/><circle cx="504.1" cy="679" r="2.1"/><circle cx="505.1" cy="668.3" r="2.1"/><circle cx="504.5" cy="679.6" r="2.1"/><circle cx="507.6" cy="669.5" r="2.1"/><circle cx="507.6" cy="679.5" r="2.1"/><circle cx="509.6" cy="692.8" r="2.1"/><circle cx="508.3" cy="707.9" r="2.1"/><circle cx="511.2" cy="692.5" r="2.1"/><circle cx="511.2" cy="705.9" r="2.1"/><circle cx="512.9" cy="690.9" r="2.1"/><circle cx="514.1" cy="707.6" r="2.1"/><circle cx="515.9" cy="691.6" r="2.1"/><circle cx="515.3" cy="707.4" r="2.1"/><circle cx="516.5" cy="689.5" r="2.1"/><circle cx="517.6" cy="708.8" r="2.1"/><circle cx="518.5" cy="692.8" r="2.1"/><circle cx="518.7" cy="708.1" r="2.1"/><circle cx="521.4" cy="692" r="2.1"/><circle cx="520.9" cy="707.9" r="2.1"/><circle cx="523.4" cy="670.2" r="2.1"/><circle cx="522.6" cy="683.3" r="2.1"/><circle cx="524.1" cy="670.2" r="2.1"/><circle cx="525.1" cy="683.5" r="2.1"/><circle cx="527.5" cy="666.5" r="2.1"/><circle cx="526.6" cy="684.2" r="2.1"/><circle cx="528.9" cy="667.2" r="2.1"/><circle cx="528.5" cy="684.2" r="2.1"/><circle cx="531.4" cy="670.1" r="2.1"/><circle cx="531.4" cy="682.5" r="2.1"/><circle cx="532" cy="667.8" r="2.1"/><circle cx="532" cy="683.6" r="2.1"/><circle cx="535.8" cy="667.9" r="2.1"/><circle cx="535" cy="685.7" r="2.1"/><circle cx="537.2" cy="670.2" r="2.1"/><circle cx="536" cy="685.9" r="2.1"/><circle cx="538.7" cy="668.4" r="2.1"/><circle cx="539.1" cy="684.2" r="2.1"/><circle cx="542.1" cy="668.1" r="2.1"/><circle cx="540.7" cy="685.5" r="2.1"/><circle cx="544" cy="667" r="2.1"/><circle cx="543.1" cy="686" r="2.1"/><circle cx="545.5" cy="670.9" r="2.1"/><circle cx="545" cy="684.9" r="2.1"/><circle cx="546.9" cy="669.9" r="2.1"/><circle cx="546.3" cy="685.5" r="2.1"/><circle cx="550.1" cy="670.2" r="2.1"/><circle cx="550.3" cy="685.4" r="2.1"/><circle cx="552.2" cy="670.3" r="2.1"/><circle cx="551.9" cy="685.3" r="2.1"/><circle cx="552.9" cy="668.3" r="2.1"/><circle cx="553.7" cy="685.9" r="2.1"/><circle cx="555.6" cy="667.1" r="2.1"/><circle cx="554.1" cy="684" r="2.1"/><circle cx="556.8" cy="668.5" r="2.1"/><circle cx="556" cy="686.3" r="2.1"/><circle cx="558.4" cy="668.9" r="2.1"/><circle cx="558.1" cy="686.9" r="2.1"/><circle cx="559.9" cy="669" r="2.1"/><circle cx="559.3" cy="683.3" r="2.1"/><circle cx="562.3" cy="668.8" r="2.1"/><circle cx="561.1" cy="686.8" r="2.1"/><circle cx="563.9" cy="667" r="2.1"/><circle cx="563.5" cy="683.2" r="2.1"/><circle cx="564.7" cy="670" r="2.1"/><circle cx="564.8" cy="684.4" r="2.1"/><circle cx="566.8" cy="667.8" r="2.1"/><circle cx="567.4" cy="683.3" r="2.1"/><circle cx="568.2" cy="668" r="2.1"/><circle cx="568.5" cy="682.5" r="2.1"/><circle cx="570.2" cy="670.4" r="2.1"/><circle cx="570.1" cy="684.1" r="2.1"/><circle cx="572.2" cy="667.4" r="2.1"/><circle cx="572.4" cy="684" r="2.1"/><circle cx="574.1" cy="668.1" r="2.1"/><circle cx="574.5" cy="685.2" r="2.1"/><circle cx="576.6" cy="666.4" r="2.1"/><circle cx="576.1" cy="682.7" r="2.1"/><circle cx="577.7" cy="668.9" r="2.1"/><circle cx="577.9" cy="686.1" r="2.1"/><circle cx="579.4" cy="666.8" r="2.1"/><circle cx="579.2" cy="685.2" r="2.1"/><circle cx="581.5" cy="669.7" r="2.1"/><circle cx="582.2" cy="684.2" r="2.1"/><circle cx="584.3" cy="668.2" r="2.1"/><circle cx="583.4" cy="684.1" r="2.1"/><circle cx="586.6" cy="669.2" r="2.1"/><circle cx="586.1" cy="686" r="2.1"/><circle cx="589.2" cy="668.1" r="2.1"/><circle cx="589.4" cy="683.9" r="2.1"/><circle cx="590.3" cy="669.5" r="2.1"/><circle cx="590.9" cy="687" r="2.1"/><circle cx="594.2" cy="670.5" r="2.1"/><circle cx="594.2" cy="682.9" r="2.1"/><circle cx="595.8" cy="670" r="2.1"/><circle cx="595.2" cy="685.4" r="2.1"/><circle cx="596.8" cy="666.5" r="2.1"/><circle cx="597" cy="683.6" r="2.1"/><circle cx="598.9" cy="668.2" r="2.1"/><circle cx="598.9" cy="683.5" r="2.1"/><circle cx="600.1" cy="668.9" r="2.1"/><circle cx="600" cy="684.6" r="2.1"/><circle cx="602.3" cy="665.2" r="2.1"/><circle cx="602.5" cy="683.7" r="2.1"/><circle cx="604.6" cy="665.3" r="2.1"/><circle cx="604.7" cy="684.6" r="2.1"/><circle cx="606.8" cy="664.4" r="2.1"/><circle cx="606" cy="684.1" r="2.1"/><circle cx="608" cy="666.3" r="2.1"/><circle cx="609.3" cy="682.6" r="2.1"/><circle cx="610.6" cy="666.5" r="2.1"/><circle cx="610" cy="684.9" r="2.1"/><circle cx="612.6" cy="665.7" r="2.1"/><circle cx="612.3" cy="685.4" r="2.1"/><circle cx="615.2" cy="667.4" r="2.1"/><circle cx="615.5" cy="682.4" r="2.1"/><circle cx="617" cy="665.6" r="2.1"/><circle cx="616.7" cy="681.8" r="2.1"/><circle cx="617.3" cy="667.9" r="2.1"/><circle cx="618.1" cy="686.3" r="2.1"/><circle cx="620.2" cy="665.3" r="2.1"/><circle cx="620.9" cy="684.3" r="2.1"/><circle cx="622" cy="669" r="2.1"/><circle cx="622.7" cy="683.3" r="2.1"/><circle cx="622.3" cy="693.4" r="2.1"/><circle cx="622.6" cy="707.5" r="2.1"/><circle cx="624.8" cy="693.6" r="2.1"/><circle cx="624.8" cy="708.6" r="2.1"/><circle cx="626.4" cy="692.6" r="2.1"/><circle cx="626.8" cy="708" r="2.1"/><circle cx="628.7" cy="691.8" r="2.1"/><circle cx="629.2" cy="708.4" r="2.1"/><circle cx="631" cy="693.9" r="2.1"/><circle cx="631.6" cy="707.5" r="2.1"/><circle cx="633.7" cy="691.8" r="2.1"/><circle cx="634.2" cy="706.4" r="2.1"/><circle cx="636.4" cy="690" r="2.1"/><circle cx="635.1" cy="705.4" r="2.1"/><circle cx="637.7" cy="690.1" r="2.1"/><circle cx="637.8" cy="704.2" r="2.1"/><circle cx="639" cy="692.6" r="2.1"/><circle cx="638.5" cy="705.8" r="2.1"/><circle cx="641.4" cy="691.8" r="2.1"/><circle cx="640.8" cy="705.1" r="2.1"/><circle cx="642.9" cy="690.2" r="2.1"/><circle cx="642.9" cy="707.3" r="2.1"/><circle cx="645" cy="691.6" r="2.1"/><circle cx="644.3" cy="703.9" r="2.1"/><circle cx="647.6" cy="694.1" r="2.1"/><circle cx="646.5" cy="707.1" r="2.1"/><circle cx="649.5" cy="694.5" r="2.1"/><circle cx="649" cy="705.7" r="2.1"/><circle cx="651.9" cy="693" r="2.1"/><circle cx="651.2" cy="708.3" r="2.1"/><circle cx="653.2" cy="692.2" r="2.1"/><circle cx="653.3" cy="707.8" r="2.1"/><circle cx="655.3" cy="670" r="2.1"/><circle cx="654.2" cy="689.1" r="2.1"/><circle cx="656.7" cy="672.1" r="2.1"/><circle cx="656.2" cy="685.1" r="2.1"/><circle cx="657.6" cy="671.6" r="2.1"/><circle cx="658.2" cy="685" r="2.1"/><circle cx="659.8" cy="668.6" r="2.1"/><circle cx="659.5" cy="688.8" r="2.1"/><circle cx="661.3" cy="670.4" r="2.1"/><circle cx="661.1" cy="687.1" r="2.1"/><circle cx="663.3" cy="670.2" r="2.1"/><circle cx="663.7" cy="688" r="2.1"/><circle cx="666.8" cy="670.4" r="2.1"/><circle cx="665.7" cy="685.5" r="2.1"/><circle cx="669" cy="668" r="2.1"/><circle cx="668.4" cy="685.9" r="2.1"/><circle cx="671" cy="670.1" r="2.1"/><circle cx="670.8" cy="688" r="2.1"/><circle cx="672.3" cy="669.3" r="2.1"/><circle cx="672" cy="687" r="2.1"/><circle cx="673.8" cy="671.2" r="2.1"/><circle cx="673.8" cy="685.9" r="2.1"/><circle cx="677.7" cy="668.6" r="2.1"/><circle cx="677.6" cy="684.2" r="2.1"/><circle cx="679.2" cy="666.5" r="2.1"/><circle cx="680" cy="684.1" r="2.1"/><circle cx="681.2" cy="666.3" r="2.1"/><circle cx="681.8" cy="683.1" r="2.1"/><circle cx="683.7" cy="668.5" r="2.1"/><circle cx="684" cy="686.5" r="2.1"/><circle cx="686" cy="669" r="2.1"/><circle cx="687.2" cy="684.4" r="2.1"/><circle cx="688.1" cy="666.3" r="2.1"/><circle cx="688.1" cy="682.7" r="2.1"/><circle cx="690.5" cy="668.2" r="2.1"/><circle cx="690.9" cy="685.5" r="2.1"/><circle cx="692.7" cy="667.1" r="2.1"/><circle cx="692.3" cy="682.9" r="2.1"/><circle cx="694.3" cy="668.1" r="2.1"/><circle cx="694.6" cy="682.5" r="2.1"/><circle cx="696.5" cy="665" r="2.1"/><circle cx="696.3" cy="684.3" r="2.1"/><circle cx="696.7" cy="690.5" r="2.1"/><circle cx="697" cy="705.2" r="2.1"/><circle cx="698.3" cy="689.6" r="2.1"/><circle cx="698.5" cy="703.1" r="2.1"/><circle cx="699.4" cy="692.4" r="2.1"/><circle cx="699.6" cy="705.8" r="2.1"/><circle cx="701.9" cy="690.9" r="2.1"/><circle cx="701.4" cy="706.1" r="2.1"/><circle cx="703.8" cy="690.8" r="2.1"/><circle cx="704.4" cy="704.9" r="2.1"/><circle cx="706.8" cy="691.2" r="2.1"/><circle cx="705.4" cy="705.6" r="2.1"/><circle cx="708.4" cy="691.7" r="2.1"/><circle cx="709.3" cy="705.9" r="2.1"/><circle cx="710.6" cy="689.7" r="2.1"/><circle cx="710.5" cy="705.1" r="2.1"/><circle cx="712.6" cy="692.2" r="2.1"/><circle cx="712.8" cy="706.4" r="2.1"/><circle cx="714.5" cy="691.6" r="2.1"/><circle cx="713.9" cy="704.4" r="2.1"/><circle cx="715.6" cy="689.9" r="2.1"/><circle cx="716.6" cy="706" r="2.1"/><circle cx="718.7" cy="691" r="2.1"/><circle cx="718.5" cy="705.2" r="2.1"/><circle cx="719.5" cy="693" r="2.1"/><circle cx="719.2" cy="704.3" r="2.1"/><circle cx="720.6" cy="692.4" r="2.1"/><circle cx="720.2" cy="705.8" r="2.1"/><circle cx="724" cy="690.2" r="2.1"/><circle cx="724.1" cy="704.2" r="2.1"/><circle cx="726.1" cy="691.9" r="2.1"/><circle cx="725.6" cy="703.5" r="2.1"/><circle cx="726.2" cy="690.2" r="2.1"/><circle cx="727.1" cy="704.4" r="2.1"/><circle cx="729.6" cy="691.3" r="2.1"/><circle cx="729.6" cy="705.3" r="2.1"/><circle cx="730.7" cy="694.6" r="2.1"/><circle cx="731.8" cy="707" r="2.1"/><circle cx="733.4" cy="691.9" r="2.1"/><circle cx="733.4" cy="708.1" r="2.1"/><circle cx="735.2" cy="692.5" r="2.1"/><circle cx="735.7" cy="705" r="2.1"/><circle cx="736.9" cy="692" r="2.1"/><circle cx="737.6" cy="705.5" r="2.1"/><circle cx="739.9" cy="692.6" r="2.1"/><circle cx="739.5" cy="709.1" r="2.1"/><circle cx="741.4" cy="695.2" r="2.1"/><circle cx="741.2" cy="708.6" r="2.1"/><circle cx="743.2" cy="692" r="2.1"/><circle cx="743.5" cy="708" r="2.1"/><circle cx="745.1" cy="694.6" r="2.1"/><circle cx="745.9" cy="706" r="2.1"/><circle cx="747.4" cy="669" r="2.1"/><circle cx="748.5" cy="681.8" r="2.1"/><circle cx="749.6" cy="668.2" r="2.1"/><circle cx="749.9" cy="680.8" r="2.1"/><circle cx="752" cy="668.4" r="2.1"/><circle cx="752.3" cy="682" r="2.1"/><circle cx="753.4" cy="666.9" r="2.1"/><circle cx="753.1" cy="681.8" r="2.1"/><circle cx="755.8" cy="667.8" r="2.1"/><circle cx="757.1" cy="682" r="2.1"/><circle cx="760" cy="667.7" r="2.1"/><circle cx="758.5" cy="679.5" r="2.1"/><circle cx="760.4" cy="667.6" r="2.1"/><circle cx="761.2" cy="681.5" r="2.1"/><circle cx="762" cy="668" r="2.1"/><circle cx="762" cy="679.1" r="2.1"/><circle cx="764.5" cy="670.5" r="2.1"/><circle cx="763.3" cy="682.2" r="2.1"/><circle cx="766.8" cy="668.1" r="2.1"/><circle cx="767.1" cy="679.1" r="2.1"/><circle cx="767.7" cy="691.2" r="2.1"/><circle cx="767.7" cy="707.1" r="2.1"/><circle cx="767.6" cy="693.1" r="2.1"/><circle cx="767.7" cy="706.7" r="2.1"/><circle cx="770.1" cy="692.3" r="2.1"/><circle cx="770.1" cy="707.5" r="2.1"/><circle cx="773.1" cy="692.7" r="2.1"/><circle cx="772.1" cy="707.4" r="2.1"/><circle cx="775.2" cy="692.4" r="2.1"/><circle cx="775.2" cy="706.6" r="2.1"/><circle cx="776.9" cy="691.8" r="2.1"/><circle cx="776.8" cy="703.1" r="2.1"/><circle cx="779.9" cy="692.5" r="2.1"/><circle cx="778.8" cy="705.1" r="2.1"/><circle cx="781.6" cy="691.2" r="2.1"/><circle cx="781.4" cy="705.7" r="2.1"/><circle cx="784.1" cy="692.5" r="2.1"/><circle cx="784.3" cy="703.1" r="2.1"/><circle cx="785.4" cy="690.7" r="2.1"/><circle cx="785.6" cy="703.9" r="2.1"/><circle cx="788.8" cy="690.9" r="2.1"/><circle cx="788.8" cy="706.8" r="2.1"/><circle cx="790.1" cy="693.5" r="2.1"/><circle cx="789.7" cy="706.7" r="2.1"/><circle cx="792.1" cy="690.1" r="2.1"/><circle cx="792.9" cy="704.8" r="2.1"/><circle cx="794.1" cy="692.8" r="2.1"/><circle cx="794.8" cy="707.1" r="2.1"/><circle cx="796.1" cy="691.4" r="2.1"/><circle cx="795.8" cy="704.1" r="2.1"/><circle cx="797.8" cy="691.9" r="2.1"/><circle cx="797.7" cy="706.2" r="2.1"/><circle cx="799.8" cy="692.8" r="2.1"/><circle cx="799.9" cy="703.4" r="2.1"/><circle cx="803.1" cy="693.7" r="2.1"/><circle cx="802.4" cy="704.5" r="2.1"/><circle cx="804.5" cy="694" r="2.1"/><circle cx="805.3" cy="705.6" r="2.1"/><circle cx="806" cy="691.5" r="2.1"/><circle cx="807.1" cy="703.8" r="2.1"/><circle cx="807.8" cy="693.9" r="2.1"/><circle cx="808.9" cy="706.7" r="2.1"/><circle cx="810.3" cy="690.6" r="2.1"/><circle cx="810.1" cy="705.4" r="2.1"/><circle cx="811.7" cy="690.2" r="2.1"/><circle cx="812.9" cy="706.4" r="2.1"/><circle cx="814.6" cy="690.1" r="2.1"/><circle cx="813.3" cy="704.6" r="2.1"/><circle cx="815.7" cy="692.9" r="2.1"/><circle cx="816.4" cy="706.4" r="2.1"/><circle cx="817.3" cy="689.8" r="2.1"/><circle cx="818.4" cy="705.1" r="2.1"/><circle cx="820" cy="690.6" r="2.1"/><circle cx="820" cy="706.6" r="2.1"/><circle cx="822.3" cy="692.5" r="2.1"/><circle cx="822.1" cy="704.9" r="2.1"/><circle cx="824.9" cy="692.5" r="2.1"/><circle cx="824.7" cy="703.7" r="2.1"/><circle cx="825.9" cy="692.4" r="2.1"/><circle cx="824.9" cy="706.5" r="2.1"/><circle cx="828.1" cy="691.6" r="2.1"/><circle cx="828.6" cy="706.9" r="2.1"/><circle cx="830.6" cy="692.6" r="2.1"/><circle cx="830.6" cy="702.9" r="2.1"/><circle cx="832.5" cy="690.7" r="2.1"/><circle cx="832.5" cy="703.7" r="2.1"/><circle cx="834.7" cy="693.2" r="2.1"/><circle cx="834.3" cy="706.5" r="2.1"/><circle cx="835.8" cy="692.7" r="2.1"/><circle cx="836.2" cy="704.6" r="2.1"/><circle cx="838" cy="692.2" r="2.1"/><circle cx="837.5" cy="704.5" r="2.1"/><circle cx="838.7" cy="691.4" r="2.1"/><circle cx="839.2" cy="706" r="2.1"/><circle cx="841.1" cy="693.1" r="2.1"/><circle cx="840.4" cy="707.6" r="2.1"/><circle cx="843.3" cy="690.8" r="2.1"/><circle cx="842.5" cy="706.5" r="2.1"/><circle cx="845.8" cy="691.2" r="2.1"/><circle cx="845.5" cy="706.9" r="2.1"/><circle cx="848.4" cy="690.5" r="2.1"/><circle cx="848.2" cy="703.7" r="2.1"/><circle cx="850" cy="690.4" r="2.1"/><circle cx="849.8" cy="706.5" r="2.1"/><circle cx="851.8" cy="692.3" r="2.1"/><circle cx="853" cy="704.1" r="2.1"/><circle cx="855.8" cy="691.6" r="2.1"/><circle cx="854.7" cy="704.2" r="2.1"/><circle cx="856.6" cy="693.2" r="2.1"/><circle cx="857.4" cy="706.1" r="2.1"/><circle cx="859.3" cy="693" r="2.1"/><circle cx="858.6" cy="705.4" r="2.1"/><circle cx="860.1" cy="693.7" r="2.1"/><circle cx="860" cy="704.9" r="2.1"/><circle cx="862.7" cy="690.2" r="2.1"/><circle cx="862.1" cy="706.6" r="2.1"/><circle cx="863.9" cy="692.2" r="2.1"/><circle cx="864.3" cy="708" r="2.1"/><circle cx="865.3" cy="690.5" r="2.1"/><circle cx="865.9" cy="707.9" r="2.1"/><circle cx="867.6" cy="692.7" r="2.1"/><circle cx="868" cy="708.1" r="2.1"/><circle cx="870.8" cy="691.7" r="2.1"/><circle cx="870.5" cy="706.3" r="2.1"/><circle cx="872.5" cy="691.1" r="2.1"/><circle cx="872.3" cy="708.6" r="2.1"/><circle cx="874.3" cy="694.2" r="2.1"/><circle cx="874.7" cy="707.7" r="2.1"/><circle cx="876.4" cy="692" r="2.1"/><circle cx="876.2" cy="704.6" r="2.1"/><circle cx="877" cy="692.7" r="2.1"/><circle cx="877.9" cy="704.8" r="2.1"/><circle cx="879.5" cy="695.4" r="2.1"/><circle cx="880.9" cy="707.5" r="2.1"/><circle cx="883.4" cy="693.2" r="2.1"/><circle cx="883.3" cy="704.8" r="2.1"/><circle cx="885.4" cy="694.5" r="2.1"/><circle cx="884.6" cy="704.9" r="2.1"/><circle cx="887.4" cy="693.9" r="2.1"/><circle cx="886.7" cy="706.9" r="2.1"/><circle cx="889.5" cy="694.3" r="2.1"/><circle cx="890.7" cy="707.2" r="2.1"/><circle cx="891.7" cy="692.6" r="2.1"/><circle cx="891.2" cy="704.4" r="2.1"/><circle cx="893" cy="694.5" r="2.1"/><circle cx="893.3" cy="707.9" r="2.1"/><circle cx="896.2" cy="694.4" r="2.1"/><circle cx="895.9" cy="705.9" r="2.1"/><circle cx="897.3" cy="691.8" r="2.1"/><circle cx="897.7" cy="704.2" r="2.1"/><circle cx="899.1" cy="692.4" r="2.1"/><circle cx="899.5" cy="708.4" r="2.1"/><circle cx="902" cy="695" r="2.1"/><circle cx="902.9" cy="706.6" r="2.1"/><circle cx="903.8" cy="694.4" r="2.1"/><circle cx="904.3" cy="707.8" r="2.1"/><circle cx="907.2" cy="694.2" r="2.1"/><circle cx="907.1" cy="705.2" r="2.1"/><circle cx="908.2" cy="692.1" r="2.1"/><circle cx="909.7" cy="706.4" r="2.1"/><circle cx="910.2" cy="691.6" r="2.1"/><circle cx="910.5" cy="705.8" r="2.1"/><circle cx="912.1" cy="695.4" r="2.1"/><circle cx="911.1" cy="708" r="2.1"/><circle cx="914" cy="693.2" r="2.1"/><circle cx="913.2" cy="706.4" r="2.1"/><circle cx="915.8" cy="695.7" r="2.1"/><circle cx="915.8" cy="708.5" r="2.1"/><circle cx="919" cy="693.4" r="2.1"/><circle cx="918.5" cy="708.5" r="2.1"/><circle cx="919.5" cy="691.3" r="2.1"/><circle cx="919.9" cy="706.7" r="2.1"/><circle cx="923.3" cy="692.9" r="2.1"/><circle cx="922.6" cy="705.1" r="2.1"/><circle cx="925.1" cy="691.8" r="2.1"/><circle cx="925.7" cy="704.8" r="2.1"/><circle cx="926.5" cy="695.5" r="2.1"/><circle cx="926" cy="705.8" r="2.1"/><circle cx="928.8" cy="695.2" r="2.1"/><circle cx="928.3" cy="705.6" r="2.1"/><circle cx="931.3" cy="691.6" r="2.1"/><circle cx="931" cy="708.5" r="2.1"/><circle cx="934" cy="691.4" r="2.1"/><circle cx="933.5" cy="705.7" r="2.1"/><circle cx="934.5" cy="694.5" r="2.1"/><circle cx="935" cy="705.3" r="2.1"/><circle cx="935.8" cy="695.4" r="2.1"/><circle cx="936.9" cy="706.9" r="2.1"/><circle cx="940" cy="692.4" r="2.1"/><circle cx="938.9" cy="705.8" r="2.1"/><circle cx="941.6" cy="693.8" r="2.1"/><circle cx="941.9" cy="707.4" r="2.1"/><circle cx="943.5" cy="695.7" r="2.1"/><circle cx="942.5" cy="707.2" r="2.1"/><circle cx="945" cy="693.5" r="2.1"/><circle cx="945.2" cy="708" r="2.1"/><circle cx="947.5" cy="694.1" r="2.1"/><circle cx="948.1" cy="708.5" r="2.1"/><circle cx="948.5" cy="695.3" r="2.1"/><circle cx="948.4" cy="708.9" r="2.1"/><circle cx="952" cy="695.2" r="2.1"/><circle cx="951.9" cy="707.8" r="2.1"/><circle cx="953.5" cy="691.1" r="2.1"/><circle cx="954.3" cy="706.3" r="2.1"/><circle cx="955.4" cy="691.8" r="2.1"/><circle cx="955" cy="708" r="2.1"/><circle cx="957.9" cy="694.1" r="2.1"/><circle cx="957.4" cy="706" r="2.1"/><circle cx="959.2" cy="693.8" r="2.1"/><circle cx="960" cy="705.2" r="2.1"/><circle cx="961.3" cy="690.4" r="2.1"/><circle cx="962" cy="707.3" r="2.1"/><circle cx="964.3" cy="693.4" r="2.1"/><circle cx="963.2" cy="707" r="2.1"/><circle cx="965.5" cy="693.8" r="2.1"/><circle cx="965.9" cy="704.5" r="2.1"/><circle cx="967.9" cy="691.9" r="2.1"/><circle cx="967.5" cy="703.3" r="2.1"/><circle cx="970.4" cy="692.2" r="2.1"/><circle cx="969.9" cy="706.4" r="2.1"/><circle cx="970.7" cy="689.1" r="2.1"/><circle cx="971.4" cy="704.8" r="2.1"/><circle cx="972.9" cy="688.8" r="2.1"/><circle cx="972.1" cy="706.5" r="2.1"/>
<line x1="134.8" y1="668.4" x2="134.8" y2="662.2" stroke="#0cff0c" stroke-width="1"/><circle cx="134.8" cy="662.2" r="2"/><line x1="140.3" y1="683.8" x2="140.3" y2="689.2" stroke="#0cff0c" stroke-width="1"/><circle cx="140.3" cy="689.2" r="2"/><line x1="151.5" y1="668.9" x2="151.5" y2="662.8" stroke="#0cff0c" stroke-width="1"/><circle cx="151.5" cy="662.8" r="2"/><line x1="127.1" y1="683" x2="127.1" y2="689" stroke="#0cff0c" stroke-width="1"/><circle cx="127.1" cy="689" r="2"/><line x1="153.6" y1="683.9" x2="153.6" y2="687.9" stroke="#0cff0c" stroke-width="1"/><circle cx="153.6" cy="687.9" r="2"/><line x1="417.6" y1="693.1" x2="417.6" y2="688.4" stroke="#0cff0c" stroke-width="1"/><circle cx="417.6" cy="688.4" r="2"/><line x1="346.2" y1="705.5" x2="346.2" y2="709.2" stroke="#0cff0c" stroke-width="1"/><circle cx="346.2" cy="709.2" r="2"/><line x1="358.8" y1="706.3" x2="358.8" y2="710.2" stroke="#0cff0c" stroke-width="1"/><circle cx="358.8" cy="710.2" r="2"/><line x1="384" y1="705.6" x2="384" y2="709.4" stroke="#0cff0c" stroke-width="1"/><circle cx="384" cy="709.4" r="2"/><line x1="332.2" y1="691.5" x2="332.2" y2="685.3" stroke="#0cff0c" stroke-width="1"/><circle cx="332.2" cy="685.3" r="2"/><line x1="246.9" y1="692.6" x2="246.9" y2="688.7" stroke="#0cff0c" stroke-width="1"/><circle cx="246.9" cy="688.7" r="2"/><line x1="374.2" y1="693.4" x2="374.2" y2="686.5" stroke="#0cff0c" stroke-width="1"/><circle cx="374.2" cy="686.5" r="2"/><line x1="324.5" y1="705.7" x2="324.5" y2="709.7" stroke="#0cff0c" stroke-width="1"/><circle cx="324.5" cy="709.7" r="2"/><line x1="166.1" y1="692.3" x2="166.1" y2="687.4" stroke="#0cff0c" stroke-width="1"/><circle cx="166.1" cy="687.4" r="2"/><line x1="187.1" y1="703.8" x2="187.1" y2="708.7" stroke="#0cff0c" stroke-width="1"/><circle cx="187.1" cy="708.7" r="2"/><line x1="309.9" y1="692.6" x2="309.9" y2="689.4" stroke="#0cff0c" stroke-width="1"/><circle cx="309.9" cy="689.4" r="2"/><line x1="269.3" y1="705.5" x2="269.3" y2="708.4" stroke="#0cff0c" stroke-width="1"/><circle cx="269.3" cy="708.4" r="2"/><line x1="318.5" y1="693" x2="318.5" y2="688.2" stroke="#0cff0c" stroke-width="1"/><circle cx="318.5" cy="688.2" r="2"/><line x1="386.1" y1="692.6" x2="386.1" y2="686.9" stroke="#0cff0c" stroke-width="1"/><circle cx="386.1" cy="686.9" r="2"/><line x1="364.4" y1="693.7" x2="364.4" y2="688.4" stroke="#0cff0c" stroke-width="1"/><circle cx="364.4" cy="688.4" r="2"/><line x1="318.1" y1="706" x2="318.1" y2="712.7" stroke="#0cff0c" stroke-width="1"/><circle cx="318.1" cy="712.7" r="2"/><line x1="274.1" y1="705.5" x2="274.1" y2="708.6" stroke="#0cff0c" stroke-width="1"/><circle cx="274.1" cy="708.6" r="2"/><line x1="373.5" y1="693.5" x2="373.5" y2="687.4" stroke="#0cff0c" stroke-width="1"/><circle cx="373.5" cy="687.4" r="2"/><line x1="305.5" y1="692.4" x2="305.5" y2="687.9" stroke="#0cff0c" stroke-width="1"/><circle cx="305.5" cy="687.9" r="2"/><line x1="281" y1="693.2" x2="281" y2="687.7" stroke="#0cff0c" stroke-width="1"/><circle cx="281" cy="687.7" r="2"/><line x1="365.8" y1="693.8" x2="365.8" y2="690.4" stroke="#0cff0c" stroke-width="1"/><circle cx="365.8" cy="690.4" r="2"/><line x1="467.2" y1="692.7" x2="467.2" y2="689.2" stroke="#0cff0c" stroke-width="1"/><circle cx="467.2" cy="689.2" r="2"/><line x1="349.5" y1="692.9" x2="349.5" y2="686.1" stroke="#0cff0c" stroke-width="1"/><circle cx="349.5" cy="686.1" r="2"/><line x1="484.2" y1="691.6" x2="484.2" y2="688.5" stroke="#0cff0c" stroke-width="1"/><circle cx="484.2" cy="688.5" r="2"/><line x1="213.9" y1="693.1" x2="213.9" y2="689.6" stroke="#0cff0c" stroke-width="1"/><circle cx="213.9" cy="689.6" r="2"/><line x1="381.6" y1="705.7" x2="381.6" y2="708" stroke="#0cff0c" stroke-width="1"/><circle cx="381.6" cy="708" r="2"/><line x1="165.7" y1="692.4" x2="165.7" y2="688.8" stroke="#0cff0c" stroke-width="1"/><circle cx="165.7" cy="688.8" r="2"/><line x1="201.6" y1="692.7" x2="201.6" y2="688.8" stroke="#0cff0c" stroke-width="1"/><circle cx="201.6" cy="688.8" r="2"/><line x1="399.2" y1="706.4" x2="399.2" y2="713.3" stroke="#0cff0c" stroke-width="1"/><circle cx="399.2" cy="713.3" r="2"/><line x1="297" y1="705.9" x2="297" y2="708.6" stroke="#0cff0c" stroke-width="1"/><circle cx="297" cy="708.6" r="2"/><line x1="360.3" y1="706.4" x2="360.3" y2="712.9" stroke="#0cff0c" stroke-width="1"/><circle cx="360.3" cy="712.9" r="2"/><line x1="203.7" y1="693.2" x2="203.7" y2="686.7" stroke="#0cff0c" stroke-width="1"/><circle cx="203.7" cy="686.7" r="2"/><line x1="389.2" y1="705.8" x2="389.2" y2="708.1" stroke="#0cff0c" stroke-width="1"/><circle cx="389.2" cy="708.1" r="2"/><line x1="363" y1="693.6" x2="363" y2="687.9" stroke="#0cff0c" stroke-width="1"/><circle cx="363" cy="687.9" r="2"/><line x1="421.6" y1="692.5" x2="421.6" y2="690.5" stroke="#0cff0c" stroke-width="1"/><circle cx="421.6" cy="690.5" r="2"/><line x1="401.1" y1="706.4" x2="401.1" y2="711.5" stroke="#0cff0c" stroke-width="1"/><circle cx="401.1" cy="711.5" r="2"/><line x1="278.9" y1="692.9" x2="278.9" y2="686.9" stroke="#0cff0c" stroke-width="1"/><circle cx="278.9" cy="686.9" r="2"/><line x1="479.6" y1="691.8" x2="479.6" y2="688.7" stroke="#0cff0c" stroke-width="1"/><circle cx="479.6" cy="688.7" r="2"/><line x1="488.8" y1="691.2" x2="488.8" y2="687" stroke="#0cff0c" stroke-width="1"/><circle cx="488.8" cy="687" r="2"/><line x1="260.5" y1="706.9" x2="260.5" y2="713.8" stroke="#0cff0c" stroke-width="1"/><circle cx="260.5" cy="713.8" r="2"/><line x1="505.7" y1="667.8" x2="505.7" y2="663.7" stroke="#0cff0c" stroke-width="1"/><circle cx="505.7" cy="663.7" r="2"/><line x1="504.8" y1="680.5" x2="504.8" y2="686.3" stroke="#0cff0c" stroke-width="1"/><circle cx="504.8" cy="686.3" r="2"/><line x1="519.9" y1="706.6" x2="519.9" y2="713.4" stroke="#0cff0c" stroke-width="1"/><circle cx="519.9" cy="713.4" r="2"/><line x1="516.4" y1="691.6" x2="516.4" y2="689.5" stroke="#0cff0c" stroke-width="1"/><circle cx="516.4" cy="689.5" r="2"/><line x1="558.8" y1="669.1" x2="558.8" y2="662.2" stroke="#0cff0c" stroke-width="1"/><circle cx="558.8" cy="662.2" r="2"/><line x1="554.1" y1="684.7" x2="554.1" y2="686.8" stroke="#0cff0c" stroke-width="1"/><circle cx="554.1" cy="686.8" r="2"/><line x1="559.3" y1="684.9" x2="559.3" y2="690.2" stroke="#0cff0c" stroke-width="1"/><circle cx="559.3" cy="690.2" r="2"/><line x1="589.9" y1="668.6" x2="589.9" y2="666.2" stroke="#0cff0c" stroke-width="1"/><circle cx="589.9" cy="666.2" r="2"/><line x1="605.5" y1="683.2" x2="605.5" y2="687.6" stroke="#0cff0c" stroke-width="1"/><circle cx="605.5" cy="687.6" r="2"/><line x1="579.1" y1="684.3" x2="579.1" y2="688.8" stroke="#0cff0c" stroke-width="1"/><circle cx="579.1" cy="688.8" r="2"/><line x1="570.6" y1="668.5" x2="570.6" y2="662.8" stroke="#0cff0c" stroke-width="1"/><circle cx="570.6" cy="662.8" r="2"/><line x1="596.1" y1="668.2" x2="596.1" y2="662.4" stroke="#0cff0c" stroke-width="1"/><circle cx="596.1" cy="662.4" r="2"/><line x1="560.8" y1="684.9" x2="560.8" y2="688.7" stroke="#0cff0c" stroke-width="1"/><circle cx="560.8" cy="688.7" r="2"/><line x1="612.1" y1="683.4" x2="612.1" y2="689.3" stroke="#0cff0c" stroke-width="1"/><circle cx="612.1" cy="689.3" r="2"/><line x1="561.4" y1="669.1" x2="561.4" y2="664.9" stroke="#0cff0c" stroke-width="1"/><circle cx="561.4" cy="664.9" r="2"/><line x1="583.3" y1="668.4" x2="583.3" y2="663.7" stroke="#0cff0c" stroke-width="1"/><circle cx="583.3" cy="663.7" r="2"/><line x1="625.9" y1="706.5" x2="625.9" y2="711.4" stroke="#0cff0c" stroke-width="1"/><circle cx="625.9" cy="711.4" r="2"/><line x1="653.9" y1="707" x2="653.9" y2="712.6" stroke="#0cff0c" stroke-width="1"/><circle cx="653.9" cy="712.6" r="2"/><line x1="646.6" y1="692.5" x2="646.6" y2="689.9" stroke="#0cff0c" stroke-width="1"/><circle cx="646.6" cy="689.9" r="2"/><line x1="649.6" y1="706.5" x2="649.6" y2="712.1" stroke="#0cff0c" stroke-width="1"/><circle cx="649.6" cy="712.1" r="2"/><line x1="676" y1="669.4" x2="676" y2="665.6" stroke="#0cff0c" stroke-width="1"/><circle cx="676" cy="665.6" r="2"/><line x1="675.6" y1="669.5" x2="675.6" y2="662.6" stroke="#0cff0c" stroke-width="1"/><circle cx="675.6" cy="662.6" r="2"/><line x1="681.1" y1="685.2" x2="681.1" y2="691.7" stroke="#0cff0c" stroke-width="1"/><circle cx="681.1" cy="691.7" r="2"/><line x1="663.1" y1="687" x2="663.1" y2="690.9" stroke="#0cff0c" stroke-width="1"/><circle cx="663.1" cy="690.9" r="2"/><line x1="679.9" y1="685.5" x2="679.9" y2="691.2" stroke="#0cff0c" stroke-width="1"/><circle cx="679.9" cy="691.2" r="2"/><line x1="731.2" y1="693.1" x2="731.2" y2="687.2" stroke="#0cff0c" stroke-width="1"/><circle cx="731.2" cy="687.2" r="2"/><line x1="722.2" y1="704.6" x2="722.2" y2="711.6" stroke="#0cff0c" stroke-width="1"/><circle cx="722.2" cy="711.6" r="2"/><line x1="711.7" y1="690.8" x2="711.7" y2="684.3" stroke="#0cff0c" stroke-width="1"/><circle cx="711.7" cy="684.3" r="2"/><line x1="723.7" y1="704.9" x2="723.7" y2="711" stroke="#0cff0c" stroke-width="1"/><circle cx="723.7" cy="711" r="2"/><line x1="741.6" y1="693.1" x2="741.6" y2="686.2" stroke="#0cff0c" stroke-width="1"/><circle cx="741.6" cy="686.2" r="2"/><line x1="717.1" y1="704.5" x2="717.1" y2="710.6" stroke="#0cff0c" stroke-width="1"/><circle cx="717.1" cy="710.6" r="2"/><line x1="756.1" y1="668.4" x2="756.1" y2="664.7" stroke="#0cff0c" stroke-width="1"/><circle cx="756.1" cy="664.7" r="2"/><line x1="756" y1="680.4" x2="756" y2="682.7" stroke="#0cff0c" stroke-width="1"/><circle cx="756" cy="682.7" r="2"/><line x1="929.3" y1="706.8" x2="929.3" y2="712" stroke="#0cff0c" stroke-width="1"/><circle cx="929.3" cy="712" r="2"/><line x1="829.1" y1="705" x2="829.1" y2="711.3" stroke="#0cff0c" stroke-width="1"/><circle cx="829.1" cy="711.3" r="2"/><line x1="845.9" y1="692.3" x2="845.9" y2="689.2" stroke="#0cff0c" stroke-width="1"/><circle cx="845.9" cy="689.2" r="2"/><line x1="819.1" y1="705.1" x2="819.1" y2="710.3" stroke="#0cff0c" stroke-width="1"/><circle cx="819.1" cy="710.3" r="2"/><line x1="859.2" y1="705.8" x2="859.2" y2="708.7" stroke="#0cff0c" stroke-width="1"/><circle cx="859.2" cy="708.7" r="2"/><line x1="768.8" y1="692.4" x2="768.8" y2="687.6" stroke="#0cff0c" stroke-width="1"/><circle cx="768.8" cy="687.6" r="2"/><line x1="805.7" y1="691.9" x2="805.7" y2="688.3" stroke="#0cff0c" stroke-width="1"/><circle cx="805.7" cy="688.3" r="2"/><line x1="821.6" y1="705.1" x2="821.6" y2="708.9" stroke="#0cff0c" stroke-width="1"/><circle cx="821.6" cy="708.9" r="2"/><line x1="919.4" y1="706.9" x2="919.4" y2="710.8" stroke="#0cff0c" stroke-width="1"/><circle cx="919.4" cy="710.8" r="2"/><line x1="774.5" y1="705.5" x2="774.5" y2="710.3" stroke="#0cff0c" stroke-width="1"/><circle cx="774.5" cy="710.3" r="2"/><line x1="886.3" y1="706.7" x2="886.3" y2="711.4" stroke="#0cff0c" stroke-width="1"/><circle cx="886.3" cy="711.4" r="2"/><line x1="953" y1="693.1" x2="953" y2="686.2" stroke="#0cff0c" stroke-width="1"/><circle cx="953" cy="686.2" r="2"/><line x1="893.7" y1="692.7" x2="893.7" y2="686.2" stroke="#0cff0c" stroke-width="1"/><circle cx="893.7" cy="686.2" r="2"/><line x1="950.7" y1="706.8" x2="950.7" y2="708.9" stroke="#0cff0c" stroke-width="1"/><circle cx="950.7" cy="708.9" r="2"/><line x1="895.2" y1="692.7" x2="895.2" y2="687.8" stroke="#0cff0c" stroke-width="1"/><circle cx="895.2" cy="687.8" r="2"/><line x1="937.4" y1="693.6" x2="937.4" y2="687.4" stroke="#0cff0c" stroke-width="1"/><circle cx="937.4" cy="687.4" r="2"/><line x1="831.4" y1="691.5" x2="831.4" y2="689.3" stroke="#0cff0c" stroke-width="1"/><circle cx="831.4" cy="689.3" r="2"/><line x1="789.7" y1="691.5" x2="789.7" y2="686.9" stroke="#0cff0c" stroke-width="1"/><circle cx="789.7" cy="686.9" r="2"/><line x1="959.7" y1="692.6" x2="959.7" y2="689.2" stroke="#0cff0c" stroke-width="1"/><circle cx="959.7" cy="689.2" r="2"/><line x1="844.1" y1="705.7" x2="844.1" y2="709.4" stroke="#0cff0c" stroke-width="1"/><circle cx="844.1" cy="709.4" r="2"/><line x1="904.7" y1="693.2" x2="904.7" y2="690.9" stroke="#0cff0c" stroke-width="1"/><circle cx="904.7" cy="690.9" r="2"/><line x1="886.3" y1="706.7" x2="886.3" y2="709.4" stroke="#0cff0c" stroke-width="1"/><circle cx="886.3" cy="709.4" r="2"/><line x1="777.8" y1="705.2" x2="777.8" y2="707.5" stroke="#0cff0c" stroke-width="1"/><circle cx="777.8" cy="707.5" r="2"/><line x1="956.8" y1="706.2" x2="956.8" y2="709" stroke="#0cff0c" stroke-width="1"/><circle cx="956.8" cy="709" r="2"/><line x1="851.5" y1="692.3" x2="851.5" y2="689.9" stroke="#0cff0c" stroke-width="1"/><circle cx="851.5" cy="689.9" r="2"/>
<polygon points="468,693 468.5,672 469.5,664 472,663 474.5,667 476,680 478,688 481,693"/>
<circle cx="469.5" cy="665" r="2.1"/>
<circle cx="472" cy="663.5" r="2.1"/>
<circle cx="474.5" cy="668" r="2.1"/>
<circle cx="475.5" cy="676" r="2.1"/>
<circle cx="477" cy="684" r="2.1"/>
<circle cx="469" cy="672" r="2.1"/>
<circle cx="468.8" cy="680" r="2.1"/>
<circle cx="471" cy="666" r="2.1"/>
<line x1="113.5" y1="685" x2="113.5" y2="690" stroke="#0cff0c" stroke-width="1"/>
<line x1="156" y1="685" x2="156" y2="691" stroke="#0cff0c" stroke-width="1"/>
<line x1="491" y1="682" x2="491" y2="691" stroke="#0cff0c" stroke-width="1"/>
<line x1="509" y1="682" x2="509" y2="688" stroke="#0cff0c" stroke-width="1"/>
<line x1="523" y1="685" x2="523" y2="688" stroke="#0cff0c" stroke-width="1"/>
<line x1="623" y1="685" x2="623" y2="690" stroke="#0cff0c" stroke-width="1"/>
<line x1="655" y1="687" x2="655" y2="690" stroke="#0cff0c" stroke-width="1"/>
<line x1="697" y1="687" x2="697" y2="690" stroke="#0cff0c" stroke-width="1"/>
<line x1="748" y1="682" x2="748" y2="690" stroke="#0cff0c" stroke-width="1"/>
<line x1="767" y1="682" x2="767" y2="690" stroke="#0cff0c" stroke-width="1"/>
<line x1="232.5" y1="710" x2="232.5" y2="721" stroke="#0cff0c"/><circle cx="232.5" cy="721" r="2"/>
<polygon points="969,709 970,692 972,662 973,644 976,639 980,641 982,615 983.6,603 985.5,612 986,638 988,655 990,650 991,638 993,635 994.5,640 994,670 992,681 988,682 986,670 984.5,645 982,665 979,690 976,709"/>
<circle cx="968.7" cy="709" r="2"/>
<circle cx="970" cy="705.6" r="2"/>
<circle cx="970.2" cy="702.2" r="2"/>
<circle cx="970.1" cy="698.8" r="2"/>
<circle cx="970.1" cy="695.4" r="2"/>
<circle cx="970.2" cy="692" r="2"/>
<circle cx="970.2" cy="689" r="2"/>
<circle cx="970.7" cy="686" r="2"/>
<circle cx="970.6" cy="683" r="2"/>
<circle cx="970.6" cy="680" r="2"/>
<circle cx="971.7" cy="677" r="2"/>
<circle cx="970.8" cy="674" r="2"/>
<circle cx="971.2" cy="671" r="2"/>
<circle cx="972" cy="668" r="2"/>
<circle cx="972.7" cy="665" r="2"/>
<circle cx="971.7" cy="662" r="2"/>
<circle cx="972" cy="659" r="2"/>
<circle cx="972.1" cy="656" r="2"/>
<circle cx="971.9" cy="653" r="2"/>
<circle cx="972.4" cy="650" r="2"/>
<circle cx="973.4" cy="647" r="2"/>
<circle cx="972.4" cy="644" r="2"/>
<circle cx="976" cy="639" r="2"/>
<circle cx="979.6" cy="641" r="2"/>
<circle cx="980.4" cy="637.8" r="2"/>
<circle cx="981" cy="634.5" r="2"/>
<circle cx="980" cy="631.2" r="2"/>
<circle cx="981" cy="628" r="2"/>
<circle cx="980.6" cy="624.8" r="2"/>
<circle cx="981.8" cy="621.5" r="2"/>
<circle cx="982.1" cy="618.2" r="2"/>
<circle cx="981.4" cy="615" r="2"/>
<circle cx="981.9" cy="612" r="2"/>
<circle cx="982.4" cy="609" r="2"/>
<circle cx="982.9" cy="606" r="2"/>
<circle cx="984.4" cy="603" r="2"/>
<circle cx="985" cy="606" r="2"/>
<circle cx="985.4" cy="609" r="2"/>
<circle cx="985.3" cy="612" r="2"/>
<circle cx="985.5" cy="615.2" r="2"/>
<circle cx="985" cy="618.5" r="2"/>
<circle cx="985.6" cy="621.8" r="2"/>
<circle cx="986.7" cy="625" r="2"/>
<circle cx="985" cy="628.2" r="2"/>
<circle cx="985.7" cy="631.5" r="2"/>
<circle cx="985.3" cy="634.8" r="2"/>
<circle cx="986.7" cy="638" r="2"/>
<circle cx="986" cy="641.4" r="2"/>
<circle cx="986.8" cy="644.8" r="2"/>
<circle cx="986.3" cy="648.2" r="2"/>
<circle cx="988" cy="651.6" r="2"/>
<circle cx="988" cy="655" r="2"/>
<circle cx="990.6" cy="650" r="2"/>
<circle cx="990.7" cy="647" r="2"/>
<circle cx="991" cy="644" r="2"/>
<circle cx="990.3" cy="641" r="2"/>
<circle cx="990.5" cy="638" r="2"/>
<circle cx="993.2" cy="635" r="2"/>
<circle cx="993.6" cy="640" r="2"/>
<circle cx="995.3" cy="643" r="2"/>
<circle cx="994.8" cy="646" r="2"/>
<circle cx="994.3" cy="649" r="2"/>
<circle cx="994" cy="652" r="2"/>
<circle cx="993.4" cy="655" r="2"/>
<circle cx="994.3" cy="658" r="2"/>
<circle cx="994.7" cy="661" r="2"/>
<circle cx="993.3" cy="664" r="2"/>
<circle cx="993.2" cy="667" r="2"/>
<circle cx="994.4" cy="670" r="2"/>
<circle cx="993.3" cy="673.7" r="2"/>
<circle cx="993.2" cy="677.3" r="2"/>
<circle cx="991.8" cy="681" r="2"/>
<circle cx="989" cy="682" r="2"/>
<circle cx="988.2" cy="679" r="2"/>
<circle cx="986.6" cy="676" r="2"/>
<circle cx="986.6" cy="673" r="2"/>
<circle cx="986.2" cy="670" r="2"/>
<circle cx="985.7" cy="666.9" r="2"/>
<circle cx="986.3" cy="663.8" r="2"/>
<circle cx="985.8" cy="660.6" r="2"/>
<circle cx="985.9" cy="657.5" r="2"/>
<circle cx="984.6" cy="654.4" r="2"/>
<circle cx="984.9" cy="651.2" r="2"/>
<circle cx="984.8" cy="648.1" r="2"/>
<circle cx="984.7" cy="645" r="2"/>
<circle cx="983.1" cy="648.3" r="2"/>
<circle cx="984.3" cy="651.7" r="2"/>
<circle cx="983.1" cy="655" r="2"/>
<circle cx="982.2" cy="658.3" r="2"/>
<circle cx="983.1" cy="661.7" r="2"/>
<circle cx="982.1" cy="665" r="2"/>
<circle cx="982.1" cy="668.1" r="2"/>
<circle cx="981.7" cy="671.2" r="2"/>
<circle cx="981.1" cy="674.4" r="2"/>
<circle cx="981.3" cy="677.5" r="2"/>
<circle cx="979.2" cy="680.6" r="2"/>
<circle cx="979.4" cy="683.8" r="2"/>
<circle cx="978.7" cy="686.9" r="2"/>
<circle cx="979.3" cy="690" r="2"/>
<circle cx="977.9" cy="693.2" r="2"/>
<circle cx="977.1" cy="696.3" r="2"/>
<circle cx="976.8" cy="699.5" r="2"/>
<circle cx="976.3" cy="702.7" r="2"/>
<circle cx="976.6" cy="705.8" r="2"/></g>
<line x1="983.5" y1="581" x2="983.5" y2="776" stroke="#c02030" stroke-opacity="0.75" stroke-dasharray="4 3" stroke-width="1"/>
<line x1="892.4" y1="616.6" x2="983.6" y2="602" stroke="#d8d8d8" stroke-width="1.3"/>
<circle cx="983.6" cy="602" r="3" fill="#ff2020"/>

<text x="883.3" y="95" class="ann" textLength="202" lengthAdjust="spacingAndGlyphs">2023/06/01 03:04:45，9.892mm/s</text>
<text x="883.3" y="368" class="ann" textLength="202" lengthAdjust="spacingAndGlyphs">2023/06/01 03:04:45，8.612mm/s</text>
<text x="883.3" y="636.5" class="ann" textLength="202" lengthAdjust="spacingAndGlyphs">2023/06/01 03:04:45，2.339mm/s</text>

</svg>
<div class="pbar">
<div style="position:absolute;left:0;top:0;width:100px;height:1px;background:#2f3450"></div>
<div style="position:absolute;left:0;top:0;width:1px;height:31px;background:#2a2f4a"></div>
<div style="position:absolute;left:51px;top:0;width:1px;height:31px;background:#363c58"></div>
<div style="position:absolute;left:99.5px;top:0;width:3px;height:31px;background:#0e1430"></div>
<svg style="position:absolute;left:0;top:0" width="160" height="30"><g stroke="#aab0c2" stroke-width="2" fill="none"><path d="M18 15 H34 M22.5 11 L18 15 L22.5 19"/><path d="M68 15 H85.5 M81 11 L85.5 15 L81 19"/></g></svg>
<div class="pg" style="left:102.5px;width:42.5px;background:#1e9cff;color:#e8f8ff;border-radius:2px 2px 0 0;font-size:14px;line-height:35px;top:0;height:31px">1</div>
</div>
<div style="position:absolute;left:0;top:418px;width:6px;height:12px"><svg width="6" height="12"><path d="M0 1 L5 6 L0 11" stroke="#c8c8c8" stroke-width="1.3" fill="none"/></svg></div>
</body></html>
